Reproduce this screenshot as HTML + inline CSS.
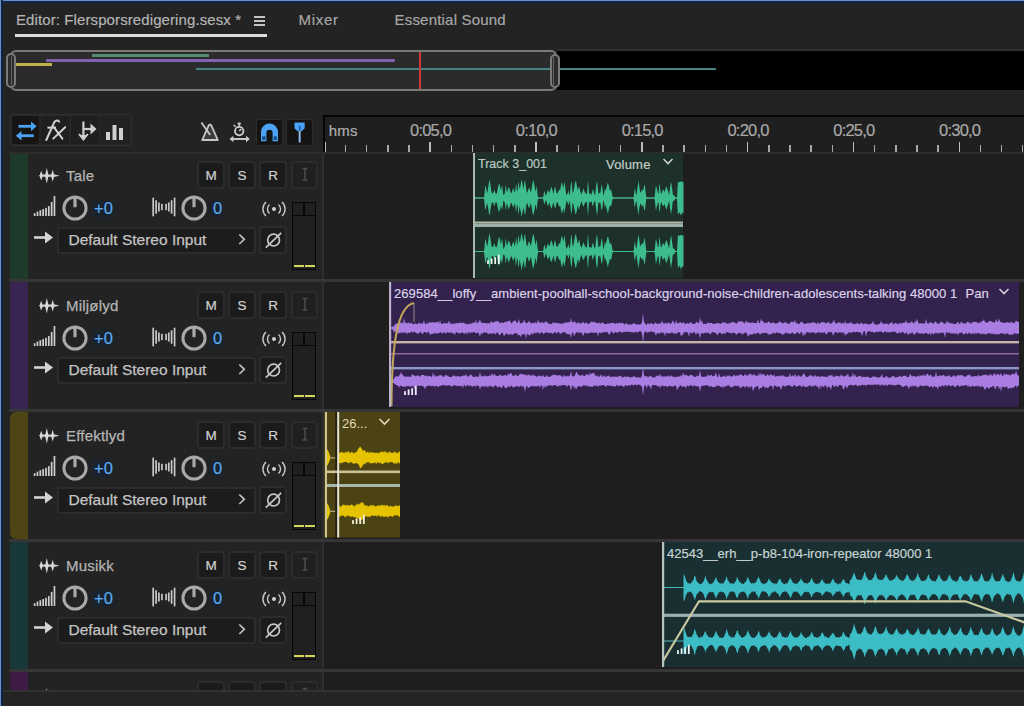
<!DOCTYPE html>
<html><head><meta charset="utf-8"><style>
html,body{margin:0;padding:0;}
body{width:1024px;height:706px;overflow:hidden;position:relative;background:#232323;font-family:"Liberation Sans", sans-serif;}
body>div,body>svg{position:absolute;}
</style></head><body>
<div style="left:0px;top:0px;width:1024px;height:1px;background:#6b90c6;"></div>
<div style="left:0px;top:1px;width:1024px;height:1.5px;background:#10264a;"></div>
<div style="left:0px;top:0px;width:1.4px;height:706px;background:#6b90c6;"></div>
<div style="left:1.4px;top:0px;width:1.7px;height:706px;background:#0e2446;"></div>
<div style="left:3px;top:40px;width:4px;height:666px;background:#26241f;"></div>
<div style="left:16px;top:12.30px;font-size:15px;line-height:15px;color:#b4b4b4;white-space:nowrap;letter-spacing:0.1px;-webkit-text-stroke:0.2px #b4b4b4;">Editor: Flersporsredigering.sesx *</div>
<div style="left:254.3px;top:15.8px;width:11.2px;height:2px;background:#c4c4c4;"></div>
<div style="left:254.3px;top:19.8px;width:11.2px;height:2px;background:#c4c4c4;"></div>
<div style="left:254.3px;top:23.8px;width:11.2px;height:2px;background:#c4c4c4;"></div>
<div style="left:15px;top:34px;width:252px;height:3px;background:#dcdcdc;"></div>
<div style="left:298.5px;top:12.30px;font-size:15px;line-height:15px;color:#a6a6a6;white-space:nowrap;letter-spacing:0.7px;-webkit-text-stroke:0.2px #a6a6a6;">Mixer</div>
<div style="left:394.5px;top:12.30px;font-size:15px;line-height:15px;color:#a6a6a6;white-space:nowrap;letter-spacing:0.2px;-webkit-text-stroke:0.2px #a6a6a6;">Essential Sound</div>
<div style="left:557px;top:49px;width:467px;height:2px;background:#303030;"></div>
<div style="left:557px;top:51px;width:467px;height:39px;background:#000;"></div>
<div style="left:10px;top:50px;width:547px;height:41px;background:#2b2b2b;box-sizing:border-box;border:2px solid #7a7a76;border-radius:6px;"></div>
<div style="left:54px;top:54px;width:3px;height:0px;background:#000;"></div>
<div style="left:16px;top:63px;width:36px;height:3px;background:#c2b24a;"></div>
<div style="left:46px;top:59px;width:349px;height:3px;background:#8261b0;border-radius:1px"></div>
<div style="left:92px;top:54px;width:117px;height:3px;background:#558a72;"></div>
<div style="left:196px;top:67.6px;width:520px;height:2.8px;background:#468484;"></div>
<div style="left:419px;top:52px;width:2px;height:37px;background:#d0383a;"></div>
<div style="left:6px;top:53px;width:10px;height:35px;background:#2b2b2b;box-sizing:border-box;border:2px solid #7a7a76;border-radius:5px;"></div>
<div style="left:10.5px;top:56px;width:1.2px;height:29px;background:#666;"></div>
<div style="left:550px;top:54px;width:10px;height:34px;background:#2b2b2b;box-sizing:border-box;border:2px solid #7a7a76;border-radius:5px;"></div>
<div style="left:552.5px;top:57px;width:1.2px;height:28px;background:#666;"></div>
<div style="left:10px;top:114px;width:122px;height:32px;background:#262626;box-sizing:border-box;border:1.5px solid #2f2f2f;border-radius:4px;"></div>
<div style="left:12px;top:116px;width:27px;height:28px;background:#171514;border-radius:2px"></div>
<div style="left:41px;top:116px;width:28px;height:28px;background:#1f1f1f;border-radius:2px"></div>
<div style="left:71px;top:116px;width:28px;height:28px;background:#1f1f1f;border-radius:2px"></div>
<div style="left:100.5px;top:116px;width:29.5px;height:28px;background:#222;border-radius:2px"></div>
<svg style="left:14px;top:120px;" width="26" height="24" viewBox="0 0 26 24"><path d="M4.5 6.3 H18" stroke="#4aa3f5" stroke-width="2.8" fill="none"/><path d="M17 1.4 L22.6 6.3 L17 11.2 Z" fill="#4aa3f5"/><path d="M7 15.7 H19.8" stroke="#4aa3f5" stroke-width="2.8" fill="none"/><path d="M7.5 10.9 L1.9 15.7 L7.5 20.5 Z" fill="#4aa3f5"/></svg>
<svg style="left:40px;top:116px;" width="30" height="28" viewBox="0 0 30 28"><path d="M19.2 5.6 C17.5 3.9, 14.6 4.3, 13.6 7.6 L6.3 24" stroke="#d0d0d0" stroke-width="2" fill="none" stroke-linecap="round"/><path d="M7.4 11.6 H16" stroke="#d0d0d0" stroke-width="2"/><path d="M13.8 11.2 L22.4 22.6 M25.2 11.2 L13.2 22.6" stroke="#d0d0d0" stroke-width="2" stroke-linecap="round"/></svg>
<svg style="left:76px;top:119px;" width="24" height="24" viewBox="0 0 24 24"><path d="M7.4 2.5 V19" stroke="#cfcfcf" stroke-width="2.2" fill="none"/><path d="M2.2 15.5 L7.4 22 L12.6 15.5 L11 14.5 L7.4 18.5 L3.8 14.5 Z" fill="#cfcfcf"/><path d="M4.5 16 L7.4 19.5 L10.3 16 Z" fill="#cfcfcf"/><path d="M7.4 10 H18" stroke="#cfcfcf" stroke-width="2.2" fill="none"/><path d="M14.5 4.5 L20.5 10 L14.5 15.5 Z" fill="#cfcfcf"/></svg>
<svg style="left:104px;top:122px;" width="22" height="20" viewBox="0 0 22 20"><rect x="2" y="10" width="4" height="8" fill="#cfcfcf"/><rect x="8.5" y="3" width="4" height="15" fill="#cfcfcf"/><rect x="15" y="6" width="4" height="12" fill="#cfcfcf"/></svg>
<svg style="left:199px;top:119px;" width="24" height="25" viewBox="0 0 24 25"><path d="M3.2 21 L9.6 6.6 Q11 4.4 12.4 6.6 L18.8 21 Z" fill="#3c3c3c" stroke="#c8c8c8" stroke-width="1.8" stroke-linejoin="round"/><path d="M2.4 3.6 L11.2 15.9" stroke="#c8c8c8" stroke-width="1.8"/></svg>
<svg style="left:227px;top:119px;" width="26" height="25" viewBox="0 0 26 25"><circle cx="12.2" cy="12.1" r="4.2" fill="none" stroke="#cfcfcf" stroke-width="1.8"/><path d="M12.2 12.1 L14.2 9.9" stroke="#cfcfcf" stroke-width="1.5"/><rect x="10.6" y="3.6" width="3.2" height="1.9" fill="#cfcfcf"/><path d="M12.2 5 V8" stroke="#cfcfcf" stroke-width="1.4"/><path d="M6.8 6 L8.4 7.6" stroke="#cfcfcf" stroke-width="1.6"/><path d="M5 20 H20.5" stroke="#cfcfcf" stroke-width="1.9"/><path d="M6.4 16.8 L2.6 20 L6.4 23.2 Z" fill="#cfcfcf"/><path d="M19 16.8 L22.8 20 L19 23.2 Z" fill="#cfcfcf"/></svg>
<div style="left:255.5px;top:118.5px;width:27.5px;height:27.5px;background:#151413;box-sizing:border-box;border:1.6px solid #2c2c2c;border-radius:3px;"></div>
<svg style="left:258px;top:121px;" width="23" height="23" viewBox="0 0 23 23"><path d="M3 20.3 V11 A8.5 8.5 0 0 1 20 11 V20.3 H14.6 V11.8 A3.1 3.1 0 0 0 8.4 11.8 V20.3 Z" fill="#4aa3f5"/><rect x="4.2" y="15.3" width="3.2" height="3.6" fill="#1a4a84"/><rect x="15.6" y="15.3" width="3.2" height="3.6" fill="#1a4a84"/></svg>
<div style="left:285.5px;top:118.5px;width:27.5px;height:27.5px;background:#151413;box-sizing:border-box;border:1.6px solid #2c2c2c;border-radius:3px;"></div>
<svg style="left:288px;top:121px;" width="23" height="23" viewBox="0 0 23 23"><path d="M6.5 1.6 H16.7 V7.2 L13.6 10.2 H9.6 L6.5 7.2 Z" fill="#4aa3f5"/><rect x="10.7" y="9" width="1.9" height="12.5" fill="#8ec4f0"/><rect x="11" y="4.8" width="1.3" height="5.2" fill="#1a4a84"/></svg>
<div style="left:323px;top:115px;width:701px;height:38px;background:#1f1f1f;"></div>
<div style="left:323px;top:115px;width:701px;height:2px;background:#050505;"></div>
<div style="left:323px;top:115px;width:2px;height:38px;background:#050505;"></div>
<div style="left:323px;top:152px;width:701px;height:2px;background:#2c2c2c;"></div>
<div style="left:328.7px;top:122.50px;font-size:15px;line-height:15px;color:#b0b0b0;white-space:nowrap;-webkit-text-stroke:0.2px #b0b0b0;letter-spacing:0.2px;">hms</div>
<div style="left:324.75px;top:141.5px;width:1.6px;height:11px;background:#bcbcbc;"></div>
<div style="left:344.75px;top:145px;width:1.6px;height:7.5px;background:#a8a8a8;"></div>
<div style="left:365.75px;top:145px;width:1.6px;height:7.5px;background:#a8a8a8;"></div>
<div style="left:387.25px;top:145px;width:1.6px;height:7.5px;background:#a8a8a8;"></div>
<div style="left:408.25px;top:145px;width:1.6px;height:7.5px;background:#a8a8a8;"></div>
<div style="left:429.25px;top:141.5px;width:1.6px;height:11px;background:#bcbcbc;"></div>
<div style="left:395.61px;top:121.83px;width:70px;text-align:center;font-size:16.5px;line-height:16.5px;color:#a8a8a8;white-space:nowrap;letter-spacing:-0.8px;-webkit-text-stroke:0.2px #a8a8a8;">0:05,0</div>
<div style="left:450.75px;top:145px;width:1.6px;height:7.5px;background:#a8a8a8;"></div>
<div style="left:471.75px;top:145px;width:1.6px;height:7.5px;background:#a8a8a8;"></div>
<div style="left:492.75px;top:145px;width:1.6px;height:7.5px;background:#a8a8a8;"></div>
<div style="left:514.25px;top:145px;width:1.6px;height:7.5px;background:#a8a8a8;"></div>
<div style="left:535.25px;top:141.5px;width:1.6px;height:11px;background:#bcbcbc;"></div>
<div style="left:501.42px;top:121.83px;width:70px;text-align:center;font-size:16.5px;line-height:16.5px;color:#a8a8a8;white-space:nowrap;letter-spacing:-0.8px;-webkit-text-stroke:0.2px #a8a8a8;">0:10,0</div>
<div style="left:556.25px;top:145px;width:1.6px;height:7.5px;background:#a8a8a8;"></div>
<div style="left:577.75px;top:145px;width:1.6px;height:7.5px;background:#a8a8a8;"></div>
<div style="left:598.75px;top:145px;width:1.6px;height:7.5px;background:#a8a8a8;"></div>
<div style="left:619.75px;top:145px;width:1.6px;height:7.5px;background:#a8a8a8;"></div>
<div style="left:641.25px;top:141.5px;width:1.6px;height:11px;background:#bcbcbc;"></div>
<div style="left:607.23px;top:121.83px;width:70px;text-align:center;font-size:16.5px;line-height:16.5px;color:#a8a8a8;white-space:nowrap;letter-spacing:-0.8px;-webkit-text-stroke:0.2px #a8a8a8;">0:15,0</div>
<div style="left:662.25px;top:145px;width:1.6px;height:7.5px;background:#a8a8a8;"></div>
<div style="left:683.25px;top:145px;width:1.6px;height:7.5px;background:#a8a8a8;"></div>
<div style="left:704.75px;top:145px;width:1.6px;height:7.5px;background:#a8a8a8;"></div>
<div style="left:725.75px;top:145px;width:1.6px;height:7.5px;background:#a8a8a8;"></div>
<div style="left:746.75px;top:141.5px;width:1.6px;height:11px;background:#bcbcbc;"></div>
<div style="left:713.04px;top:121.83px;width:70px;text-align:center;font-size:16.5px;line-height:16.5px;color:#a8a8a8;white-space:nowrap;letter-spacing:-0.8px;-webkit-text-stroke:0.2px #a8a8a8;">0:20,0</div>
<div style="left:768.25px;top:145px;width:1.6px;height:7.5px;background:#a8a8a8;"></div>
<div style="left:789.25px;top:145px;width:1.6px;height:7.5px;background:#a8a8a8;"></div>
<div style="left:810.25px;top:145px;width:1.6px;height:7.5px;background:#a8a8a8;"></div>
<div style="left:831.75px;top:145px;width:1.6px;height:7.5px;background:#a8a8a8;"></div>
<div style="left:852.75px;top:141.5px;width:1.6px;height:11px;background:#bcbcbc;"></div>
<div style="left:818.85px;top:121.83px;width:70px;text-align:center;font-size:16.5px;line-height:16.5px;color:#a8a8a8;white-space:nowrap;letter-spacing:-0.8px;-webkit-text-stroke:0.2px #a8a8a8;">0:25,0</div>
<div style="left:873.75px;top:145px;width:1.6px;height:7.5px;background:#a8a8a8;"></div>
<div style="left:895.25px;top:145px;width:1.6px;height:7.5px;background:#a8a8a8;"></div>
<div style="left:916.25px;top:145px;width:1.6px;height:7.5px;background:#a8a8a8;"></div>
<div style="left:937.25px;top:145px;width:1.6px;height:7.5px;background:#a8a8a8;"></div>
<div style="left:958.75px;top:141.5px;width:1.6px;height:11px;background:#bcbcbc;"></div>
<div style="left:924.66px;top:121.83px;width:70px;text-align:center;font-size:16.5px;line-height:16.5px;color:#a8a8a8;white-space:nowrap;letter-spacing:-0.8px;-webkit-text-stroke:0.2px #a8a8a8;">0:30,0</div>
<div style="left:979.75px;top:145px;width:1.6px;height:7.5px;background:#a8a8a8;"></div>
<div style="left:1000.75px;top:145px;width:1.6px;height:7.5px;background:#a8a8a8;"></div>
<div style="left:1021.75px;top:145px;width:1.6px;height:7.5px;background:#a8a8a8;"></div>
<div style="left:3px;top:152px;width:319px;height:127px;background:#232323;"></div>
<div style="left:9.5px;top:152px;width:18.5px;height:127px;background:#1e3a2b;border-radius:2px 0 0 2px;"></div>
<div style="left:322px;top:152px;width:2px;height:127px;background:#2e2e2e;"></div>
<div style="left:324px;top:152px;width:700px;height:127px;background:#1e1e1e;"></div>
<div style="left:9px;top:279px;width:1015px;height:3px;background:#363636;"></div>
<svg style="left:34px;top:164px;" width="30" height="22" viewBox="0 0 30 22"><path d="M4.5 11.7 L8 10.6 L21 10.6 L25.5 11.7 L21 12.8 L8 12.8 Z" fill="#d0d0d0"/><path d="M7.2 6.8 L8.9 11.7 L7.2 16.6 L5.5 11.7 Z M12.8 4 L14.6 11.7 L12.8 19.4 L11 11.7 Z M18.7 5.8 L20.4 11.7 L18.7 17.6 L17 11.7 Z" fill="#d8d8d8"/></svg>
<div style="left:66px;top:168.10px;font-size:15px;line-height:15px;color:#b4b4b4;white-space:nowrap;-webkit-text-stroke:0.25px #b4b4b4;letter-spacing:0.2px;">Tale</div>
<div style="left:197px;top:160.8px;width:27.5px;height:28px;background:#1b1b1b;box-sizing:border-box;border:2px solid #2c2c2c;border-radius:4px;"></div>
<div style="left:197.00px;top:169.07px;width:28px;text-align:center;font-size:13.5px;line-height:13.5px;color:#d0d0d0;white-space:nowrap;-webkit-text-stroke:0.2px #d0d0d0;">M</div>
<div style="left:228px;top:160.8px;width:27.5px;height:28px;background:#1b1b1b;box-sizing:border-box;border:2px solid #2c2c2c;border-radius:4px;"></div>
<div style="left:228.00px;top:169.07px;width:28px;text-align:center;font-size:13.5px;line-height:13.5px;color:#d0d0d0;white-space:nowrap;-webkit-text-stroke:0.2px #d0d0d0;">S</div>
<div style="left:259px;top:160.8px;width:27.5px;height:28px;background:#1b1b1b;box-sizing:border-box;border:2px solid #2c2c2c;border-radius:4px;"></div>
<div style="left:259.00px;top:169.07px;width:28px;text-align:center;font-size:13.5px;line-height:13.5px;color:#d0d0d0;white-space:nowrap;-webkit-text-stroke:0.2px #d0d0d0;">R</div>
<div style="left:290.5px;top:160.8px;width:27.5px;height:28px;background:#202020;box-sizing:border-box;border:2px solid #2c2c2c;border-radius:4px;"></div>
<svg style="left:290.5px;top:161px;" width="28" height="28" viewBox="0 0 28 28"><path d="M11.5 7.5 H16.5 M11.5 19 H16.5 M14 7.5 V19" stroke="#4c4c4c" stroke-width="1.5" fill="none"/></svg>
<svg style="left:33px;top:195.8px;" width="24" height="21" viewBox="0 0 24 21"><rect x="0.80" y="17.20" width="1.7" height="2.80" fill="#cfcfcf"/><rect x="3.63" y="15.60" width="1.7" height="4.40" fill="#cfcfcf"/><rect x="6.46" y="14.20" width="1.7" height="5.80" fill="#cfcfcf"/><rect x="9.29" y="13.10" width="1.7" height="6.90" fill="#cfcfcf"/><rect x="12.12" y="11.90" width="1.7" height="8.10" fill="#cfcfcf"/><rect x="14.95" y="10.10" width="1.7" height="9.90" fill="#cfcfcf"/><rect x="17.78" y="5.90" width="1.7" height="14.10" fill="#cfcfcf"/><rect x="20.61" y="0.00" width="1.7" height="20.00" fill="#cfcfcf"/></svg>
<svg style="left:62px;top:195px;" width="26" height="26" viewBox="0 0 26 26"><circle cx="13" cy="13" r="11.1" fill="none" stroke="#a9a9a9" stroke-width="3"/><rect x="11.4" y="3" width="3.2" height="9.2" fill="#a9a9a9"/></svg>
<div style="left:92px;top:200px;width:22px;height:17px;background:#19232e;border-radius:3px;filter:blur(2px);"></div>
<div style="left:94px;top:199.53px;font-size:16.5px;line-height:16.5px;color:#5aa8ee;white-space:nowrap;-webkit-text-stroke:0.2px #5aa8ee;">+0</div>
<svg style="left:151px;top:196.5px;" width="26" height="20" viewBox="0 0 26 20"><rect x="1.35" y="0.70" width="1.7" height="18.6" fill="#c8c8c8"/><rect x="4.25" y="3.25" width="1.7" height="13.5" fill="#c8c8c8"/><rect x="7.05" y="5.50" width="1.7" height="9" fill="#c8c8c8"/><rect x="10.05" y="6.80" width="1.7" height="6.4" fill="#c8c8c8"/><rect x="14.25" y="6.80" width="1.7" height="6.4" fill="#c8c8c8"/><rect x="16.95" y="5.50" width="1.7" height="9" fill="#c8c8c8"/><rect x="19.75" y="3.25" width="1.7" height="13.5" fill="#c8c8c8"/><rect x="22.75" y="0.70" width="1.7" height="18.6" fill="#c8c8c8"/></svg>
<svg style="left:181px;top:195px;" width="26" height="26" viewBox="0 0 26 26"><circle cx="13" cy="13" r="11.1" fill="none" stroke="#a9a9a9" stroke-width="3"/><rect x="11.4" y="3" width="3.2" height="9.2" fill="#a9a9a9"/></svg>
<div style="left:211px;top:200px;width:13px;height:17px;background:#19232e;border-radius:3px;filter:blur(2px);"></div>
<div style="left:213px;top:199.53px;font-size:16.5px;line-height:16.5px;color:#5aa8ee;white-space:nowrap;-webkit-text-stroke:0.2px #5aa8ee;">0</div>
<svg style="left:262px;top:200px;" width="24" height="18" viewBox="0 0 24 18"><circle cx="12" cy="9" r="2" fill="#d0d0d0"/><path d="M7.5 4.5 A6 6 0 0 0 7.5 13.5 M16.5 4.5 A6 6 0 0 1 16.5 13.5" stroke="#c8c8c8" stroke-width="1.4" fill="none"/><path d="M4 2 A9.5 9.5 0 0 0 4 16 M20 2 A9.5 9.5 0 0 1 20 16" stroke="#c8c8c8" stroke-width="1.4" fill="none"/></svg>
<div style="left:292px;top:201.5px;width:24px;height:68px;background:#202020;box-sizing:border-box;border:1.6px solid #060606;"></div>
<div style="left:292px;top:214.8px;width:24px;height:1.6px;background:#060606;"></div>
<div style="left:303.2px;top:201.5px;width:1.6px;height:14px;background:#060606;"></div>
<div style="left:294px;top:265.2px;width:9.5px;height:2.2px;background:#d6d65a;"></div>
<div style="left:305px;top:265.2px;width:9.5px;height:2.2px;background:#d6d65a;"></div>
<svg style="left:33px;top:230px;" width="22" height="15" viewBox="0 0 22 15"><path d="M1 7.5 H14" stroke="#d4d4d4" stroke-width="2.6"/><path d="M12 1.5 L20 7.5 L12 13.5 Z" fill="#d4d4d4"/></svg>
<div style="left:57px;top:226.5px;width:198.5px;height:27px;background:#1c1c1c;box-sizing:border-box;border:2px solid #2c2c2c;border-radius:3px;"></div>
<div style="left:68.5px;top:231.68px;font-size:15.5px;line-height:15.5px;color:#c4c4c4;white-space:nowrap;-webkit-text-stroke:0.25px #c4c4c4;">Default Stereo Input</div>
<svg style="left:236px;top:232.3px;" width="12" height="14" viewBox="0 0 12 14"><path d="M3.3 2.5 L8.3 7.3 L3.3 12" stroke="#c0c0c0" stroke-width="1.7" fill="none"/></svg>
<div style="left:259px;top:226px;width:27.5px;height:27.5px;background:#1c1c1c;box-sizing:border-box;border:2px solid #2c2c2c;border-radius:4px;"></div>
<svg style="left:259px;top:226.5px;" width="28" height="27" viewBox="0 0 28 27"><circle cx="14.6" cy="13.1" r="5.9" fill="none" stroke="#c8c8c8" stroke-width="1.7"/><path d="M6.8 20.7 L22.2 5.8" stroke="#c8c8c8" stroke-width="1.7"/></svg>
<div style="left:3px;top:282px;width:319px;height:127px;background:#232323;"></div>
<div style="left:9.5px;top:282px;width:18.5px;height:127px;background:#3a2451;border-radius:2px 0 0 2px;"></div>
<div style="left:322px;top:282px;width:2px;height:127px;background:#2e2e2e;"></div>
<div style="left:324px;top:282px;width:700px;height:127px;background:#1e1e1e;"></div>
<div style="left:9px;top:409px;width:1015px;height:3px;background:#363636;"></div>
<svg style="left:34px;top:294px;" width="30" height="22" viewBox="0 0 30 22"><path d="M4.5 11.7 L8 10.6 L21 10.6 L25.5 11.7 L21 12.8 L8 12.8 Z" fill="#d0d0d0"/><path d="M7.2 6.8 L8.9 11.7 L7.2 16.6 L5.5 11.7 Z M12.8 4 L14.6 11.7 L12.8 19.4 L11 11.7 Z M18.7 5.8 L20.4 11.7 L18.7 17.6 L17 11.7 Z" fill="#d8d8d8"/></svg>
<div style="left:66px;top:298.10px;font-size:15px;line-height:15px;color:#b4b4b4;white-space:nowrap;-webkit-text-stroke:0.25px #b4b4b4;letter-spacing:0.2px;">Miljølyd</div>
<div style="left:197px;top:290.8px;width:27.5px;height:28px;background:#1b1b1b;box-sizing:border-box;border:2px solid #2c2c2c;border-radius:4px;"></div>
<div style="left:197.00px;top:299.07px;width:28px;text-align:center;font-size:13.5px;line-height:13.5px;color:#d0d0d0;white-space:nowrap;-webkit-text-stroke:0.2px #d0d0d0;">M</div>
<div style="left:228px;top:290.8px;width:27.5px;height:28px;background:#1b1b1b;box-sizing:border-box;border:2px solid #2c2c2c;border-radius:4px;"></div>
<div style="left:228.00px;top:299.07px;width:28px;text-align:center;font-size:13.5px;line-height:13.5px;color:#d0d0d0;white-space:nowrap;-webkit-text-stroke:0.2px #d0d0d0;">S</div>
<div style="left:259px;top:290.8px;width:27.5px;height:28px;background:#1b1b1b;box-sizing:border-box;border:2px solid #2c2c2c;border-radius:4px;"></div>
<div style="left:259.00px;top:299.07px;width:28px;text-align:center;font-size:13.5px;line-height:13.5px;color:#d0d0d0;white-space:nowrap;-webkit-text-stroke:0.2px #d0d0d0;">R</div>
<div style="left:290.5px;top:290.8px;width:27.5px;height:28px;background:#202020;box-sizing:border-box;border:2px solid #2c2c2c;border-radius:4px;"></div>
<svg style="left:290.5px;top:291px;" width="28" height="28" viewBox="0 0 28 28"><path d="M11.5 7.5 H16.5 M11.5 19 H16.5 M14 7.5 V19" stroke="#4c4c4c" stroke-width="1.5" fill="none"/></svg>
<svg style="left:33px;top:325.8px;" width="24" height="21" viewBox="0 0 24 21"><rect x="0.80" y="17.20" width="1.7" height="2.80" fill="#cfcfcf"/><rect x="3.63" y="15.60" width="1.7" height="4.40" fill="#cfcfcf"/><rect x="6.46" y="14.20" width="1.7" height="5.80" fill="#cfcfcf"/><rect x="9.29" y="13.10" width="1.7" height="6.90" fill="#cfcfcf"/><rect x="12.12" y="11.90" width="1.7" height="8.10" fill="#cfcfcf"/><rect x="14.95" y="10.10" width="1.7" height="9.90" fill="#cfcfcf"/><rect x="17.78" y="5.90" width="1.7" height="14.10" fill="#cfcfcf"/><rect x="20.61" y="0.00" width="1.7" height="20.00" fill="#cfcfcf"/></svg>
<svg style="left:62px;top:325px;" width="26" height="26" viewBox="0 0 26 26"><circle cx="13" cy="13" r="11.1" fill="none" stroke="#a9a9a9" stroke-width="3"/><rect x="11.4" y="3" width="3.2" height="9.2" fill="#a9a9a9"/></svg>
<div style="left:92px;top:330px;width:22px;height:17px;background:#19232e;border-radius:3px;filter:blur(2px);"></div>
<div style="left:94px;top:329.53px;font-size:16.5px;line-height:16.5px;color:#5aa8ee;white-space:nowrap;-webkit-text-stroke:0.2px #5aa8ee;">+0</div>
<svg style="left:151px;top:326.5px;" width="26" height="20" viewBox="0 0 26 20"><rect x="1.35" y="0.70" width="1.7" height="18.6" fill="#c8c8c8"/><rect x="4.25" y="3.25" width="1.7" height="13.5" fill="#c8c8c8"/><rect x="7.05" y="5.50" width="1.7" height="9" fill="#c8c8c8"/><rect x="10.05" y="6.80" width="1.7" height="6.4" fill="#c8c8c8"/><rect x="14.25" y="6.80" width="1.7" height="6.4" fill="#c8c8c8"/><rect x="16.95" y="5.50" width="1.7" height="9" fill="#c8c8c8"/><rect x="19.75" y="3.25" width="1.7" height="13.5" fill="#c8c8c8"/><rect x="22.75" y="0.70" width="1.7" height="18.6" fill="#c8c8c8"/></svg>
<svg style="left:181px;top:325px;" width="26" height="26" viewBox="0 0 26 26"><circle cx="13" cy="13" r="11.1" fill="none" stroke="#a9a9a9" stroke-width="3"/><rect x="11.4" y="3" width="3.2" height="9.2" fill="#a9a9a9"/></svg>
<div style="left:211px;top:330px;width:13px;height:17px;background:#19232e;border-radius:3px;filter:blur(2px);"></div>
<div style="left:213px;top:329.53px;font-size:16.5px;line-height:16.5px;color:#5aa8ee;white-space:nowrap;-webkit-text-stroke:0.2px #5aa8ee;">0</div>
<svg style="left:262px;top:330px;" width="24" height="18" viewBox="0 0 24 18"><circle cx="12" cy="9" r="2" fill="#d0d0d0"/><path d="M7.5 4.5 A6 6 0 0 0 7.5 13.5 M16.5 4.5 A6 6 0 0 1 16.5 13.5" stroke="#c8c8c8" stroke-width="1.4" fill="none"/><path d="M4 2 A9.5 9.5 0 0 0 4 16 M20 2 A9.5 9.5 0 0 1 20 16" stroke="#c8c8c8" stroke-width="1.4" fill="none"/></svg>
<div style="left:292px;top:331.5px;width:24px;height:68px;background:#202020;box-sizing:border-box;border:1.6px solid #060606;"></div>
<div style="left:292px;top:344.8px;width:24px;height:1.6px;background:#060606;"></div>
<div style="left:303.2px;top:331.5px;width:1.6px;height:14px;background:#060606;"></div>
<div style="left:294px;top:395.2px;width:9.5px;height:2.2px;background:#d6d65a;"></div>
<div style="left:305px;top:395.2px;width:9.5px;height:2.2px;background:#d6d65a;"></div>
<svg style="left:33px;top:360px;" width="22" height="15" viewBox="0 0 22 15"><path d="M1 7.5 H14" stroke="#d4d4d4" stroke-width="2.6"/><path d="M12 1.5 L20 7.5 L12 13.5 Z" fill="#d4d4d4"/></svg>
<div style="left:57px;top:356.5px;width:198.5px;height:27px;background:#1c1c1c;box-sizing:border-box;border:2px solid #2c2c2c;border-radius:3px;"></div>
<div style="left:68.5px;top:361.68px;font-size:15.5px;line-height:15.5px;color:#c4c4c4;white-space:nowrap;-webkit-text-stroke:0.25px #c4c4c4;">Default Stereo Input</div>
<svg style="left:236px;top:362.3px;" width="12" height="14" viewBox="0 0 12 14"><path d="M3.3 2.5 L8.3 7.3 L3.3 12" stroke="#c0c0c0" stroke-width="1.7" fill="none"/></svg>
<div style="left:259px;top:356px;width:27.5px;height:27.5px;background:#1c1c1c;box-sizing:border-box;border:2px solid #2c2c2c;border-radius:4px;"></div>
<svg style="left:259px;top:356.5px;" width="28" height="27" viewBox="0 0 28 27"><circle cx="14.6" cy="13.1" r="5.9" fill="none" stroke="#c8c8c8" stroke-width="1.7"/><path d="M6.8 20.7 L22.2 5.8" stroke="#c8c8c8" stroke-width="1.7"/></svg>
<div style="left:3px;top:412px;width:319px;height:127px;background:#232323;"></div>
<div style="left:9.5px;top:412px;width:18.5px;height:127px;background:#4e4515;border-radius:6px 0 0 6px;"></div>
<div style="left:322px;top:412px;width:2px;height:127px;background:#2e2e2e;"></div>
<div style="left:324px;top:412px;width:700px;height:127px;background:#1e1e1e;"></div>
<div style="left:9px;top:539px;width:1015px;height:3px;background:#363636;"></div>
<svg style="left:34px;top:424px;" width="30" height="22" viewBox="0 0 30 22"><path d="M4.5 11.7 L8 10.6 L21 10.6 L25.5 11.7 L21 12.8 L8 12.8 Z" fill="#d0d0d0"/><path d="M7.2 6.8 L8.9 11.7 L7.2 16.6 L5.5 11.7 Z M12.8 4 L14.6 11.7 L12.8 19.4 L11 11.7 Z M18.7 5.8 L20.4 11.7 L18.7 17.6 L17 11.7 Z" fill="#d8d8d8"/></svg>
<div style="left:66px;top:428.10px;font-size:15px;line-height:15px;color:#b4b4b4;white-space:nowrap;-webkit-text-stroke:0.25px #b4b4b4;letter-spacing:0.2px;">Effektlyd</div>
<div style="left:197px;top:420.8px;width:27.5px;height:28px;background:#1b1b1b;box-sizing:border-box;border:2px solid #2c2c2c;border-radius:4px;"></div>
<div style="left:197.00px;top:429.07px;width:28px;text-align:center;font-size:13.5px;line-height:13.5px;color:#d0d0d0;white-space:nowrap;-webkit-text-stroke:0.2px #d0d0d0;">M</div>
<div style="left:228px;top:420.8px;width:27.5px;height:28px;background:#1b1b1b;box-sizing:border-box;border:2px solid #2c2c2c;border-radius:4px;"></div>
<div style="left:228.00px;top:429.07px;width:28px;text-align:center;font-size:13.5px;line-height:13.5px;color:#d0d0d0;white-space:nowrap;-webkit-text-stroke:0.2px #d0d0d0;">S</div>
<div style="left:259px;top:420.8px;width:27.5px;height:28px;background:#1b1b1b;box-sizing:border-box;border:2px solid #2c2c2c;border-radius:4px;"></div>
<div style="left:259.00px;top:429.07px;width:28px;text-align:center;font-size:13.5px;line-height:13.5px;color:#d0d0d0;white-space:nowrap;-webkit-text-stroke:0.2px #d0d0d0;">R</div>
<div style="left:290.5px;top:420.8px;width:27.5px;height:28px;background:#202020;box-sizing:border-box;border:2px solid #2c2c2c;border-radius:4px;"></div>
<svg style="left:290.5px;top:421px;" width="28" height="28" viewBox="0 0 28 28"><path d="M11.5 7.5 H16.5 M11.5 19 H16.5 M14 7.5 V19" stroke="#4c4c4c" stroke-width="1.5" fill="none"/></svg>
<svg style="left:33px;top:455.8px;" width="24" height="21" viewBox="0 0 24 21"><rect x="0.80" y="17.20" width="1.7" height="2.80" fill="#cfcfcf"/><rect x="3.63" y="15.60" width="1.7" height="4.40" fill="#cfcfcf"/><rect x="6.46" y="14.20" width="1.7" height="5.80" fill="#cfcfcf"/><rect x="9.29" y="13.10" width="1.7" height="6.90" fill="#cfcfcf"/><rect x="12.12" y="11.90" width="1.7" height="8.10" fill="#cfcfcf"/><rect x="14.95" y="10.10" width="1.7" height="9.90" fill="#cfcfcf"/><rect x="17.78" y="5.90" width="1.7" height="14.10" fill="#cfcfcf"/><rect x="20.61" y="0.00" width="1.7" height="20.00" fill="#cfcfcf"/></svg>
<svg style="left:62px;top:455px;" width="26" height="26" viewBox="0 0 26 26"><circle cx="13" cy="13" r="11.1" fill="none" stroke="#a9a9a9" stroke-width="3"/><rect x="11.4" y="3" width="3.2" height="9.2" fill="#a9a9a9"/></svg>
<div style="left:92px;top:460px;width:22px;height:17px;background:#19232e;border-radius:3px;filter:blur(2px);"></div>
<div style="left:94px;top:459.53px;font-size:16.5px;line-height:16.5px;color:#5aa8ee;white-space:nowrap;-webkit-text-stroke:0.2px #5aa8ee;">+0</div>
<svg style="left:151px;top:456.5px;" width="26" height="20" viewBox="0 0 26 20"><rect x="1.35" y="0.70" width="1.7" height="18.6" fill="#c8c8c8"/><rect x="4.25" y="3.25" width="1.7" height="13.5" fill="#c8c8c8"/><rect x="7.05" y="5.50" width="1.7" height="9" fill="#c8c8c8"/><rect x="10.05" y="6.80" width="1.7" height="6.4" fill="#c8c8c8"/><rect x="14.25" y="6.80" width="1.7" height="6.4" fill="#c8c8c8"/><rect x="16.95" y="5.50" width="1.7" height="9" fill="#c8c8c8"/><rect x="19.75" y="3.25" width="1.7" height="13.5" fill="#c8c8c8"/><rect x="22.75" y="0.70" width="1.7" height="18.6" fill="#c8c8c8"/></svg>
<svg style="left:181px;top:455px;" width="26" height="26" viewBox="0 0 26 26"><circle cx="13" cy="13" r="11.1" fill="none" stroke="#a9a9a9" stroke-width="3"/><rect x="11.4" y="3" width="3.2" height="9.2" fill="#a9a9a9"/></svg>
<div style="left:211px;top:460px;width:13px;height:17px;background:#19232e;border-radius:3px;filter:blur(2px);"></div>
<div style="left:213px;top:459.53px;font-size:16.5px;line-height:16.5px;color:#5aa8ee;white-space:nowrap;-webkit-text-stroke:0.2px #5aa8ee;">0</div>
<svg style="left:262px;top:460px;" width="24" height="18" viewBox="0 0 24 18"><circle cx="12" cy="9" r="2" fill="#d0d0d0"/><path d="M7.5 4.5 A6 6 0 0 0 7.5 13.5 M16.5 4.5 A6 6 0 0 1 16.5 13.5" stroke="#c8c8c8" stroke-width="1.4" fill="none"/><path d="M4 2 A9.5 9.5 0 0 0 4 16 M20 2 A9.5 9.5 0 0 1 20 16" stroke="#c8c8c8" stroke-width="1.4" fill="none"/></svg>
<div style="left:292px;top:461.5px;width:24px;height:68px;background:#202020;box-sizing:border-box;border:1.6px solid #060606;"></div>
<div style="left:292px;top:474.8px;width:24px;height:1.6px;background:#060606;"></div>
<div style="left:303.2px;top:461.5px;width:1.6px;height:14px;background:#060606;"></div>
<div style="left:294px;top:525.2px;width:9.5px;height:2.2px;background:#d6d65a;"></div>
<div style="left:305px;top:525.2px;width:9.5px;height:2.2px;background:#d6d65a;"></div>
<svg style="left:33px;top:490px;" width="22" height="15" viewBox="0 0 22 15"><path d="M1 7.5 H14" stroke="#d4d4d4" stroke-width="2.6"/><path d="M12 1.5 L20 7.5 L12 13.5 Z" fill="#d4d4d4"/></svg>
<div style="left:57px;top:486.5px;width:198.5px;height:27px;background:#1c1c1c;box-sizing:border-box;border:2px solid #2c2c2c;border-radius:3px;"></div>
<div style="left:68.5px;top:491.68px;font-size:15.5px;line-height:15.5px;color:#c4c4c4;white-space:nowrap;-webkit-text-stroke:0.25px #c4c4c4;">Default Stereo Input</div>
<svg style="left:236px;top:492.3px;" width="12" height="14" viewBox="0 0 12 14"><path d="M3.3 2.5 L8.3 7.3 L3.3 12" stroke="#c0c0c0" stroke-width="1.7" fill="none"/></svg>
<div style="left:259px;top:486px;width:27.5px;height:27.5px;background:#1c1c1c;box-sizing:border-box;border:2px solid #2c2c2c;border-radius:4px;"></div>
<svg style="left:259px;top:486.5px;" width="28" height="27" viewBox="0 0 28 27"><circle cx="14.6" cy="13.1" r="5.9" fill="none" stroke="#c8c8c8" stroke-width="1.7"/><path d="M6.8 20.7 L22.2 5.8" stroke="#c8c8c8" stroke-width="1.7"/></svg>
<div style="left:3px;top:542px;width:319px;height:127px;background:#232323;"></div>
<div style="left:9.5px;top:542px;width:18.5px;height:127px;background:#19383a;border-radius:2px 0 0 2px;"></div>
<div style="left:322px;top:542px;width:2px;height:127px;background:#2e2e2e;"></div>
<div style="left:324px;top:542px;width:700px;height:127px;background:#1e1e1e;"></div>
<div style="left:9px;top:669px;width:1015px;height:3px;background:#363636;"></div>
<svg style="left:34px;top:554px;" width="30" height="22" viewBox="0 0 30 22"><path d="M4.5 11.7 L8 10.6 L21 10.6 L25.5 11.7 L21 12.8 L8 12.8 Z" fill="#d0d0d0"/><path d="M7.2 6.8 L8.9 11.7 L7.2 16.6 L5.5 11.7 Z M12.8 4 L14.6 11.7 L12.8 19.4 L11 11.7 Z M18.7 5.8 L20.4 11.7 L18.7 17.6 L17 11.7 Z" fill="#d8d8d8"/></svg>
<div style="left:66px;top:558.10px;font-size:15px;line-height:15px;color:#b4b4b4;white-space:nowrap;-webkit-text-stroke:0.25px #b4b4b4;letter-spacing:0.2px;">Musikk</div>
<div style="left:197px;top:550.8px;width:27.5px;height:28px;background:#1b1b1b;box-sizing:border-box;border:2px solid #2c2c2c;border-radius:4px;"></div>
<div style="left:197.00px;top:559.07px;width:28px;text-align:center;font-size:13.5px;line-height:13.5px;color:#d0d0d0;white-space:nowrap;-webkit-text-stroke:0.2px #d0d0d0;">M</div>
<div style="left:228px;top:550.8px;width:27.5px;height:28px;background:#1b1b1b;box-sizing:border-box;border:2px solid #2c2c2c;border-radius:4px;"></div>
<div style="left:228.00px;top:559.07px;width:28px;text-align:center;font-size:13.5px;line-height:13.5px;color:#d0d0d0;white-space:nowrap;-webkit-text-stroke:0.2px #d0d0d0;">S</div>
<div style="left:259px;top:550.8px;width:27.5px;height:28px;background:#1b1b1b;box-sizing:border-box;border:2px solid #2c2c2c;border-radius:4px;"></div>
<div style="left:259.00px;top:559.07px;width:28px;text-align:center;font-size:13.5px;line-height:13.5px;color:#d0d0d0;white-space:nowrap;-webkit-text-stroke:0.2px #d0d0d0;">R</div>
<div style="left:290.5px;top:550.8px;width:27.5px;height:28px;background:#202020;box-sizing:border-box;border:2px solid #2c2c2c;border-radius:4px;"></div>
<svg style="left:290.5px;top:551px;" width="28" height="28" viewBox="0 0 28 28"><path d="M11.5 7.5 H16.5 M11.5 19 H16.5 M14 7.5 V19" stroke="#4c4c4c" stroke-width="1.5" fill="none"/></svg>
<svg style="left:33px;top:585.8px;" width="24" height="21" viewBox="0 0 24 21"><rect x="0.80" y="17.20" width="1.7" height="2.80" fill="#cfcfcf"/><rect x="3.63" y="15.60" width="1.7" height="4.40" fill="#cfcfcf"/><rect x="6.46" y="14.20" width="1.7" height="5.80" fill="#cfcfcf"/><rect x="9.29" y="13.10" width="1.7" height="6.90" fill="#cfcfcf"/><rect x="12.12" y="11.90" width="1.7" height="8.10" fill="#cfcfcf"/><rect x="14.95" y="10.10" width="1.7" height="9.90" fill="#cfcfcf"/><rect x="17.78" y="5.90" width="1.7" height="14.10" fill="#cfcfcf"/><rect x="20.61" y="0.00" width="1.7" height="20.00" fill="#cfcfcf"/></svg>
<svg style="left:62px;top:585px;" width="26" height="26" viewBox="0 0 26 26"><circle cx="13" cy="13" r="11.1" fill="none" stroke="#a9a9a9" stroke-width="3"/><rect x="11.4" y="3" width="3.2" height="9.2" fill="#a9a9a9"/></svg>
<div style="left:92px;top:590px;width:22px;height:17px;background:#19232e;border-radius:3px;filter:blur(2px);"></div>
<div style="left:94px;top:589.53px;font-size:16.5px;line-height:16.5px;color:#5aa8ee;white-space:nowrap;-webkit-text-stroke:0.2px #5aa8ee;">+0</div>
<svg style="left:151px;top:586.5px;" width="26" height="20" viewBox="0 0 26 20"><rect x="1.35" y="0.70" width="1.7" height="18.6" fill="#c8c8c8"/><rect x="4.25" y="3.25" width="1.7" height="13.5" fill="#c8c8c8"/><rect x="7.05" y="5.50" width="1.7" height="9" fill="#c8c8c8"/><rect x="10.05" y="6.80" width="1.7" height="6.4" fill="#c8c8c8"/><rect x="14.25" y="6.80" width="1.7" height="6.4" fill="#c8c8c8"/><rect x="16.95" y="5.50" width="1.7" height="9" fill="#c8c8c8"/><rect x="19.75" y="3.25" width="1.7" height="13.5" fill="#c8c8c8"/><rect x="22.75" y="0.70" width="1.7" height="18.6" fill="#c8c8c8"/></svg>
<svg style="left:181px;top:585px;" width="26" height="26" viewBox="0 0 26 26"><circle cx="13" cy="13" r="11.1" fill="none" stroke="#a9a9a9" stroke-width="3"/><rect x="11.4" y="3" width="3.2" height="9.2" fill="#a9a9a9"/></svg>
<div style="left:211px;top:590px;width:13px;height:17px;background:#19232e;border-radius:3px;filter:blur(2px);"></div>
<div style="left:213px;top:589.53px;font-size:16.5px;line-height:16.5px;color:#5aa8ee;white-space:nowrap;-webkit-text-stroke:0.2px #5aa8ee;">0</div>
<svg style="left:262px;top:590px;" width="24" height="18" viewBox="0 0 24 18"><circle cx="12" cy="9" r="2" fill="#d0d0d0"/><path d="M7.5 4.5 A6 6 0 0 0 7.5 13.5 M16.5 4.5 A6 6 0 0 1 16.5 13.5" stroke="#c8c8c8" stroke-width="1.4" fill="none"/><path d="M4 2 A9.5 9.5 0 0 0 4 16 M20 2 A9.5 9.5 0 0 1 20 16" stroke="#c8c8c8" stroke-width="1.4" fill="none"/></svg>
<div style="left:292px;top:591.5px;width:24px;height:68px;background:#202020;box-sizing:border-box;border:1.6px solid #060606;"></div>
<div style="left:292px;top:604.8px;width:24px;height:1.6px;background:#060606;"></div>
<div style="left:303.2px;top:591.5px;width:1.6px;height:14px;background:#060606;"></div>
<div style="left:294px;top:655.2px;width:9.5px;height:2.2px;background:#d6d65a;"></div>
<div style="left:305px;top:655.2px;width:9.5px;height:2.2px;background:#d6d65a;"></div>
<svg style="left:33px;top:620px;" width="22" height="15" viewBox="0 0 22 15"><path d="M1 7.5 H14" stroke="#d4d4d4" stroke-width="2.6"/><path d="M12 1.5 L20 7.5 L12 13.5 Z" fill="#d4d4d4"/></svg>
<div style="left:57px;top:616.5px;width:198.5px;height:27px;background:#1c1c1c;box-sizing:border-box;border:2px solid #2c2c2c;border-radius:3px;"></div>
<div style="left:68.5px;top:621.68px;font-size:15.5px;line-height:15.5px;color:#c4c4c4;white-space:nowrap;-webkit-text-stroke:0.25px #c4c4c4;">Default Stereo Input</div>
<svg style="left:236px;top:622.3px;" width="12" height="14" viewBox="0 0 12 14"><path d="M3.3 2.5 L8.3 7.3 L3.3 12" stroke="#c0c0c0" stroke-width="1.7" fill="none"/></svg>
<div style="left:259px;top:616px;width:27.5px;height:27.5px;background:#1c1c1c;box-sizing:border-box;border:2px solid #2c2c2c;border-radius:4px;"></div>
<svg style="left:259px;top:616.5px;" width="28" height="27" viewBox="0 0 28 27"><circle cx="14.6" cy="13.1" r="5.9" fill="none" stroke="#c8c8c8" stroke-width="1.7"/><path d="M6.8 20.7 L22.2 5.8" stroke="#c8c8c8" stroke-width="1.7"/></svg>
<div style="left:3px;top:672px;width:319px;height:127px;background:#232323;"></div>
<div style="left:9.5px;top:672px;width:18.5px;height:127px;background:#3e1c46;border-radius:2px 0 0 2px;"></div>
<div style="left:322px;top:672px;width:2px;height:127px;background:#2e2e2e;"></div>
<div style="left:324px;top:672px;width:700px;height:127px;background:#1e1e1e;"></div>
<div style="left:9px;top:799px;width:1015px;height:3px;background:#363636;"></div>
<svg style="left:34px;top:684px;" width="30" height="22" viewBox="0 0 30 22"><path d="M4.5 11.7 L8 10.6 L21 10.6 L25.5 11.7 L21 12.8 L8 12.8 Z" fill="#d0d0d0"/><path d="M7.2 6.8 L8.9 11.7 L7.2 16.6 L5.5 11.7 Z M12.8 4 L14.6 11.7 L12.8 19.4 L11 11.7 Z M18.7 5.8 L20.4 11.7 L18.7 17.6 L17 11.7 Z" fill="#d8d8d8"/></svg>
<div style="left:66px;top:688.10px;font-size:15px;line-height:15px;color:#b4b4b4;white-space:nowrap;-webkit-text-stroke:0.25px #b4b4b4;letter-spacing:0.2px;">Fx</div>
<div style="left:197px;top:680.8px;width:27.5px;height:28px;background:#1b1b1b;box-sizing:border-box;border:2px solid #2c2c2c;border-radius:4px;"></div>
<div style="left:197.00px;top:689.07px;width:28px;text-align:center;font-size:13.5px;line-height:13.5px;color:#d0d0d0;white-space:nowrap;-webkit-text-stroke:0.2px #d0d0d0;">M</div>
<div style="left:228px;top:680.8px;width:27.5px;height:28px;background:#1b1b1b;box-sizing:border-box;border:2px solid #2c2c2c;border-radius:4px;"></div>
<div style="left:228.00px;top:689.07px;width:28px;text-align:center;font-size:13.5px;line-height:13.5px;color:#d0d0d0;white-space:nowrap;-webkit-text-stroke:0.2px #d0d0d0;">S</div>
<div style="left:259px;top:680.8px;width:27.5px;height:28px;background:#1b1b1b;box-sizing:border-box;border:2px solid #2c2c2c;border-radius:4px;"></div>
<div style="left:259.00px;top:689.07px;width:28px;text-align:center;font-size:13.5px;line-height:13.5px;color:#d0d0d0;white-space:nowrap;-webkit-text-stroke:0.2px #d0d0d0;">R</div>
<div style="left:290.5px;top:680.8px;width:27.5px;height:28px;background:#202020;box-sizing:border-box;border:2px solid #2c2c2c;border-radius:4px;"></div>
<svg style="left:290.5px;top:681px;" width="28" height="28" viewBox="0 0 28 28"><path d="M11.5 7.5 H16.5 M11.5 19 H16.5 M14 7.5 V19" stroke="#4c4c4c" stroke-width="1.5" fill="none"/></svg>
<svg style="left:33px;top:715.8px;" width="24" height="21" viewBox="0 0 24 21"><rect x="0.80" y="17.20" width="1.7" height="2.80" fill="#cfcfcf"/><rect x="3.63" y="15.60" width="1.7" height="4.40" fill="#cfcfcf"/><rect x="6.46" y="14.20" width="1.7" height="5.80" fill="#cfcfcf"/><rect x="9.29" y="13.10" width="1.7" height="6.90" fill="#cfcfcf"/><rect x="12.12" y="11.90" width="1.7" height="8.10" fill="#cfcfcf"/><rect x="14.95" y="10.10" width="1.7" height="9.90" fill="#cfcfcf"/><rect x="17.78" y="5.90" width="1.7" height="14.10" fill="#cfcfcf"/><rect x="20.61" y="0.00" width="1.7" height="20.00" fill="#cfcfcf"/></svg>
<svg style="left:62px;top:715px;" width="26" height="26" viewBox="0 0 26 26"><circle cx="13" cy="13" r="11.1" fill="none" stroke="#a9a9a9" stroke-width="3"/><rect x="11.4" y="3" width="3.2" height="9.2" fill="#a9a9a9"/></svg>
<div style="left:92px;top:720px;width:22px;height:17px;background:#19232e;border-radius:3px;filter:blur(2px);"></div>
<div style="left:94px;top:719.53px;font-size:16.5px;line-height:16.5px;color:#5aa8ee;white-space:nowrap;-webkit-text-stroke:0.2px #5aa8ee;">+0</div>
<svg style="left:151px;top:716.5px;" width="26" height="20" viewBox="0 0 26 20"><rect x="1.35" y="0.70" width="1.7" height="18.6" fill="#c8c8c8"/><rect x="4.25" y="3.25" width="1.7" height="13.5" fill="#c8c8c8"/><rect x="7.05" y="5.50" width="1.7" height="9" fill="#c8c8c8"/><rect x="10.05" y="6.80" width="1.7" height="6.4" fill="#c8c8c8"/><rect x="14.25" y="6.80" width="1.7" height="6.4" fill="#c8c8c8"/><rect x="16.95" y="5.50" width="1.7" height="9" fill="#c8c8c8"/><rect x="19.75" y="3.25" width="1.7" height="13.5" fill="#c8c8c8"/><rect x="22.75" y="0.70" width="1.7" height="18.6" fill="#c8c8c8"/></svg>
<svg style="left:181px;top:715px;" width="26" height="26" viewBox="0 0 26 26"><circle cx="13" cy="13" r="11.1" fill="none" stroke="#a9a9a9" stroke-width="3"/><rect x="11.4" y="3" width="3.2" height="9.2" fill="#a9a9a9"/></svg>
<div style="left:211px;top:720px;width:13px;height:17px;background:#19232e;border-radius:3px;filter:blur(2px);"></div>
<div style="left:213px;top:719.53px;font-size:16.5px;line-height:16.5px;color:#5aa8ee;white-space:nowrap;-webkit-text-stroke:0.2px #5aa8ee;">0</div>
<svg style="left:262px;top:720px;" width="24" height="18" viewBox="0 0 24 18"><circle cx="12" cy="9" r="2" fill="#d0d0d0"/><path d="M7.5 4.5 A6 6 0 0 0 7.5 13.5 M16.5 4.5 A6 6 0 0 1 16.5 13.5" stroke="#c8c8c8" stroke-width="1.4" fill="none"/><path d="M4 2 A9.5 9.5 0 0 0 4 16 M20 2 A9.5 9.5 0 0 1 20 16" stroke="#c8c8c8" stroke-width="1.4" fill="none"/></svg>
<div style="left:292px;top:721.5px;width:24px;height:68px;background:#202020;box-sizing:border-box;border:1.6px solid #060606;"></div>
<div style="left:292px;top:734.8px;width:24px;height:1.6px;background:#060606;"></div>
<div style="left:303.2px;top:721.5px;width:1.6px;height:14px;background:#060606;"></div>
<div style="left:294px;top:785.2px;width:9.5px;height:2.2px;background:#d6d65a;"></div>
<div style="left:305px;top:785.2px;width:9.5px;height:2.2px;background:#d6d65a;"></div>
<svg style="left:33px;top:750px;" width="22" height="15" viewBox="0 0 22 15"><path d="M1 7.5 H14" stroke="#d4d4d4" stroke-width="2.6"/><path d="M12 1.5 L20 7.5 L12 13.5 Z" fill="#d4d4d4"/></svg>
<div style="left:57px;top:746.5px;width:198.5px;height:27px;background:#1c1c1c;box-sizing:border-box;border:2px solid #2c2c2c;border-radius:3px;"></div>
<div style="left:68.5px;top:751.68px;font-size:15.5px;line-height:15.5px;color:#c4c4c4;white-space:nowrap;-webkit-text-stroke:0.25px #c4c4c4;">Default Stereo Input</div>
<svg style="left:236px;top:752.3px;" width="12" height="14" viewBox="0 0 12 14"><path d="M3.3 2.5 L8.3 7.3 L3.3 12" stroke="#c0c0c0" stroke-width="1.7" fill="none"/></svg>
<div style="left:259px;top:746px;width:27.5px;height:27.5px;background:#1c1c1c;box-sizing:border-box;border:2px solid #2c2c2c;border-radius:4px;"></div>
<svg style="left:259px;top:746.5px;" width="28" height="27" viewBox="0 0 28 27"><circle cx="14.6" cy="13.1" r="5.9" fill="none" stroke="#c8c8c8" stroke-width="1.7"/><path d="M6.8 20.7 L22.2 5.8" stroke="#c8c8c8" stroke-width="1.7"/></svg>
<div style="left:9px;top:152px;width:1015px;height:2px;background:#2c2c2c;"></div>
<div style="left:3px;top:690px;width:1021px;height:2px;background:#313131;"></div>
<div style="left:3px;top:692px;width:1021px;height:14px;background:#242424;"></div>
<svg style="left:0;top:0" width="1024" height="706" viewBox="0 0 1024 706"><rect x="473" y="153" width="210" height="125" fill="#1d302a"/><path d="M475 198 H683 M475 251.5 H683" stroke="#5f9c84" stroke-width="1"/><path d="M475.0 197.5 L475.5 197.5 L476.0 197.5 L476.5 197.5 L477.0 197.5 L477.5 197.5 L478.0 197.5 L478.5 197.5 L479.0 197.5 L479.5 197.5 L480.0 197.5 L480.5 197.5 L481.0 197.5 L481.5 197.5 L482.0 197.5 L482.5 197.5 L483.0 197.5 L483.5 197.5 L484.0 197.5 L484.5 193.7 L485.0 187.9 L485.5 185.1 L486.0 187.6 L486.5 190.1 L487.0 192.9 L487.5 191.8 L488.0 188.4 L488.5 185.2 L489.0 182.3 L489.5 179.6 L490.0 182.4 L490.5 185.4 L491.0 188.5 L491.5 191.9 L492.0 193.2 L492.5 193.3 L493.0 193.8 L493.5 192.1 L494.0 190.4 L494.5 190.1 L495.0 191.8 L495.5 193.6 L496.0 193.2 L496.5 194.3 L497.0 192.4 L497.5 189.9 L498.0 187.5 L498.5 185.3 L499.0 183.2 L499.5 184.0 L500.0 186.2 L500.5 188.4 L501.0 190.8 L501.5 187.3 L502.0 184.9 L502.5 188.2 L503.0 191.9 L503.5 195.6 L504.0 194.6 L504.5 193.9 L505.0 191.6 L505.5 186.2 L506.0 185.3 L506.5 190.6 L507.0 192.6 L507.5 190.8 L508.0 189.1 L508.5 187.6 L509.0 187.0 L509.5 188.6 L510.0 190.2 L510.5 191.9 L511.0 192.8 L511.5 193.4 L512.0 191.7 L512.5 190.1 L513.0 188.6 L513.5 188.6 L514.0 190.1 L514.5 191.7 L515.0 193.1 L515.5 188.1 L516.0 183.7 L516.5 186.3 L517.0 191.0 L517.5 190.9 L518.0 185.8 L518.5 181.2 L519.0 183.9 L519.5 188.7 L520.0 188.2 L520.5 185.3 L521.0 182.5 L521.5 179.9 L522.0 181.0 L522.5 183.7 L523.0 186.5 L523.5 189.0 L524.0 185.3 L524.5 181.8 L525.0 180.3 L525.5 183.7 L526.0 187.3 L526.5 191.2 L527.0 192.9 L527.5 192.0 L528.0 190.4 L528.5 189.0 L529.0 187.5 L529.5 188.6 L530.0 190.1 L530.5 191.6 L531.0 192.1 L531.5 189.0 L532.0 186.1 L532.5 183.4 L533.0 180.8 L533.5 180.4 L534.0 183.0 L534.5 185.7 L535.0 188.6 L535.5 191.7 L536.0 189.2 L536.5 185.8 L537.0 188.8 L537.5 194.3 L538.0 197.0 L538.5 197.5 L539.0 197.5 L539.5 197.5 L540.0 197.5 L540.5 197.5 L541.0 197.5 L541.5 197.5 L542.0 197.5 L542.5 197.5 L543.0 197.5 L543.5 195.7 L544.0 192.0 L544.5 191.1 L545.0 193.3 L545.5 195.2 L546.0 195.6 L546.5 194.0 L547.0 192.5 L547.5 191.1 L548.0 189.8 L548.5 191.1 L549.0 192.4 L549.5 192.9 L550.0 191.0 L550.5 189.1 L551.0 187.4 L551.5 186.7 L552.0 188.4 L552.5 190.2 L553.0 192.1 L553.5 193.7 L554.0 191.0 L554.5 188.6 L555.0 186.4 L555.5 188.1 L556.0 190.5 L556.5 193.1 L557.0 193.3 L557.5 193.5 L558.0 192.2 L558.5 191.0 L559.0 189.8 L559.5 189.5 L560.0 190.7 L560.5 188.2 L561.0 185.6 L561.5 183.2 L562.0 182.1 L562.5 184.4 L563.0 186.9 L563.5 187.9 L564.0 184.1 L564.5 181.7 L565.0 185.3 L565.5 189.2 L566.0 193.7 L566.5 195.7 L567.0 193.0 L567.5 194.4 L568.0 191.6 L568.5 190.4 L569.0 193.2 L569.5 195.3 L570.0 193.4 L570.5 187.6 L571.0 182.5 L571.5 181.2 L572.0 186.1 L572.5 191.7 L573.0 192.8 L573.5 191.3 L574.0 188.4 L574.5 185.7 L575.0 183.1 L575.5 180.7 L576.0 181.1 L576.5 183.6 L577.0 186.2 L577.5 188.9 L578.0 190.6 L578.5 188.3 L579.0 186.0 L579.5 187.6 L580.0 190.0 L580.5 192.5 L581.0 192.7 L581.5 194.7 L582.0 193.1 L582.5 191.5 L583.0 190.0 L583.5 188.5 L584.0 189.9 L584.5 191.4 L585.0 193.0 L585.5 192.8 L586.0 194.2 L586.5 194.1 L587.0 192.9 L587.5 186.2 L588.0 180.4 L588.5 186.2 L589.0 192.9 L589.5 194.0 L590.0 193.8 L590.5 192.9 L591.0 194.4 L591.5 194.7 L592.0 192.3 L592.5 190.2 L593.0 189.2 L593.5 191.3 L594.0 193.6 L594.5 194.0 L595.0 195.5 L595.5 191.8 L596.0 187.1 L596.5 182.9 L597.0 180.7 L597.5 184.7 L598.0 189.1 L598.5 194.0 L599.0 193.2 L599.5 192.8 L600.0 193.6 L600.5 191.9 L601.0 188.3 L601.5 184.9 L602.0 185.6 L602.5 188.9 L603.0 192.7 L603.5 195.6 L604.0 194.4 L604.5 190.8 L605.0 187.7 L605.5 190.9 L606.0 190.1 L606.5 187.8 L607.0 185.7 L607.5 183.6 L608.0 182.7 L608.5 184.7 L609.0 186.8 L609.5 189.1 L610.0 191.0 L610.5 189.8 L611.0 189.7 L611.5 190.9 L612.0 194.0 L612.5 196.2 L613.0 197.5 L613.5 197.5 L614.0 197.5 L614.5 197.5 L615.0 197.5 L615.5 197.5 L616.0 197.5 L616.5 197.5 L617.0 197.5 L617.5 197.5 L618.0 197.5 L618.5 197.5 L619.0 197.5 L619.5 197.5 L620.0 197.5 L620.5 197.5 L621.0 197.5 L621.5 197.5 L622.0 197.5 L622.5 197.5 L623.0 197.5 L623.5 197.5 L624.0 197.5 L624.5 197.5 L625.0 197.5 L625.5 197.5 L626.0 197.5 L626.5 197.5 L627.0 197.5 L627.5 197.5 L628.0 197.5 L628.5 197.5 L629.0 197.5 L629.5 197.5 L630.0 197.5 L630.5 197.5 L631.0 197.5 L631.5 197.5 L632.0 197.5 L632.5 197.5 L633.0 197.5 L633.5 197.5 L634.0 194.8 L634.5 189.4 L635.0 188.3 L635.5 191.8 L636.0 194.6 L636.5 195.0 L637.0 191.5 L637.5 187.6 L638.0 184.0 L638.5 180.8 L639.0 184.2 L639.5 187.8 L640.0 191.7 L640.5 193.0 L641.0 191.7 L641.5 190.4 L642.0 189.2 L642.5 190.2 L643.0 190.9 L643.5 188.7 L644.0 186.6 L644.5 184.7 L645.0 185.7 L645.5 191.1 L646.0 195.3 L646.5 197.5 L647.0 197.5 L647.5 197.5 L648.0 197.5 L648.5 197.5 L649.0 197.5 L649.5 197.5 L650.0 197.5 L650.5 197.5 L651.0 197.5 L651.5 197.5 L652.0 197.5 L652.5 197.5 L653.0 197.5 L653.5 197.5 L654.0 197.5 L654.5 197.5 L655.0 193.8 L655.5 188.3 L656.0 185.3 L656.5 187.3 L657.0 189.4 L657.5 191.6 L658.0 193.9 L658.5 193.2 L659.0 188.1 L659.5 183.6 L660.0 186.6 L660.5 191.5 L661.0 193.7 L661.5 193.5 L662.0 192.1 L662.5 190.8 L663.0 189.5 L663.5 189.9 L664.0 191.2 L664.5 192.2 L665.0 190.5 L665.5 188.8 L666.0 187.2 L666.5 186.3 L667.0 187.9 L667.5 189.5 L668.0 191.1 L668.5 192.9 L669.0 194.9 L669.5 192.0 L670.0 188.2 L670.5 184.7 L671.0 181.4 L671.5 184.3 L672.0 187.8 L672.5 191.6 L673.0 195.6 L673.5 194.3 L674.0 195.4 L674.5 195.5 L675.0 196.7 L675.5 197.5 L676.0 197.5 L676.5 197.5 L677.0 197.5 L677.5 188.2 L678.0 181.3 L678.5 182.3 L679.0 181.9 L679.5 182.4 L680.0 181.7 L680.5 181.4 L681.0 181.5 L681.5 181.6 L682.0 182.5 L682.5 182.1 L683.0 181.4 L683.5 181.8 L683.5 213.5 L683.0 213.1 L682.5 213.4 L682.0 212.1 L681.5 215.1 L681.0 215.1 L680.5 214.9 L680.0 213.0 L679.5 212.2 L679.0 212.7 L678.5 213.8 L678.0 214.7 L677.5 208.2 L677.0 198.5 L676.5 198.5 L676.0 198.5 L675.5 198.5 L675.0 199.2 L674.5 200.5 L674.0 200.5 L673.5 201.4 L673.0 200.3 L672.5 203.8 L672.0 208.7 L671.5 210.9 L671.0 215.2 L670.5 210.8 L670.0 207.9 L669.5 204.1 L669.0 200.8 L668.5 203.2 L668.0 204.4 L667.5 206.5 L667.0 207.6 L666.5 210.0 L666.0 208.8 L665.5 207.2 L665.0 205.2 L664.5 204.0 L664.0 204.8 L663.5 205.7 L663.0 206.2 L662.5 205.6 L662.0 204.1 L661.5 202.2 L661.0 202.4 L660.5 204.5 L660.0 209.8 L659.5 212.6 L659.0 208.0 L658.5 203.0 L658.0 202.1 L657.5 204.3 L657.0 205.8 L656.5 208.1 L656.0 210.7 L655.5 207.3 L655.0 202.1 L654.5 198.5 L654.0 198.5 L653.5 198.5 L653.0 198.5 L652.5 198.5 L652.0 198.5 L651.5 198.5 L651.0 198.5 L650.5 198.5 L650.0 198.5 L649.5 198.5 L649.0 198.5 L648.5 198.5 L648.0 198.5 L647.5 198.5 L647.0 198.5 L646.5 198.5 L646.0 200.7 L645.5 205.0 L645.0 209.8 L644.5 211.0 L644.0 208.8 L643.5 206.8 L643.0 204.6 L642.5 205.6 L642.0 206.4 L641.5 205.5 L641.0 204.4 L640.5 203.1 L640.0 204.5 L639.5 207.3 L639.0 210.5 L638.5 215.6 L638.0 211.5 L637.5 208.7 L637.0 204.8 L636.5 200.9 L636.0 201.4 L635.5 204.1 L635.0 207.1 L634.5 206.2 L634.0 201.1 L633.5 198.5 L633.0 198.5 L632.5 198.5 L632.0 198.5 L631.5 198.5 L631.0 198.5 L630.5 198.5 L630.0 198.5 L629.5 198.5 L629.0 198.5 L628.5 198.5 L628.0 198.5 L627.5 198.5 L627.0 198.5 L626.5 198.5 L626.0 198.5 L625.5 198.5 L625.0 198.5 L624.5 198.5 L624.0 198.5 L623.5 198.5 L623.0 198.5 L622.5 198.5 L622.0 198.5 L621.5 198.5 L621.0 198.5 L620.5 198.5 L620.0 198.5 L619.5 198.5 L619.0 198.5 L618.5 198.5 L618.0 198.5 L617.5 198.5 L617.0 198.5 L616.5 198.5 L616.0 198.5 L615.5 198.5 L615.0 198.5 L614.5 198.5 L614.0 198.5 L613.5 198.5 L613.0 198.5 L612.5 199.6 L612.0 201.6 L611.5 205.3 L611.0 206.2 L610.5 206.0 L610.0 205.1 L609.5 206.6 L609.0 209.6 L608.5 210.2 L608.0 213.9 L607.5 212.5 L607.0 210.1 L606.5 208.2 L606.0 205.8 L605.5 204.7 L605.0 207.9 L604.5 205.1 L604.0 201.7 L603.5 200.2 L603.0 202.8 L602.5 207.2 L602.0 209.7 L601.5 210.3 L601.0 206.9 L600.5 203.8 L600.0 202.1 L599.5 203.2 L599.0 202.8 L598.5 201.9 L598.0 207.0 L597.5 211.8 L597.0 215.6 L596.5 212.5 L596.0 208.4 L595.5 203.8 L595.0 200.5 L594.5 201.8 L594.0 202.3 L593.5 204.3 L593.0 206.1 L592.5 206.0 L592.0 203.2 L591.5 201.0 L591.0 201.7 L590.5 202.8 L590.0 202.2 L589.5 201.8 L589.0 203.0 L588.5 208.7 L588.0 216.1 L587.5 210.3 L587.0 202.7 L586.5 201.6 L586.0 201.7 L585.5 202.9 L585.0 202.5 L584.5 204.2 L584.0 205.6 L583.5 207.1 L583.0 205.5 L582.5 204.8 L582.0 203.1 L581.5 201.1 L581.0 203.2 L580.5 203.4 L580.0 205.7 L579.5 207.4 L579.0 210.6 L578.5 207.7 L578.0 205.4 L577.5 206.4 L577.0 210.0 L576.5 212.0 L576.0 214.1 L575.5 214.6 L575.0 211.9 L574.5 209.4 L574.0 207.7 L573.5 204.3 L573.0 202.7 L572.5 204.1 L572.0 209.9 L571.5 214.1 L571.0 212.1 L570.5 207.8 L570.0 202.2 L569.5 200.6 L569.0 203.0 L568.5 205.3 L568.0 203.9 L567.5 201.5 L567.0 202.9 L566.5 200.2 L566.0 202.4 L565.5 207.0 L565.0 209.8 L564.5 212.9 L564.0 212.0 L563.5 208.0 L563.0 209.4 L562.5 211.8 L562.0 214.3 L561.5 212.1 L561.0 210.3 L560.5 207.2 L560.0 205.3 L559.5 206.7 L559.0 206.5 L558.5 204.5 L558.0 204.0 L557.5 202.1 L557.0 202.3 L556.5 202.7 L556.0 205.7 L555.5 207.8 L555.0 208.6 L554.5 206.5 L554.0 205.0 L553.5 202.3 L553.0 203.5 L552.5 205.6 L552.0 207.0 L551.5 208.6 L551.0 208.4 L550.5 206.7 L550.0 204.5 L549.5 202.6 L549.0 203.8 L548.5 204.9 L548.0 205.9 L547.5 205.1 L547.0 203.4 L546.5 201.7 L546.0 200.2 L545.5 200.8 L545.0 202.5 L544.5 204.4 L544.0 203.7 L543.5 200.3 L543.0 198.5 L542.5 198.5 L542.0 198.5 L541.5 198.5 L541.0 198.5 L540.5 198.5 L540.0 198.5 L539.5 198.5 L539.0 198.5 L538.5 198.5 L538.0 199.0 L537.5 201.8 L537.0 207.3 L536.5 210.7 L536.0 205.9 L535.5 204.4 L535.0 206.8 L534.5 210.6 L534.0 211.8 L533.5 215.1 L533.0 214.7 L532.5 213.2 L532.0 209.2 L531.5 207.1 L531.0 203.3 L530.5 204.1 L530.0 206.2 L529.5 207.0 L529.0 208.2 L528.5 207.1 L528.0 205.3 L527.5 203.5 L527.0 203.2 L526.5 204.5 L526.0 207.7 L525.5 212.5 L525.0 215.2 L524.5 213.3 L524.0 210.5 L523.5 207.1 L523.0 209.6 L522.5 212.2 L522.0 214.8 L521.5 217.0 L521.0 212.5 L520.5 210.9 L520.0 207.2 L519.5 206.4 L519.0 212.4 L518.5 214.3 L518.0 209.2 L517.5 204.7 L517.0 205.3 L516.5 209.2 L516.0 213.0 L515.5 207.8 L515.0 203.1 L514.5 204.6 L514.0 205.3 L513.5 207.0 L513.0 207.3 L512.5 205.8 L512.0 203.8 L511.5 202.7 L511.0 203.2 L510.5 204.3 L510.0 205.7 L509.5 207.0 L509.0 209.2 L508.5 208.7 L508.0 206.7 L507.5 205.1 L507.0 203.4 L506.5 205.1 L506.0 209.6 L505.5 209.1 L505.0 203.7 L504.5 201.8 L504.0 201.4 L503.5 200.3 L503.0 203.7 L502.5 207.3 L502.0 209.9 L501.5 208.4 L501.0 205.1 L500.5 206.9 L500.0 209.4 L499.5 210.7 L499.0 212.7 L498.5 210.6 L498.0 208.5 L497.5 206.3 L497.0 203.7 L496.5 201.7 L496.0 203.0 L495.5 202.1 L495.0 204.1 L494.5 206.3 L494.0 205.8 L493.5 203.6 L493.0 202.3 L492.5 202.5 L492.0 202.7 L491.5 203.9 L491.0 206.9 L490.5 209.4 L490.0 213.5 L489.5 215.3 L489.0 213.9 L488.5 210.0 L488.0 207.2 L487.5 204.2 L487.0 203.2 L486.5 205.5 L486.0 208.6 L485.5 209.8 L485.0 207.9 L484.5 202.5 L484.0 198.5 L483.5 198.5 L483.0 198.5 L482.5 198.5 L482.0 198.5 L481.5 198.5 L481.0 198.5 L480.5 198.5 L480.0 198.5 L479.5 198.5 L479.0 198.5 L478.5 198.5 L478.0 198.5 L477.5 198.5 L477.0 198.5 L476.5 198.5 L476.0 198.5 L475.5 198.5 L475.0 198.5 Z" fill="#3dbd8d"/><path d="M475.0 251.0 L475.5 251.0 L476.0 251.0 L476.5 251.0 L477.0 251.0 L477.5 251.0 L478.0 251.0 L478.5 251.0 L479.0 251.0 L479.5 251.0 L480.0 251.0 L480.5 251.0 L481.0 251.0 L481.5 251.0 L482.0 251.0 L482.5 251.0 L483.0 251.0 L483.5 251.0 L484.0 251.0 L484.5 247.2 L485.0 241.4 L485.5 238.6 L486.0 241.1 L486.5 243.6 L487.0 246.4 L487.5 245.3 L488.0 241.9 L488.5 238.7 L489.0 235.8 L489.5 233.1 L490.0 235.9 L490.5 238.9 L491.0 242.0 L491.5 245.4 L492.0 246.7 L492.5 246.8 L493.0 247.3 L493.5 245.6 L494.0 243.9 L494.5 243.6 L495.0 245.3 L495.5 247.1 L496.0 246.7 L496.5 247.8 L497.0 245.9 L497.5 243.4 L498.0 241.0 L498.5 238.8 L499.0 236.7 L499.5 237.5 L500.0 239.7 L500.5 241.9 L501.0 244.3 L501.5 240.8 L502.0 238.4 L502.5 241.7 L503.0 245.4 L503.5 249.1 L504.0 248.1 L504.5 247.4 L505.0 245.1 L505.5 239.7 L506.0 238.8 L506.5 244.1 L507.0 246.1 L507.5 244.3 L508.0 242.6 L508.5 241.1 L509.0 240.5 L509.5 242.1 L510.0 243.7 L510.5 245.4 L511.0 246.3 L511.5 246.9 L512.0 245.2 L512.5 243.6 L513.0 242.1 L513.5 242.1 L514.0 243.6 L514.5 245.2 L515.0 246.6 L515.5 241.6 L516.0 237.2 L516.5 239.8 L517.0 244.5 L517.5 244.4 L518.0 239.3 L518.5 234.7 L519.0 237.4 L519.5 242.2 L520.0 241.7 L520.5 238.8 L521.0 236.0 L521.5 233.4 L522.0 234.5 L522.5 237.2 L523.0 240.0 L523.5 242.5 L524.0 238.8 L524.5 235.3 L525.0 233.8 L525.5 237.2 L526.0 240.8 L526.5 244.7 L527.0 246.4 L527.5 245.5 L528.0 243.9 L528.5 242.5 L529.0 241.0 L529.5 242.1 L530.0 243.6 L530.5 245.1 L531.0 245.6 L531.5 242.5 L532.0 239.6 L532.5 236.9 L533.0 234.3 L533.5 233.9 L534.0 236.5 L534.5 239.2 L535.0 242.1 L535.5 245.2 L536.0 242.7 L536.5 239.3 L537.0 242.3 L537.5 247.8 L538.0 250.5 L538.5 251.0 L539.0 251.0 L539.5 251.0 L540.0 251.0 L540.5 251.0 L541.0 251.0 L541.5 251.0 L542.0 251.0 L542.5 251.0 L543.0 251.0 L543.5 249.2 L544.0 245.5 L544.5 244.6 L545.0 246.8 L545.5 248.7 L546.0 249.1 L546.5 247.5 L547.0 246.0 L547.5 244.6 L548.0 243.3 L548.5 244.6 L549.0 245.9 L549.5 246.4 L550.0 244.5 L550.5 242.6 L551.0 240.9 L551.5 240.2 L552.0 241.9 L552.5 243.7 L553.0 245.6 L553.5 247.2 L554.0 244.5 L554.5 242.1 L555.0 239.9 L555.5 241.6 L556.0 244.0 L556.5 246.6 L557.0 246.8 L557.5 247.0 L558.0 245.7 L558.5 244.5 L559.0 243.3 L559.5 243.0 L560.0 244.2 L560.5 241.7 L561.0 239.1 L561.5 236.7 L562.0 235.6 L562.5 237.9 L563.0 240.4 L563.5 241.4 L564.0 237.6 L564.5 235.2 L565.0 238.8 L565.5 242.7 L566.0 247.2 L566.5 249.2 L567.0 246.5 L567.5 247.9 L568.0 245.1 L568.5 243.9 L569.0 246.7 L569.5 248.8 L570.0 246.9 L570.5 241.1 L571.0 236.0 L571.5 234.7 L572.0 239.6 L572.5 245.2 L573.0 246.3 L573.5 244.8 L574.0 241.9 L574.5 239.2 L575.0 236.6 L575.5 234.2 L576.0 234.6 L576.5 237.1 L577.0 239.7 L577.5 242.4 L578.0 244.1 L578.5 241.8 L579.0 239.5 L579.5 241.1 L580.0 243.5 L580.5 246.0 L581.0 246.2 L581.5 248.2 L582.0 246.6 L582.5 245.0 L583.0 243.5 L583.5 242.0 L584.0 243.4 L584.5 244.9 L585.0 246.5 L585.5 246.3 L586.0 247.7 L586.5 247.6 L587.0 246.4 L587.5 239.7 L588.0 233.9 L588.5 239.7 L589.0 246.4 L589.5 247.5 L590.0 247.3 L590.5 246.4 L591.0 247.9 L591.5 248.2 L592.0 245.8 L592.5 243.7 L593.0 242.7 L593.5 244.8 L594.0 247.1 L594.5 247.5 L595.0 249.0 L595.5 245.3 L596.0 240.6 L596.5 236.4 L597.0 234.2 L597.5 238.2 L598.0 242.6 L598.5 247.5 L599.0 246.7 L599.5 246.3 L600.0 247.1 L600.5 245.4 L601.0 241.8 L601.5 238.4 L602.0 239.1 L602.5 242.4 L603.0 246.2 L603.5 249.1 L604.0 247.9 L604.5 244.3 L605.0 241.2 L605.5 244.4 L606.0 243.6 L606.5 241.3 L607.0 239.2 L607.5 237.1 L608.0 236.2 L608.5 238.2 L609.0 240.3 L609.5 242.6 L610.0 244.5 L610.5 243.3 L611.0 243.2 L611.5 244.4 L612.0 247.5 L612.5 249.7 L613.0 251.0 L613.5 251.0 L614.0 251.0 L614.5 251.0 L615.0 251.0 L615.5 251.0 L616.0 251.0 L616.5 251.0 L617.0 251.0 L617.5 251.0 L618.0 251.0 L618.5 251.0 L619.0 251.0 L619.5 251.0 L620.0 251.0 L620.5 251.0 L621.0 251.0 L621.5 251.0 L622.0 251.0 L622.5 251.0 L623.0 251.0 L623.5 251.0 L624.0 251.0 L624.5 251.0 L625.0 251.0 L625.5 251.0 L626.0 251.0 L626.5 251.0 L627.0 251.0 L627.5 251.0 L628.0 251.0 L628.5 251.0 L629.0 251.0 L629.5 251.0 L630.0 251.0 L630.5 251.0 L631.0 251.0 L631.5 251.0 L632.0 251.0 L632.5 251.0 L633.0 251.0 L633.5 251.0 L634.0 248.3 L634.5 242.9 L635.0 241.8 L635.5 245.3 L636.0 248.1 L636.5 248.5 L637.0 245.0 L637.5 241.1 L638.0 237.5 L638.5 234.3 L639.0 237.7 L639.5 241.3 L640.0 245.2 L640.5 246.5 L641.0 245.2 L641.5 243.9 L642.0 242.7 L642.5 243.7 L643.0 244.4 L643.5 242.2 L644.0 240.1 L644.5 238.2 L645.0 239.2 L645.5 244.6 L646.0 248.8 L646.5 251.0 L647.0 251.0 L647.5 251.0 L648.0 251.0 L648.5 251.0 L649.0 251.0 L649.5 251.0 L650.0 251.0 L650.5 251.0 L651.0 251.0 L651.5 251.0 L652.0 251.0 L652.5 251.0 L653.0 251.0 L653.5 251.0 L654.0 251.0 L654.5 251.0 L655.0 247.3 L655.5 241.8 L656.0 238.8 L656.5 240.8 L657.0 242.9 L657.5 245.1 L658.0 247.4 L658.5 246.7 L659.0 241.6 L659.5 237.1 L660.0 240.1 L660.5 245.0 L661.0 247.2 L661.5 247.0 L662.0 245.6 L662.5 244.3 L663.0 243.0 L663.5 243.4 L664.0 244.7 L664.5 245.7 L665.0 244.0 L665.5 242.3 L666.0 240.7 L666.5 239.8 L667.0 241.4 L667.5 243.0 L668.0 244.6 L668.5 246.4 L669.0 248.4 L669.5 245.5 L670.0 241.7 L670.5 238.2 L671.0 234.9 L671.5 237.8 L672.0 241.3 L672.5 245.1 L673.0 249.1 L673.5 247.8 L674.0 248.9 L674.5 249.0 L675.0 250.2 L675.5 251.0 L676.0 251.0 L676.5 251.0 L677.0 251.0 L677.5 241.7 L678.0 234.8 L678.5 235.8 L679.0 235.4 L679.5 235.9 L680.0 235.2 L680.5 234.9 L681.0 235.0 L681.5 235.1 L682.0 236.0 L682.5 235.6 L683.0 234.9 L683.5 235.3 L683.5 267.0 L683.0 266.6 L682.5 266.9 L682.0 265.6 L681.5 268.6 L681.0 268.6 L680.5 268.4 L680.0 266.5 L679.5 265.7 L679.0 266.2 L678.5 267.3 L678.0 268.2 L677.5 261.7 L677.0 252.0 L676.5 252.0 L676.0 252.0 L675.5 252.0 L675.0 252.7 L674.5 254.0 L674.0 254.0 L673.5 254.9 L673.0 253.8 L672.5 257.3 L672.0 262.2 L671.5 264.4 L671.0 268.7 L670.5 264.3 L670.0 261.4 L669.5 257.6 L669.0 254.3 L668.5 256.7 L668.0 257.9 L667.5 260.0 L667.0 261.1 L666.5 263.5 L666.0 262.3 L665.5 260.7 L665.0 258.7 L664.5 257.5 L664.0 258.3 L663.5 259.2 L663.0 259.7 L662.5 259.1 L662.0 257.6 L661.5 255.7 L661.0 255.9 L660.5 258.0 L660.0 263.3 L659.5 266.1 L659.0 261.5 L658.5 256.5 L658.0 255.6 L657.5 257.8 L657.0 259.3 L656.5 261.6 L656.0 264.2 L655.5 260.8 L655.0 255.6 L654.5 252.0 L654.0 252.0 L653.5 252.0 L653.0 252.0 L652.5 252.0 L652.0 252.0 L651.5 252.0 L651.0 252.0 L650.5 252.0 L650.0 252.0 L649.5 252.0 L649.0 252.0 L648.5 252.0 L648.0 252.0 L647.5 252.0 L647.0 252.0 L646.5 252.0 L646.0 254.2 L645.5 258.5 L645.0 263.3 L644.5 264.5 L644.0 262.3 L643.5 260.3 L643.0 258.1 L642.5 259.1 L642.0 259.9 L641.5 259.0 L641.0 257.9 L640.5 256.6 L640.0 258.0 L639.5 260.8 L639.0 264.0 L638.5 269.1 L638.0 265.0 L637.5 262.2 L637.0 258.3 L636.5 254.4 L636.0 254.9 L635.5 257.6 L635.0 260.6 L634.5 259.7 L634.0 254.6 L633.5 252.0 L633.0 252.0 L632.5 252.0 L632.0 252.0 L631.5 252.0 L631.0 252.0 L630.5 252.0 L630.0 252.0 L629.5 252.0 L629.0 252.0 L628.5 252.0 L628.0 252.0 L627.5 252.0 L627.0 252.0 L626.5 252.0 L626.0 252.0 L625.5 252.0 L625.0 252.0 L624.5 252.0 L624.0 252.0 L623.5 252.0 L623.0 252.0 L622.5 252.0 L622.0 252.0 L621.5 252.0 L621.0 252.0 L620.5 252.0 L620.0 252.0 L619.5 252.0 L619.0 252.0 L618.5 252.0 L618.0 252.0 L617.5 252.0 L617.0 252.0 L616.5 252.0 L616.0 252.0 L615.5 252.0 L615.0 252.0 L614.5 252.0 L614.0 252.0 L613.5 252.0 L613.0 252.0 L612.5 253.1 L612.0 255.1 L611.5 258.8 L611.0 259.7 L610.5 259.5 L610.0 258.6 L609.5 260.1 L609.0 263.1 L608.5 263.7 L608.0 267.4 L607.5 266.0 L607.0 263.6 L606.5 261.7 L606.0 259.3 L605.5 258.2 L605.0 261.4 L604.5 258.6 L604.0 255.2 L603.5 253.7 L603.0 256.3 L602.5 260.7 L602.0 263.2 L601.5 263.8 L601.0 260.4 L600.5 257.3 L600.0 255.6 L599.5 256.7 L599.0 256.3 L598.5 255.4 L598.0 260.5 L597.5 265.3 L597.0 269.1 L596.5 266.0 L596.0 261.9 L595.5 257.3 L595.0 254.0 L594.5 255.3 L594.0 255.8 L593.5 257.8 L593.0 259.6 L592.5 259.5 L592.0 256.7 L591.5 254.5 L591.0 255.2 L590.5 256.3 L590.0 255.7 L589.5 255.3 L589.0 256.5 L588.5 262.2 L588.0 269.6 L587.5 263.8 L587.0 256.2 L586.5 255.1 L586.0 255.2 L585.5 256.4 L585.0 256.0 L584.5 257.7 L584.0 259.1 L583.5 260.6 L583.0 259.0 L582.5 258.3 L582.0 256.6 L581.5 254.6 L581.0 256.7 L580.5 256.9 L580.0 259.2 L579.5 260.9 L579.0 264.1 L578.5 261.2 L578.0 258.9 L577.5 259.9 L577.0 263.5 L576.5 265.5 L576.0 267.6 L575.5 268.1 L575.0 265.4 L574.5 262.9 L574.0 261.2 L573.5 257.8 L573.0 256.2 L572.5 257.6 L572.0 263.4 L571.5 267.6 L571.0 265.6 L570.5 261.3 L570.0 255.7 L569.5 254.1 L569.0 256.5 L568.5 258.8 L568.0 257.4 L567.5 255.0 L567.0 256.4 L566.5 253.7 L566.0 255.9 L565.5 260.5 L565.0 263.3 L564.5 266.4 L564.0 265.5 L563.5 261.5 L563.0 262.9 L562.5 265.3 L562.0 267.8 L561.5 265.6 L561.0 263.8 L560.5 260.7 L560.0 258.8 L559.5 260.2 L559.0 260.0 L558.5 258.0 L558.0 257.5 L557.5 255.6 L557.0 255.8 L556.5 256.2 L556.0 259.2 L555.5 261.3 L555.0 262.1 L554.5 260.0 L554.0 258.5 L553.5 255.8 L553.0 257.0 L552.5 259.1 L552.0 260.5 L551.5 262.1 L551.0 261.9 L550.5 260.2 L550.0 258.0 L549.5 256.1 L549.0 257.3 L548.5 258.4 L548.0 259.4 L547.5 258.6 L547.0 256.9 L546.5 255.2 L546.0 253.7 L545.5 254.3 L545.0 256.0 L544.5 257.9 L544.0 257.2 L543.5 253.8 L543.0 252.0 L542.5 252.0 L542.0 252.0 L541.5 252.0 L541.0 252.0 L540.5 252.0 L540.0 252.0 L539.5 252.0 L539.0 252.0 L538.5 252.0 L538.0 252.5 L537.5 255.3 L537.0 260.8 L536.5 264.2 L536.0 259.4 L535.5 257.9 L535.0 260.3 L534.5 264.1 L534.0 265.3 L533.5 268.6 L533.0 268.2 L532.5 266.7 L532.0 262.7 L531.5 260.6 L531.0 256.8 L530.5 257.6 L530.0 259.7 L529.5 260.5 L529.0 261.7 L528.5 260.6 L528.0 258.8 L527.5 257.0 L527.0 256.7 L526.5 258.0 L526.0 261.2 L525.5 266.0 L525.0 268.7 L524.5 266.8 L524.0 264.0 L523.5 260.6 L523.0 263.1 L522.5 265.7 L522.0 268.3 L521.5 270.5 L521.0 266.0 L520.5 264.4 L520.0 260.7 L519.5 259.9 L519.0 265.9 L518.5 267.8 L518.0 262.7 L517.5 258.2 L517.0 258.8 L516.5 262.7 L516.0 266.5 L515.5 261.3 L515.0 256.6 L514.5 258.1 L514.0 258.8 L513.5 260.5 L513.0 260.8 L512.5 259.3 L512.0 257.3 L511.5 256.2 L511.0 256.7 L510.5 257.8 L510.0 259.2 L509.5 260.5 L509.0 262.7 L508.5 262.2 L508.0 260.2 L507.5 258.6 L507.0 256.9 L506.5 258.6 L506.0 263.1 L505.5 262.6 L505.0 257.2 L504.5 255.3 L504.0 254.9 L503.5 253.8 L503.0 257.2 L502.5 260.8 L502.0 263.4 L501.5 261.9 L501.0 258.6 L500.5 260.4 L500.0 262.9 L499.5 264.2 L499.0 266.2 L498.5 264.1 L498.0 262.0 L497.5 259.8 L497.0 257.2 L496.5 255.2 L496.0 256.5 L495.5 255.6 L495.0 257.6 L494.5 259.8 L494.0 259.3 L493.5 257.1 L493.0 255.8 L492.5 256.0 L492.0 256.2 L491.5 257.4 L491.0 260.4 L490.5 262.9 L490.0 267.0 L489.5 268.8 L489.0 267.4 L488.5 263.5 L488.0 260.7 L487.5 257.7 L487.0 256.7 L486.5 259.0 L486.0 262.1 L485.5 263.3 L485.0 261.4 L484.5 256.0 L484.0 252.0 L483.5 252.0 L483.0 252.0 L482.5 252.0 L482.0 252.0 L481.5 252.0 L481.0 252.0 L480.5 252.0 L480.0 252.0 L479.5 252.0 L479.0 252.0 L478.5 252.0 L478.0 252.0 L477.5 252.0 L477.0 252.0 L476.5 252.0 L476.0 252.0 L475.5 252.0 L475.0 252.0 Z" fill="#3dbd8d"/><rect x="475" y="221.5" width="208" height="2" fill="#b3b9a2"/><rect x="475" y="223.5" width="208" height="3.5" fill="#9cb1ac"/><rect x="473" y="153" width="2" height="125" fill="#a9bab2"/></svg>
<div style="left:478px;top:157.72px;font-size:12.5px;line-height:12.5px;color:#b9c9c1;white-space:nowrap;-webkit-text-stroke:0.2px #b9c9c1;">Track 3_001</div>
<div style="left:606px;top:157.60px;font-size:13px;line-height:13px;color:#c2cec8;white-space:nowrap;-webkit-text-stroke:0.2px #c2cec8;letter-spacing:0.2px;">Volume</div>
<svg style="left:662px;top:157px;" width="12" height="9" viewBox="0 0 12 9"><path d="M1.5 2 L6 6.5 L10.5 2" stroke="#c8d0cc" stroke-width="1.6" fill="none"/></svg>
<svg style="left:486.2px;top:251.7px;" width="16" height="13" viewBox="0 0 16 13"><rect x="1.10" y="8.20" width="1.8" height="3.8" fill="#e8f4ee"/><rect x="4.70" y="6.40" width="1.8" height="5.6" fill="#e8f4ee"/><rect x="8.30" y="5.20" width="1.8" height="6.8" fill="#e8f4ee"/><rect x="11.90" y="2.70" width="1.8" height="9.3" fill="#e8f4ee"/></svg>
<svg style="left:0;top:0" width="1024" height="706" viewBox="0 0 1024 706"><rect x="389" y="282" width="630" height="125" fill="#33214e"/><path d="M391.0 327.6 L392.0 327.0 L393.0 326.3 L394.0 326.2 L395.0 324.4 L396.0 323.6 L397.0 324.0 L398.0 322.9 L399.0 323.1 L400.0 321.9 L401.0 323.5 L402.0 321.8 L403.0 323.9 L404.0 317.4 L405.0 323.4 L406.0 321.9 L407.0 323.7 L408.0 322.8 L409.0 322.2 L410.0 324.2 L411.0 322.6 L412.0 323.3 L413.0 324.1 L414.0 324.4 L415.0 323.3 L416.0 323.5 L417.0 324.2 L418.0 324.1 L419.0 322.1 L420.0 324.2 L421.0 322.8 L422.0 323.8 L423.0 323.2 L424.0 319.9 L425.0 324.2 L426.0 324.1 L427.0 322.8 L428.0 324.2 L429.0 321.8 L430.0 322.6 L431.0 322.6 L432.0 322.4 L433.0 322.0 L434.0 322.2 L435.0 323.0 L436.0 321.7 L437.0 322.6 L438.0 321.1 L439.0 323.9 L440.0 319.8 L441.0 323.9 L442.0 323.4 L443.0 324.0 L444.0 322.2 L445.0 324.1 L446.0 322.8 L447.0 323.5 L448.0 323.0 L449.0 320.4 L450.0 324.3 L451.0 322.6 L452.0 324.3 L453.0 324.3 L454.0 323.1 L455.0 324.1 L456.0 322.9 L457.0 323.0 L458.0 323.8 L459.0 322.3 L460.0 323.2 L461.0 322.5 L462.0 323.1 L463.0 323.2 L464.0 322.1 L465.0 323.9 L466.0 324.3 L467.0 323.5 L468.0 324.2 L469.0 324.2 L470.0 323.0 L471.0 324.3 L472.0 322.8 L473.0 323.2 L474.0 322.2 L475.0 323.3 L476.0 319.4 L477.0 323.5 L478.0 322.7 L479.0 321.8 L480.0 319.0 L481.0 323.2 L482.0 321.8 L483.0 323.7 L484.0 322.7 L485.0 323.0 L486.0 323.1 L487.0 323.7 L488.0 322.8 L489.0 323.5 L490.0 323.3 L491.0 321.1 L492.0 322.0 L493.0 322.9 L494.0 322.0 L495.0 321.2 L496.0 321.7 L497.0 320.6 L498.0 322.3 L499.0 321.3 L500.0 323.4 L501.0 322.9 L502.0 322.0 L503.0 323.2 L504.0 323.1 L505.0 321.2 L506.0 322.6 L507.0 321.2 L508.0 321.3 L509.0 320.9 L510.0 320.2 L511.0 323.3 L512.0 323.0 L513.0 321.7 L514.0 320.4 L515.0 320.5 L516.0 320.9 L517.0 323.2 L518.0 322.2 L519.0 318.8 L520.0 323.4 L521.0 323.2 L522.0 322.6 L523.0 322.9 L524.0 319.5 L525.0 321.5 L526.0 323.5 L527.0 322.7 L528.0 322.4 L529.0 320.8 L530.0 322.2 L531.0 323.5 L532.0 323.2 L533.0 322.6 L534.0 323.4 L535.0 322.3 L536.0 322.6 L537.0 323.5 L538.0 319.4 L539.0 322.5 L540.0 322.4 L541.0 323.0 L542.0 321.9 L543.0 322.6 L544.0 323.6 L545.0 321.5 L546.0 321.7 L547.0 321.9 L548.0 323.1 L549.0 324.0 L550.0 323.6 L551.0 323.9 L552.0 324.0 L553.0 321.8 L554.0 323.6 L555.0 322.0 L556.0 323.5 L557.0 323.0 L558.0 323.0 L559.0 323.7 L560.0 323.0 L561.0 324.0 L562.0 324.0 L563.0 322.7 L564.0 323.7 L565.0 322.3 L566.0 322.6 L567.0 322.5 L568.0 322.6 L569.0 321.8 L570.0 322.4 L571.0 318.0 L572.0 323.0 L573.0 321.5 L574.0 322.5 L575.0 320.9 L576.0 323.6 L577.0 323.6 L578.0 322.1 L579.0 323.0 L580.0 323.3 L581.0 323.6 L582.0 323.2 L583.0 321.3 L584.0 323.2 L585.0 323.7 L586.0 321.7 L587.0 323.5 L588.0 323.9 L589.0 323.8 L590.0 323.0 L591.0 321.8 L592.0 321.6 L593.0 322.8 L594.0 321.2 L595.0 322.3 L596.0 323.3 L597.0 322.6 L598.0 323.7 L599.0 322.2 L600.0 323.4 L601.0 323.4 L602.0 322.5 L603.0 322.6 L604.0 324.0 L605.0 324.0 L606.0 324.2 L607.0 323.6 L608.0 323.4 L609.0 323.7 L610.0 323.0 L611.0 323.2 L612.0 323.2 L613.0 322.8 L614.0 322.9 L615.0 323.7 L616.0 323.7 L617.0 322.6 L618.0 324.3 L619.0 322.7 L620.0 322.6 L621.0 323.8 L622.0 322.6 L623.0 323.2 L624.0 323.8 L625.0 324.7 L626.0 322.9 L627.0 323.5 L628.0 324.8 L629.0 324.3 L630.0 324.5 L631.0 324.8 L632.0 323.9 L633.0 323.7 L634.0 322.9 L635.0 324.3 L636.0 324.1 L637.0 324.8 L638.0 323.9 L639.0 324.8 L640.0 324.3 L641.0 324.5 L642.0 322.2 L643.0 313.0 L644.0 322.2 L645.0 323.2 L646.0 324.7 L647.0 324.7 L648.0 322.6 L649.0 324.2 L650.0 323.9 L651.0 322.7 L652.0 323.8 L653.0 324.3 L654.0 324.5 L655.0 322.5 L656.0 323.1 L657.0 324.0 L658.0 324.1 L659.0 323.1 L660.0 323.9 L661.0 323.1 L662.0 320.3 L663.0 323.9 L664.0 322.6 L665.0 324.0 L666.0 322.6 L667.0 324.0 L668.0 322.8 L669.0 322.2 L670.0 323.9 L671.0 323.8 L672.0 322.3 L673.0 319.9 L674.0 322.9 L675.0 324.0 L676.0 319.9 L677.0 323.0 L678.0 323.5 L679.0 323.0 L680.0 322.1 L681.0 322.5 L682.0 323.4 L683.0 322.3 L684.0 322.4 L685.0 323.9 L686.0 324.0 L687.0 322.4 L688.0 323.7 L689.0 323.5 L690.0 322.7 L691.0 322.1 L692.0 323.4 L693.0 323.8 L694.0 323.9 L695.0 323.7 L696.0 322.2 L697.0 321.6 L698.0 323.5 L699.0 322.8 L700.0 317.0 L701.0 322.8 L702.0 320.0 L703.0 324.2 L704.0 323.5 L705.0 323.9 L706.0 324.0 L707.0 323.6 L708.0 322.1 L709.0 323.2 L710.0 322.9 L711.0 322.9 L712.0 323.0 L713.0 324.2 L714.0 323.8 L715.0 324.0 L716.0 323.6 L717.0 322.7 L718.0 323.6 L719.0 323.0 L720.0 324.1 L721.0 323.7 L722.0 322.8 L723.0 321.7 L724.0 323.3 L725.0 321.9 L726.0 323.0 L727.0 323.8 L728.0 323.6 L729.0 323.5 L730.0 322.5 L731.0 323.3 L732.0 322.1 L733.0 321.7 L734.0 322.5 L735.0 322.6 L736.0 323.4 L737.0 323.5 L738.0 321.7 L739.0 321.3 L740.0 321.5 L741.0 321.7 L742.0 321.2 L743.0 321.7 L744.0 323.3 L745.0 323.2 L746.0 320.6 L747.0 321.8 L748.0 323.3 L749.0 321.4 L750.0 323.3 L751.0 322.8 L752.0 322.5 L753.0 322.5 L754.0 323.1 L755.0 322.9 L756.0 323.3 L757.0 322.8 L758.0 319.1 L759.0 323.2 L760.0 323.0 L761.0 318.3 L762.0 321.8 L763.0 320.4 L764.0 323.1 L765.0 323.3 L766.0 322.3 L767.0 323.5 L768.0 321.6 L769.0 321.5 L770.0 322.7 L771.0 323.5 L772.0 322.9 L773.0 322.1 L774.0 323.1 L775.0 323.4 L776.0 323.5 L777.0 322.9 L778.0 323.2 L779.0 321.5 L780.0 321.2 L781.0 323.1 L782.0 322.4 L783.0 323.3 L784.0 323.3 L785.0 321.8 L786.0 322.8 L787.0 323.2 L788.0 323.7 L789.0 324.1 L790.0 322.9 L791.0 321.7 L792.0 321.7 L793.0 321.7 L794.0 322.8 L795.0 319.6 L796.0 323.8 L797.0 322.2 L798.0 324.2 L799.0 323.9 L800.0 323.2 L801.0 321.3 L802.0 322.4 L803.0 322.3 L804.0 324.0 L805.0 324.0 L806.0 323.8 L807.0 322.8 L808.0 323.4 L809.0 323.0 L810.0 322.8 L811.0 323.5 L812.0 322.3 L813.0 321.9 L814.0 323.0 L815.0 322.2 L816.0 323.5 L817.0 324.1 L818.0 321.8 L819.0 323.8 L820.0 323.7 L821.0 322.1 L822.0 321.9 L823.0 322.5 L824.0 321.7 L825.0 323.4 L826.0 322.8 L827.0 323.4 L828.0 321.5 L829.0 322.6 L830.0 323.4 L831.0 324.0 L832.0 322.4 L833.0 322.3 L834.0 319.3 L835.0 323.0 L836.0 323.1 L837.0 324.0 L838.0 321.7 L839.0 323.0 L840.0 322.1 L841.0 323.4 L842.0 323.4 L843.0 322.6 L844.0 324.2 L845.0 320.3 L846.0 324.1 L847.0 322.9 L848.0 323.4 L849.0 322.7 L850.0 323.5 L851.0 321.5 L852.0 323.7 L853.0 323.9 L854.0 323.6 L855.0 324.5 L856.0 323.4 L857.0 323.4 L858.0 323.1 L859.0 324.2 L860.0 324.0 L861.0 322.5 L862.0 323.0 L863.0 324.6 L864.0 323.6 L865.0 323.7 L866.0 323.5 L867.0 324.1 L868.0 324.1 L869.0 324.8 L870.0 323.9 L871.0 322.9 L872.0 324.3 L873.0 320.6 L874.0 323.7 L875.0 324.3 L876.0 324.7 L877.0 324.7 L878.0 324.3 L879.0 323.9 L880.0 323.7 L881.0 320.4 L882.0 323.6 L883.0 322.9 L884.0 324.6 L885.0 323.2 L886.0 323.9 L887.0 323.3 L888.0 324.5 L889.0 324.6 L890.0 322.8 L891.0 323.3 L892.0 321.5 L893.0 324.2 L894.0 324.2 L895.0 322.7 L896.0 323.4 L897.0 323.2 L898.0 324.4 L899.0 324.1 L900.0 322.3 L901.0 324.1 L902.0 323.0 L903.0 323.2 L904.0 322.3 L905.0 323.1 L906.0 319.7 L907.0 323.2 L908.0 322.6 L909.0 323.0 L910.0 323.6 L911.0 321.6 L912.0 321.7 L913.0 322.5 L914.0 323.9 L915.0 320.3 L916.0 322.4 L917.0 318.5 L918.0 321.9 L919.0 323.9 L920.0 322.8 L921.0 323.6 L922.0 323.5 L923.0 323.5 L924.0 323.5 L925.0 323.4 L926.0 318.6 L927.0 323.6 L928.0 323.3 L929.0 323.7 L930.0 322.0 L931.0 322.2 L932.0 323.2 L933.0 323.6 L934.0 323.3 L935.0 321.5 L936.0 321.8 L937.0 323.3 L938.0 323.9 L939.0 323.7 L940.0 322.8 L941.0 321.7 L942.0 321.7 L943.0 322.9 L944.0 323.2 L945.0 323.8 L946.0 323.4 L947.0 320.4 L948.0 323.1 L949.0 321.9 L950.0 323.5 L951.0 323.5 L952.0 323.0 L953.0 323.8 L954.0 323.9 L955.0 323.9 L956.0 323.9 L957.0 322.6 L958.0 321.8 L959.0 323.7 L960.0 324.0 L961.0 321.6 L962.0 322.2 L963.0 323.7 L964.0 322.9 L965.0 323.6 L966.0 323.7 L967.0 321.5 L968.0 322.3 L969.0 322.0 L970.0 323.9 L971.0 322.6 L972.0 323.8 L973.0 321.6 L974.0 322.0 L975.0 322.1 L976.0 321.8 L977.0 322.3 L978.0 323.7 L979.0 322.1 L980.0 323.1 L981.0 322.0 L982.0 321.1 L983.0 320.9 L984.0 318.7 L985.0 322.5 L986.0 322.1 L987.0 322.8 L988.0 322.6 L989.0 320.7 L990.0 321.4 L991.0 320.8 L992.0 322.2 L993.0 322.1 L994.0 322.8 L995.0 322.4 L996.0 318.9 L997.0 321.6 L998.0 322.0 L999.0 318.3 L1000.0 321.6 L1001.0 322.3 L1002.0 322.3 L1003.0 323.2 L1004.0 322.2 L1005.0 322.9 L1006.0 322.7 L1007.0 321.9 L1008.0 322.5 L1009.0 322.7 L1010.0 322.7 L1011.0 321.7 L1012.0 322.6 L1013.0 322.4 L1014.0 323.6 L1015.0 322.2 L1016.0 320.4 L1017.0 321.5 L1018.0 321.8 L1019.0 322.1 L1019.0 333.5 L1018.0 334.1 L1017.0 333.1 L1016.0 334.8 L1015.0 332.7 L1014.0 333.2 L1013.0 335.2 L1012.0 334.1 L1011.0 335.2 L1010.0 334.2 L1009.0 335.0 L1008.0 333.6 L1007.0 333.4 L1006.0 333.5 L1005.0 334.7 L1004.0 333.5 L1003.0 333.2 L1002.0 334.1 L1001.0 332.8 L1000.0 333.7 L999.0 334.2 L998.0 334.6 L997.0 333.6 L996.0 335.2 L995.0 333.6 L994.0 334.7 L993.0 333.1 L992.0 334.8 L991.0 333.0 L990.0 333.9 L989.0 332.7 L988.0 333.4 L987.0 333.7 L986.0 334.5 L985.0 334.4 L984.0 333.5 L983.0 334.4 L982.0 332.9 L981.0 335.0 L980.0 332.8 L979.0 334.3 L978.0 332.5 L977.0 333.3 L976.0 334.5 L975.0 332.3 L974.0 334.8 L973.0 332.7 L972.0 333.6 L971.0 334.4 L970.0 333.1 L969.0 332.6 L968.0 334.0 L967.0 334.3 L966.0 332.3 L965.0 334.0 L964.0 334.3 L963.0 334.2 L962.0 332.3 L961.0 332.4 L960.0 332.9 L959.0 333.1 L958.0 335.6 L957.0 332.5 L956.0 334.2 L955.0 333.5 L954.0 332.9 L953.0 334.2 L952.0 332.7 L951.0 334.0 L950.0 332.8 L949.0 332.4 L948.0 333.3 L947.0 332.2 L946.0 332.0 L945.0 337.7 L944.0 333.2 L943.0 332.4 L942.0 333.0 L941.0 332.3 L940.0 333.8 L939.0 332.2 L938.0 334.5 L937.0 332.2 L936.0 333.7 L935.0 332.3 L934.0 334.4 L933.0 334.3 L932.0 332.2 L931.0 335.8 L930.0 332.8 L929.0 334.0 L928.0 334.4 L927.0 332.9 L926.0 333.2 L925.0 332.7 L924.0 334.3 L923.0 333.6 L922.0 333.0 L921.0 334.3 L920.0 332.7 L919.0 333.9 L918.0 332.8 L917.0 332.0 L916.0 333.1 L915.0 334.4 L914.0 334.8 L913.0 333.3 L912.0 332.0 L911.0 334.3 L910.0 332.4 L909.0 334.3 L908.0 335.3 L907.0 332.4 L906.0 332.8 L905.0 334.1 L904.0 333.3 L903.0 331.8 L902.0 331.7 L901.0 333.8 L900.0 332.5 L899.0 332.3 L898.0 333.6 L897.0 333.5 L896.0 332.4 L895.0 331.6 L894.0 331.8 L893.0 331.7 L892.0 331.7 L891.0 331.7 L890.0 332.6 L889.0 332.7 L888.0 331.5 L887.0 332.8 L886.0 331.7 L885.0 331.2 L884.0 332.5 L883.0 332.9 L882.0 331.8 L881.0 331.4 L880.0 331.4 L879.0 331.8 L878.0 332.0 L877.0 331.6 L876.0 332.1 L875.0 332.5 L874.0 332.9 L873.0 331.8 L872.0 332.0 L871.0 332.1 L870.0 331.3 L869.0 331.3 L868.0 331.3 L867.0 332.6 L866.0 336.7 L865.0 331.3 L864.0 331.3 L863.0 332.4 L862.0 336.3 L861.0 333.0 L860.0 331.8 L859.0 333.0 L858.0 331.5 L857.0 331.9 L856.0 332.1 L855.0 332.6 L854.0 331.6 L853.0 332.4 L852.0 331.9 L851.0 333.5 L850.0 332.2 L849.0 332.1 L848.0 333.8 L847.0 333.8 L846.0 333.9 L845.0 335.9 L844.0 331.9 L843.0 333.4 L842.0 331.9 L841.0 333.1 L840.0 332.1 L839.0 332.8 L838.0 332.7 L837.0 332.9 L836.0 332.1 L835.0 332.1 L834.0 334.1 L833.0 335.7 L832.0 332.3 L831.0 332.2 L830.0 332.1 L829.0 332.3 L828.0 332.0 L827.0 333.9 L826.0 334.4 L825.0 332.8 L824.0 331.9 L823.0 333.4 L822.0 332.0 L821.0 333.1 L820.0 332.6 L819.0 332.6 L818.0 332.3 L817.0 332.6 L816.0 333.5 L815.0 333.3 L814.0 332.3 L813.0 332.4 L812.0 332.5 L811.0 332.0 L810.0 333.4 L809.0 332.4 L808.0 331.9 L807.0 332.0 L806.0 333.0 L805.0 335.5 L804.0 333.0 L803.0 337.0 L802.0 331.9 L801.0 331.9 L800.0 333.9 L799.0 333.5 L798.0 332.8 L797.0 332.0 L796.0 333.6 L795.0 334.2 L794.0 334.1 L793.0 332.8 L792.0 332.6 L791.0 333.5 L790.0 334.2 L789.0 333.2 L788.0 333.2 L787.0 333.4 L786.0 332.1 L785.0 334.1 L784.0 333.5 L783.0 334.7 L782.0 334.6 L781.0 333.8 L780.0 333.0 L779.0 332.8 L778.0 333.4 L777.0 332.3 L776.0 332.4 L775.0 334.2 L774.0 332.5 L773.0 333.0 L772.0 334.0 L771.0 333.8 L770.0 334.2 L769.0 335.3 L768.0 333.3 L767.0 333.7 L766.0 332.6 L765.0 333.3 L764.0 332.6 L763.0 333.6 L762.0 333.1 L761.0 333.5 L760.0 335.1 L759.0 332.9 L758.0 332.7 L757.0 333.1 L756.0 334.0 L755.0 333.8 L754.0 332.9 L753.0 334.5 L752.0 334.2 L751.0 334.8 L750.0 333.9 L749.0 335.6 L748.0 336.7 L747.0 333.4 L746.0 332.8 L745.0 332.6 L744.0 333.3 L743.0 334.0 L742.0 334.7 L741.0 333.1 L740.0 333.2 L739.0 332.5 L738.0 333.4 L737.0 334.1 L736.0 335.1 L735.0 332.7 L734.0 332.9 L733.0 332.4 L732.0 333.8 L731.0 332.8 L730.0 333.3 L729.0 333.1 L728.0 332.1 L727.0 332.3 L726.0 332.5 L725.0 334.5 L724.0 332.7 L723.0 333.7 L722.0 334.3 L721.0 333.3 L720.0 332.4 L719.0 332.7 L718.0 334.6 L717.0 335.4 L716.0 332.5 L715.0 333.2 L714.0 332.0 L713.0 332.4 L712.0 331.9 L711.0 334.0 L710.0 333.9 L709.0 333.6 L708.0 332.0 L707.0 333.7 L706.0 332.2 L705.0 333.3 L704.0 332.8 L703.0 334.2 L702.0 332.8 L701.0 333.2 L700.0 339.0 L699.0 333.2 L698.0 334.0 L697.0 332.2 L696.0 335.3 L695.0 332.7 L694.0 332.1 L693.0 332.4 L692.0 333.8 L691.0 333.1 L690.0 332.0 L689.0 336.9 L688.0 332.8 L687.0 332.3 L686.0 332.0 L685.0 332.6 L684.0 332.0 L683.0 334.4 L682.0 335.0 L681.0 336.5 L680.0 332.2 L679.0 332.4 L678.0 332.0 L677.0 333.8 L676.0 333.8 L675.0 332.9 L674.0 334.0 L673.0 332.9 L672.0 332.2 L671.0 332.7 L670.0 333.6 L669.0 333.3 L668.0 333.6 L667.0 332.9 L666.0 332.4 L665.0 336.5 L664.0 332.1 L663.0 333.5 L662.0 332.7 L661.0 331.8 L660.0 333.8 L659.0 333.6 L658.0 332.9 L657.0 333.0 L656.0 335.7 L655.0 333.4 L654.0 331.6 L653.0 332.6 L652.0 331.6 L651.0 331.6 L650.0 331.6 L649.0 332.2 L648.0 332.3 L647.0 333.1 L646.0 331.6 L645.0 331.4 L644.0 333.8 L643.0 343.0 L642.0 333.8 L641.0 331.6 L640.0 331.2 L639.0 331.3 L638.0 332.5 L637.0 332.4 L636.0 331.8 L635.0 332.0 L634.0 332.7 L633.0 332.5 L632.0 331.8 L631.0 332.3 L630.0 332.1 L629.0 332.1 L628.0 331.4 L627.0 331.7 L626.0 332.3 L625.0 331.2 L624.0 332.8 L623.0 331.6 L622.0 332.9 L621.0 332.2 L620.0 331.5 L619.0 331.9 L618.0 332.4 L617.0 332.5 L616.0 332.8 L615.0 331.6 L614.0 333.5 L613.0 333.3 L612.0 331.7 L611.0 331.6 L610.0 333.9 L609.0 334.7 L608.0 333.0 L607.0 331.8 L606.0 332.1 L605.0 332.5 L604.0 331.9 L603.0 332.4 L602.0 332.4 L601.0 333.3 L600.0 333.0 L599.0 332.2 L598.0 337.1 L597.0 332.0 L596.0 332.9 L595.0 332.7 L594.0 332.6 L593.0 333.1 L592.0 332.2 L591.0 332.6 L590.0 333.0 L589.0 332.5 L588.0 334.1 L587.0 333.2 L586.0 333.2 L585.0 332.3 L584.0 334.0 L583.0 336.3 L582.0 333.2 L581.0 332.1 L580.0 333.2 L579.0 332.5 L578.0 332.6 L577.0 332.3 L576.0 332.4 L575.0 334.3 L574.0 336.5 L573.0 332.1 L572.0 333.0 L571.0 338.0 L570.0 333.9 L569.0 334.4 L568.0 334.0 L567.0 334.2 L566.0 332.9 L565.0 332.6 L564.0 332.2 L563.0 332.1 L562.0 333.6 L561.0 333.0 L560.0 334.3 L559.0 331.9 L558.0 332.1 L557.0 333.7 L556.0 332.6 L555.0 332.3 L554.0 332.4 L553.0 334.1 L552.0 333.5 L551.0 332.5 L550.0 333.5 L549.0 332.2 L548.0 333.5 L547.0 332.1 L546.0 332.8 L545.0 332.5 L544.0 334.0 L543.0 333.8 L542.0 332.1 L541.0 332.4 L540.0 333.3 L539.0 334.0 L538.0 332.2 L537.0 332.6 L536.0 333.5 L535.0 332.9 L534.0 332.4 L533.0 335.1 L532.0 333.6 L531.0 333.2 L530.0 336.1 L529.0 334.5 L528.0 335.0 L527.0 333.5 L526.0 339.1 L525.0 333.3 L524.0 334.9 L523.0 334.2 L522.0 333.8 L521.0 337.5 L520.0 335.3 L519.0 334.8 L518.0 335.5 L517.0 333.1 L516.0 333.5 L515.0 332.7 L514.0 334.3 L513.0 334.0 L512.0 335.4 L511.0 333.4 L510.0 334.5 L509.0 334.4 L508.0 334.9 L507.0 333.1 L506.0 334.1 L505.0 334.4 L504.0 336.5 L503.0 333.5 L502.0 332.5 L501.0 333.5 L500.0 335.2 L499.0 335.3 L498.0 332.6 L497.0 332.5 L496.0 333.5 L495.0 335.0 L494.0 332.3 L493.0 334.3 L492.0 332.7 L491.0 334.5 L490.0 332.7 L489.0 333.9 L488.0 334.2 L487.0 332.4 L486.0 332.7 L485.0 332.4 L484.0 332.1 L483.0 333.5 L482.0 334.1 L481.0 332.8 L480.0 337.0 L479.0 334.0 L478.0 331.9 L477.0 333.6 L476.0 333.0 L475.0 332.8 L474.0 332.0 L473.0 332.2 L472.0 332.9 L471.0 332.0 L470.0 333.8 L469.0 332.6 L468.0 332.1 L467.0 335.1 L466.0 332.3 L465.0 333.6 L464.0 333.8 L463.0 333.1 L462.0 331.9 L461.0 333.3 L460.0 333.6 L459.0 333.1 L458.0 333.3 L457.0 332.6 L456.0 331.8 L455.0 335.1 L454.0 333.4 L453.0 332.9 L452.0 333.5 L451.0 331.7 L450.0 333.2 L449.0 332.5 L448.0 332.6 L447.0 332.1 L446.0 334.0 L445.0 332.7 L444.0 332.4 L443.0 332.5 L442.0 333.9 L441.0 332.0 L440.0 332.2 L439.0 333.3 L438.0 333.5 L437.0 333.0 L436.0 333.9 L435.0 333.1 L434.0 333.0 L433.0 333.9 L432.0 334.0 L431.0 334.0 L430.0 335.2 L429.0 331.8 L428.0 331.8 L427.0 333.3 L426.0 332.4 L425.0 332.0 L424.0 332.0 L423.0 333.7 L422.0 334.0 L421.0 332.1 L420.0 331.7 L419.0 333.7 L418.0 333.2 L417.0 333.7 L416.0 332.7 L415.0 332.2 L414.0 331.6 L413.0 333.1 L412.0 331.6 L411.0 331.8 L410.0 333.6 L409.0 332.4 L408.0 332.5 L407.0 334.2 L406.0 332.4 L405.0 332.3 L404.0 332.9 L403.0 332.4 L402.0 332.8 L401.0 332.2 L400.0 333.7 L399.0 332.5 L398.0 333.4 L397.0 332.9 L396.0 331.4 L395.0 331.0 L394.0 332.8 L393.0 329.9 L392.0 329.0 L391.0 328.4 Z" fill="#a97de2"/><path d="M391.0 380.6 L392.0 380.2 L393.0 379.2 L394.0 379.2 L395.0 376.5 L396.0 376.4 L397.0 376.0 L398.0 376.9 L399.0 375.6 L400.0 375.0 L401.0 371.8 L402.0 374.3 L403.0 375.3 L404.0 376.2 L405.0 376.8 L406.0 376.5 L407.0 376.6 L408.0 376.7 L409.0 376.6 L410.0 376.7 L411.0 377.3 L412.0 373.8 L413.0 375.3 L414.0 375.2 L415.0 375.8 L416.0 376.4 L417.0 375.2 L418.0 375.4 L419.0 375.9 L420.0 376.9 L421.0 375.3 L422.0 374.9 L423.0 375.0 L424.0 375.1 L425.0 376.6 L426.0 375.1 L427.0 376.2 L428.0 376.6 L429.0 376.1 L430.0 375.7 L431.0 376.7 L432.0 376.7 L433.0 372.2 L434.0 376.9 L435.0 374.2 L436.0 376.9 L437.0 376.2 L438.0 376.0 L439.0 375.2 L440.0 375.5 L441.0 374.9 L442.0 375.6 L443.0 376.8 L444.0 376.9 L445.0 375.0 L446.0 375.2 L447.0 375.4 L448.0 376.1 L449.0 376.7 L450.0 377.0 L451.0 377.3 L452.0 376.8 L453.0 375.4 L454.0 375.4 L455.0 375.9 L456.0 376.9 L457.0 376.0 L458.0 376.1 L459.0 376.6 L460.0 376.5 L461.0 376.5 L462.0 376.0 L463.0 375.8 L464.0 375.2 L465.0 376.0 L466.0 373.8 L467.0 376.6 L468.0 376.4 L469.0 376.2 L470.0 375.2 L471.0 374.1 L472.0 375.8 L473.0 376.7 L474.0 377.0 L475.0 377.0 L476.0 376.2 L477.0 376.5 L478.0 377.0 L479.0 376.2 L480.0 372.0 L481.0 376.2 L482.0 376.5 L483.0 375.6 L484.0 376.9 L485.0 375.1 L486.0 376.1 L487.0 376.6 L488.0 375.9 L489.0 376.1 L490.0 375.0 L491.0 375.7 L492.0 372.4 L493.0 376.0 L494.0 374.5 L495.0 374.0 L496.0 376.4 L497.0 375.5 L498.0 376.2 L499.0 375.4 L500.0 374.5 L501.0 375.3 L502.0 376.2 L503.0 375.5 L504.0 375.6 L505.0 375.1 L506.0 375.1 L507.0 376.4 L508.0 373.4 L509.0 374.4 L510.0 373.9 L511.0 372.3 L512.0 374.9 L513.0 376.1 L514.0 376.0 L515.0 375.0 L516.0 374.4 L517.0 376.1 L518.0 376.3 L519.0 375.1 L520.0 373.8 L521.0 373.7 L522.0 374.8 L523.0 373.7 L524.0 374.3 L525.0 375.6 L526.0 374.1 L527.0 376.2 L528.0 374.1 L529.0 375.6 L530.0 374.4 L531.0 375.7 L532.0 375.9 L533.0 374.0 L534.0 376.0 L535.0 375.3 L536.0 376.6 L537.0 376.5 L538.0 376.6 L539.0 375.3 L540.0 375.9 L541.0 375.8 L542.0 376.9 L543.0 374.8 L544.0 376.8 L545.0 376.7 L546.0 376.8 L547.0 374.7 L548.0 376.8 L549.0 377.0 L550.0 377.0 L551.0 375.5 L552.0 375.9 L553.0 374.6 L554.0 374.6 L555.0 375.0 L556.0 375.0 L557.0 375.6 L558.0 375.6 L559.0 375.0 L560.0 375.4 L561.0 375.5 L562.0 376.4 L563.0 376.9 L564.0 374.6 L565.0 376.6 L566.0 376.6 L567.0 375.4 L568.0 376.7 L569.0 375.4 L570.0 376.0 L571.0 371.0 L572.0 376.0 L573.0 376.2 L574.0 376.8 L575.0 375.1 L576.0 372.5 L577.0 371.7 L578.0 375.1 L579.0 374.8 L580.0 375.5 L581.0 376.3 L582.0 374.0 L583.0 375.5 L584.0 376.1 L585.0 376.1 L586.0 374.3 L587.0 374.3 L588.0 374.4 L589.0 375.7 L590.0 372.3 L591.0 374.8 L592.0 372.9 L593.0 373.6 L594.0 372.4 L595.0 375.5 L596.0 375.5 L597.0 376.7 L598.0 375.0 L599.0 377.0 L600.0 376.4 L601.0 374.1 L602.0 376.2 L603.0 377.1 L604.0 375.3 L605.0 376.2 L606.0 377.2 L607.0 376.1 L608.0 375.7 L609.0 375.5 L610.0 376.8 L611.0 377.3 L612.0 376.8 L613.0 375.9 L614.0 377.4 L615.0 376.1 L616.0 377.3 L617.0 376.6 L618.0 376.6 L619.0 376.4 L620.0 375.8 L621.0 376.0 L622.0 377.4 L623.0 377.6 L624.0 376.4 L625.0 376.4 L626.0 377.1 L627.0 376.8 L628.0 376.3 L629.0 377.3 L630.0 377.5 L631.0 377.1 L632.0 377.2 L633.0 376.8 L634.0 376.0 L635.0 377.0 L636.0 377.5 L637.0 377.0 L638.0 377.6 L639.0 377.5 L640.0 377.7 L641.0 377.7 L642.0 375.2 L643.0 366.0 L644.0 375.2 L645.0 376.4 L646.0 376.2 L647.0 375.9 L648.0 377.4 L649.0 376.4 L650.0 375.7 L651.0 375.9 L652.0 377.6 L653.0 377.1 L654.0 377.5 L655.0 377.5 L656.0 376.0 L657.0 375.7 L658.0 375.3 L659.0 376.8 L660.0 373.3 L661.0 377.0 L662.0 375.6 L663.0 377.3 L664.0 375.9 L665.0 376.9 L666.0 375.4 L667.0 377.0 L668.0 375.2 L669.0 376.1 L670.0 377.1 L671.0 375.2 L672.0 375.7 L673.0 377.0 L674.0 376.7 L675.0 377.0 L676.0 377.0 L677.0 376.5 L678.0 376.9 L679.0 376.1 L680.0 377.0 L681.0 374.7 L682.0 376.7 L683.0 372.8 L684.0 374.6 L685.0 375.6 L686.0 374.8 L687.0 375.3 L688.0 376.1 L689.0 376.2 L690.0 374.7 L691.0 374.9 L692.0 374.8 L693.0 376.2 L694.0 376.5 L695.0 376.9 L696.0 376.7 L697.0 375.3 L698.0 376.6 L699.0 375.6 L700.0 370.0 L701.0 375.8 L702.0 377.1 L703.0 377.0 L704.0 376.6 L705.0 376.8 L706.0 376.6 L707.0 376.5 L708.0 373.7 L709.0 376.2 L710.0 375.4 L711.0 374.5 L712.0 375.4 L713.0 376.6 L714.0 375.7 L715.0 375.6 L716.0 372.0 L717.0 377.0 L718.0 376.9 L719.0 373.0 L720.0 376.5 L721.0 376.9 L722.0 376.8 L723.0 376.6 L724.0 375.5 L725.0 376.5 L726.0 376.9 L727.0 374.7 L728.0 376.8 L729.0 375.1 L730.0 375.8 L731.0 376.8 L732.0 376.5 L733.0 376.1 L734.0 374.4 L735.0 375.4 L736.0 376.5 L737.0 374.7 L738.0 375.9 L739.0 375.0 L740.0 374.4 L741.0 374.4 L742.0 374.7 L743.0 376.5 L744.0 375.8 L745.0 373.6 L746.0 376.1 L747.0 374.6 L748.0 375.9 L749.0 374.3 L750.0 374.1 L751.0 373.6 L752.0 375.9 L753.0 374.4 L754.0 374.3 L755.0 375.5 L756.0 375.4 L757.0 375.4 L758.0 376.3 L759.0 372.4 L760.0 375.7 L761.0 372.3 L762.0 375.6 L763.0 374.1 L764.0 374.0 L765.0 376.0 L766.0 376.1 L767.0 374.5 L768.0 374.6 L769.0 376.2 L770.0 374.6 L771.0 374.5 L772.0 374.9 L773.0 376.3 L774.0 374.2 L775.0 376.6 L776.0 376.7 L777.0 375.9 L778.0 376.3 L779.0 375.3 L780.0 376.8 L781.0 374.7 L782.0 376.5 L783.0 374.8 L784.0 376.8 L785.0 376.3 L786.0 376.7 L787.0 376.9 L788.0 376.3 L789.0 376.9 L790.0 372.7 L791.0 376.8 L792.0 376.1 L793.0 375.1 L794.0 376.8 L795.0 373.4 L796.0 376.3 L797.0 377.0 L798.0 375.0 L799.0 375.2 L800.0 376.7 L801.0 376.7 L802.0 375.6 L803.0 375.0 L804.0 373.0 L805.0 375.1 L806.0 377.1 L807.0 376.8 L808.0 376.9 L809.0 375.8 L810.0 375.5 L811.0 375.1 L812.0 375.8 L813.0 377.0 L814.0 376.3 L815.0 374.7 L816.0 377.0 L817.0 376.3 L818.0 376.6 L819.0 376.3 L820.0 377.0 L821.0 376.4 L822.0 376.2 L823.0 376.2 L824.0 376.8 L825.0 376.4 L826.0 376.9 L827.0 376.8 L828.0 376.8 L829.0 375.0 L830.0 375.5 L831.0 375.8 L832.0 374.7 L833.0 376.8 L834.0 376.7 L835.0 376.8 L836.0 375.2 L837.0 376.2 L838.0 376.1 L839.0 376.0 L840.0 376.9 L841.0 374.1 L842.0 376.1 L843.0 375.6 L844.0 376.9 L845.0 376.2 L846.0 375.4 L847.0 375.2 L848.0 373.4 L849.0 377.2 L850.0 377.0 L851.0 375.7 L852.0 377.0 L853.0 371.9 L854.0 377.0 L855.0 374.2 L856.0 376.5 L857.0 377.5 L858.0 376.1 L859.0 376.5 L860.0 375.8 L861.0 375.9 L862.0 377.5 L863.0 376.7 L864.0 376.7 L865.0 377.1 L866.0 377.3 L867.0 376.4 L868.0 376.8 L869.0 377.4 L870.0 377.8 L871.0 377.8 L872.0 377.6 L873.0 376.0 L874.0 376.7 L875.0 376.7 L876.0 376.6 L877.0 377.6 L878.0 377.5 L879.0 377.5 L880.0 377.3 L881.0 376.2 L882.0 374.0 L883.0 377.8 L884.0 377.5 L885.0 377.4 L886.0 376.2 L887.0 376.0 L888.0 377.7 L889.0 377.4 L890.0 377.7 L891.0 377.5 L892.0 376.2 L893.0 376.1 L894.0 376.2 L895.0 377.4 L896.0 377.3 L897.0 376.9 L898.0 377.2 L899.0 376.2 L900.0 375.5 L901.0 377.1 L902.0 377.1 L903.0 375.7 L904.0 375.9 L905.0 375.4 L906.0 376.0 L907.0 376.9 L908.0 377.1 L909.0 377.1 L910.0 373.4 L911.0 375.3 L912.0 376.7 L913.0 375.9 L914.0 375.8 L915.0 376.5 L916.0 377.0 L917.0 375.8 L918.0 376.1 L919.0 376.7 L920.0 374.8 L921.0 376.3 L922.0 375.0 L923.0 376.0 L924.0 373.8 L925.0 376.8 L926.0 375.1 L927.0 373.5 L928.0 374.4 L929.0 376.1 L930.0 374.8 L931.0 374.6 L932.0 376.7 L933.0 376.7 L934.0 376.6 L935.0 376.6 L936.0 371.3 L937.0 376.5 L938.0 376.0 L939.0 376.3 L940.0 374.8 L941.0 376.3 L942.0 375.5 L943.0 375.2 L944.0 375.1 L945.0 376.2 L946.0 376.7 L947.0 375.5 L948.0 376.3 L949.0 374.9 L950.0 376.3 L951.0 376.9 L952.0 377.0 L953.0 375.7 L954.0 375.3 L955.0 376.6 L956.0 376.8 L957.0 374.9 L958.0 375.3 L959.0 375.6 L960.0 375.2 L961.0 375.2 L962.0 374.8 L963.0 376.0 L964.0 376.5 L965.0 376.5 L966.0 376.9 L967.0 375.0 L968.0 375.6 L969.0 374.4 L970.0 374.7 L971.0 376.4 L972.0 376.8 L973.0 376.3 L974.0 376.4 L975.0 376.0 L976.0 376.3 L977.0 376.4 L978.0 374.8 L979.0 375.5 L980.0 376.6 L981.0 375.6 L982.0 375.7 L983.0 375.1 L984.0 374.8 L985.0 375.1 L986.0 374.3 L987.0 376.0 L988.0 374.2 L989.0 376.4 L990.0 373.7 L991.0 374.6 L992.0 375.8 L993.0 375.6 L994.0 373.1 L995.0 373.9 L996.0 375.9 L997.0 373.4 L998.0 373.8 L999.0 375.3 L1000.0 374.8 L1001.0 373.2 L1002.0 375.6 L1003.0 376.4 L1004.0 373.3 L1005.0 374.5 L1006.0 374.4 L1007.0 373.9 L1008.0 374.9 L1009.0 374.3 L1010.0 375.6 L1011.0 374.9 L1012.0 373.7 L1013.0 373.7 L1014.0 374.0 L1015.0 374.4 L1016.0 370.5 L1017.0 373.9 L1018.0 375.6 L1019.0 376.0 L1019.0 386.0 L1018.0 385.3 L1017.0 387.5 L1016.0 386.0 L1015.0 385.4 L1014.0 388.0 L1013.0 387.3 L1012.0 387.7 L1011.0 388.6 L1010.0 387.7 L1009.0 387.9 L1008.0 389.8 L1007.0 385.9 L1006.0 387.1 L1005.0 387.3 L1004.0 386.7 L1003.0 387.4 L1002.0 386.2 L1001.0 392.1 L1000.0 386.2 L999.0 389.6 L998.0 386.3 L997.0 385.7 L996.0 387.8 L995.0 389.6 L994.0 386.3 L993.0 385.8 L992.0 387.1 L991.0 386.9 L990.0 387.7 L989.0 388.4 L988.0 388.4 L987.0 386.6 L986.0 388.2 L985.0 389.9 L984.0 388.1 L983.0 386.7 L982.0 385.5 L981.0 387.2 L980.0 387.0 L979.0 385.3 L978.0 387.1 L977.0 385.5 L976.0 386.0 L975.0 386.0 L974.0 387.3 L973.0 385.5 L972.0 385.9 L971.0 386.9 L970.0 386.8 L969.0 385.2 L968.0 387.4 L967.0 385.2 L966.0 385.1 L965.0 385.7 L964.0 385.2 L963.0 385.9 L962.0 385.7 L961.0 385.7 L960.0 386.5 L959.0 386.4 L958.0 385.1 L957.0 385.3 L956.0 386.4 L955.0 387.3 L954.0 386.5 L953.0 385.0 L952.0 386.0 L951.0 386.3 L950.0 385.7 L949.0 385.3 L948.0 384.9 L947.0 386.9 L946.0 385.0 L945.0 385.1 L944.0 387.3 L943.0 385.3 L942.0 385.4 L941.0 386.4 L940.0 387.2 L939.0 385.1 L938.0 390.0 L937.0 386.7 L936.0 387.3 L935.0 386.8 L934.0 385.6 L933.0 388.5 L932.0 386.6 L931.0 386.0 L930.0 387.2 L929.0 387.1 L928.0 385.2 L927.0 386.0 L926.0 385.4 L925.0 385.9 L924.0 385.6 L923.0 386.7 L922.0 385.5 L921.0 385.6 L920.0 385.5 L919.0 386.7 L918.0 387.2 L917.0 387.4 L916.0 385.6 L915.0 386.5 L914.0 385.2 L913.0 386.8 L912.0 385.5 L911.0 387.2 L910.0 385.4 L909.0 389.2 L908.0 387.2 L907.0 385.6 L906.0 385.5 L905.0 385.9 L904.0 386.5 L903.0 386.9 L902.0 386.8 L901.0 385.5 L900.0 384.8 L899.0 384.7 L898.0 384.6 L897.0 384.9 L896.0 384.7 L895.0 385.7 L894.0 385.0 L893.0 385.4 L892.0 384.4 L891.0 384.9 L890.0 384.5 L889.0 384.5 L888.0 385.0 L887.0 386.0 L886.0 384.3 L885.0 386.1 L884.0 384.4 L883.0 385.8 L882.0 384.3 L881.0 385.1 L880.0 386.2 L879.0 384.3 L878.0 384.2 L877.0 385.3 L876.0 384.2 L875.0 384.8 L874.0 384.4 L873.0 385.2 L872.0 384.3 L871.0 385.3 L870.0 385.0 L869.0 384.3 L868.0 385.1 L867.0 384.7 L866.0 385.9 L865.0 384.5 L864.0 385.7 L863.0 384.7 L862.0 384.4 L861.0 385.5 L860.0 386.1 L859.0 384.9 L858.0 385.9 L857.0 386.1 L856.0 384.6 L855.0 384.8 L854.0 385.9 L853.0 385.1 L852.0 385.5 L851.0 384.8 L850.0 385.0 L849.0 385.3 L848.0 386.4 L847.0 388.8 L846.0 386.5 L845.0 385.6 L844.0 389.4 L843.0 388.7 L842.0 385.5 L841.0 385.3 L840.0 385.3 L839.0 385.0 L838.0 386.9 L837.0 386.7 L836.0 385.3 L835.0 387.1 L834.0 386.4 L833.0 385.0 L832.0 385.5 L831.0 390.0 L830.0 387.2 L829.0 386.9 L828.0 385.9 L827.0 389.3 L826.0 385.4 L825.0 385.3 L824.0 387.0 L823.0 386.9 L822.0 385.3 L821.0 388.8 L820.0 384.9 L819.0 390.2 L818.0 386.2 L817.0 386.9 L816.0 385.5 L815.0 384.9 L814.0 386.9 L813.0 385.2 L812.0 387.0 L811.0 386.2 L810.0 384.9 L809.0 386.0 L808.0 386.3 L807.0 387.1 L806.0 386.9 L805.0 386.7 L804.0 386.5 L803.0 384.9 L802.0 387.2 L801.0 386.8 L800.0 384.8 L799.0 385.9 L798.0 385.7 L797.0 386.4 L796.0 387.1 L795.0 385.2 L794.0 384.9 L793.0 386.3 L792.0 387.2 L791.0 386.1 L790.0 385.7 L789.0 385.2 L788.0 385.1 L787.0 386.0 L786.0 385.4 L785.0 386.8 L784.0 386.2 L783.0 385.3 L782.0 386.4 L781.0 390.2 L780.0 387.2 L779.0 386.0 L778.0 386.7 L777.0 386.8 L776.0 386.4 L775.0 385.5 L774.0 385.6 L773.0 390.5 L772.0 385.8 L771.0 385.8 L770.0 385.7 L769.0 386.9 L768.0 388.0 L767.0 387.9 L766.0 386.5 L765.0 388.8 L764.0 386.3 L763.0 386.0 L762.0 387.4 L761.0 388.3 L760.0 387.4 L759.0 390.5 L758.0 386.1 L757.0 386.0 L756.0 387.0 L755.0 387.0 L754.0 388.6 L753.0 391.6 L752.0 386.2 L751.0 386.6 L750.0 387.9 L749.0 386.0 L748.0 387.9 L747.0 385.9 L746.0 385.9 L745.0 388.2 L744.0 385.9 L743.0 386.4 L742.0 386.8 L741.0 387.5 L740.0 388.3 L739.0 386.0 L738.0 385.5 L737.0 386.6 L736.0 385.4 L735.0 386.3 L734.0 385.3 L733.0 387.5 L732.0 386.6 L731.0 387.3 L730.0 386.9 L729.0 385.3 L728.0 385.5 L727.0 385.5 L726.0 386.6 L725.0 386.7 L724.0 386.0 L723.0 388.6 L722.0 385.7 L721.0 387.4 L720.0 386.6 L719.0 385.4 L718.0 386.4 L717.0 384.9 L716.0 386.6 L715.0 387.0 L714.0 387.0 L713.0 386.9 L712.0 387.1 L711.0 385.6 L710.0 387.5 L709.0 385.7 L708.0 386.1 L707.0 385.1 L706.0 385.2 L705.0 385.8 L704.0 385.4 L703.0 385.7 L702.0 385.9 L701.0 386.2 L700.0 392.0 L699.0 386.2 L698.0 386.7 L697.0 386.3 L696.0 386.2 L695.0 386.0 L694.0 385.0 L693.0 386.9 L692.0 385.4 L691.0 385.2 L690.0 385.3 L689.0 386.7 L688.0 385.9 L687.0 385.0 L686.0 388.5 L685.0 386.4 L684.0 386.1 L683.0 387.0 L682.0 386.8 L681.0 385.6 L680.0 385.2 L679.0 387.2 L678.0 387.5 L677.0 390.4 L676.0 385.8 L675.0 385.5 L674.0 386.0 L673.0 386.9 L672.0 386.0 L671.0 386.5 L670.0 386.0 L669.0 385.6 L668.0 386.8 L667.0 387.0 L666.0 385.7 L665.0 386.0 L664.0 386.8 L663.0 385.4 L662.0 385.8 L661.0 385.9 L660.0 388.5 L659.0 385.1 L658.0 386.9 L657.0 385.8 L656.0 385.1 L655.0 385.3 L654.0 385.0 L653.0 385.3 L652.0 385.1 L651.0 389.7 L650.0 386.2 L649.0 386.2 L648.0 384.3 L647.0 388.6 L646.0 386.2 L645.0 384.8 L644.0 386.8 L643.0 396.0 L642.0 386.8 L641.0 385.8 L640.0 385.1 L639.0 384.8 L638.0 384.2 L637.0 385.8 L636.0 384.7 L635.0 384.4 L634.0 385.2 L633.0 385.5 L632.0 384.6 L631.0 384.8 L630.0 385.9 L629.0 385.1 L628.0 385.7 L627.0 385.7 L626.0 385.6 L625.0 385.0 L624.0 387.4 L623.0 386.0 L622.0 386.0 L621.0 385.3 L620.0 385.7 L619.0 385.5 L618.0 386.4 L617.0 384.5 L616.0 386.0 L615.0 386.7 L614.0 386.2 L613.0 385.9 L612.0 386.6 L611.0 385.4 L610.0 385.7 L609.0 385.9 L608.0 384.9 L607.0 385.6 L606.0 387.0 L605.0 386.1 L604.0 384.9 L603.0 385.2 L602.0 385.0 L601.0 386.3 L600.0 385.1 L599.0 386.1 L598.0 386.7 L597.0 385.9 L596.0 385.3 L595.0 386.4 L594.0 385.3 L593.0 386.4 L592.0 387.3 L591.0 386.2 L590.0 386.7 L589.0 386.0 L588.0 387.0 L587.0 385.1 L586.0 386.1 L585.0 385.4 L584.0 385.4 L583.0 385.3 L582.0 386.8 L581.0 386.8 L580.0 386.3 L579.0 386.3 L578.0 386.3 L577.0 387.6 L576.0 389.8 L575.0 386.6 L574.0 388.4 L573.0 385.3 L572.0 386.0 L571.0 391.0 L570.0 386.0 L569.0 385.2 L568.0 385.1 L567.0 387.4 L566.0 385.0 L565.0 385.5 L564.0 384.9 L563.0 385.0 L562.0 385.4 L561.0 384.9 L560.0 386.8 L559.0 385.1 L558.0 386.3 L557.0 386.9 L556.0 385.0 L555.0 385.3 L554.0 385.0 L553.0 385.6 L552.0 386.6 L551.0 385.1 L550.0 385.3 L549.0 385.5 L548.0 385.4 L547.0 387.0 L546.0 385.5 L545.0 388.4 L544.0 385.3 L543.0 390.1 L542.0 385.3 L541.0 385.5 L540.0 387.4 L539.0 386.3 L538.0 385.3 L537.0 386.9 L536.0 385.8 L535.0 386.7 L534.0 385.6 L533.0 386.9 L532.0 385.6 L531.0 386.3 L530.0 387.0 L529.0 387.4 L528.0 388.0 L527.0 385.5 L526.0 387.1 L525.0 391.9 L524.0 387.2 L523.0 385.6 L522.0 387.4 L521.0 385.6 L520.0 386.1 L519.0 386.9 L518.0 386.7 L517.0 385.6 L516.0 386.2 L515.0 387.5 L514.0 386.5 L513.0 387.9 L512.0 385.8 L511.0 385.8 L510.0 387.3 L509.0 386.8 L508.0 386.0 L507.0 387.8 L506.0 388.0 L505.0 387.9 L504.0 385.7 L503.0 385.6 L502.0 387.8 L501.0 388.0 L500.0 386.7 L499.0 386.2 L498.0 387.8 L497.0 386.8 L496.0 385.5 L495.0 385.4 L494.0 386.1 L493.0 387.9 L492.0 385.8 L491.0 386.7 L490.0 385.6 L489.0 386.1 L488.0 387.6 L487.0 386.5 L486.0 385.5 L485.0 387.6 L484.0 386.5 L483.0 385.7 L482.0 387.2 L481.0 385.8 L480.0 390.0 L479.0 385.8 L478.0 385.9 L477.0 384.9 L476.0 387.0 L475.0 385.4 L474.0 386.0 L473.0 386.6 L472.0 386.5 L471.0 386.0 L470.0 385.2 L469.0 386.8 L468.0 385.1 L467.0 384.9 L466.0 386.8 L465.0 385.8 L464.0 384.6 L463.0 388.2 L462.0 385.3 L461.0 386.5 L460.0 386.1 L459.0 385.8 L458.0 386.3 L457.0 385.6 L456.0 386.5 L455.0 385.1 L454.0 385.1 L453.0 386.5 L452.0 386.2 L451.0 386.5 L450.0 385.0 L449.0 385.4 L448.0 385.1 L447.0 385.9 L446.0 385.2 L445.0 385.9 L444.0 384.8 L443.0 384.9 L442.0 385.3 L441.0 385.9 L440.0 385.5 L439.0 386.7 L438.0 386.8 L437.0 386.3 L436.0 385.6 L435.0 387.1 L434.0 386.2 L433.0 385.4 L432.0 386.3 L431.0 386.3 L430.0 385.5 L429.0 386.1 L428.0 385.3 L427.0 386.6 L426.0 386.6 L425.0 389.6 L424.0 386.5 L423.0 386.4 L422.0 385.8 L421.0 385.4 L420.0 386.1 L419.0 386.1 L418.0 385.1 L417.0 386.6 L416.0 385.4 L415.0 386.4 L414.0 389.2 L413.0 384.9 L412.0 386.5 L411.0 386.5 L410.0 386.6 L409.0 386.2 L408.0 385.7 L407.0 386.4 L406.0 386.0 L405.0 387.2 L404.0 386.2 L403.0 386.7 L402.0 386.6 L401.0 385.8 L400.0 385.8 L399.0 387.7 L398.0 385.8 L397.0 385.1 L396.0 385.1 L395.0 384.3 L394.0 383.1 L393.0 382.7 L392.0 381.9 L391.0 381.4 Z" fill="#a97de2"/><rect x="391" y="341" width="628" height="2.4" fill="#c6b3aa"/><rect x="391" y="353" width="628" height="1.5" fill="#8e6c9a"/><rect x="391" y="367" width="628" height="2.4" fill="#8b97c6"/><path d="M391.5 406 C 391.8 345, 397 306, 414 303" stroke="#c2a858" stroke-width="2" fill="none"/><path d="M414 303 V322" stroke="#9a8a80" stroke-width="1"/><rect x="389" y="282" width="2.2" height="125" fill="#b9b1c9"/></svg>
<div style="left:394px;top:287.00px;font-size:13px;line-height:13px;color:#dcd2e8;white-space:nowrap;-webkit-text-stroke:0.2px #dcd2e8;letter-spacing:0.07px;">269584__loffy__ambient-poolhall-school-background-noise-children-adolescents-talking 48000 1</div>
<div style="left:965.5px;top:287.00px;font-size:13px;line-height:13px;color:#dcd2e8;white-space:nowrap;-webkit-text-stroke:0.2px #dcd2e8;">Pan</div>
<svg style="left:998px;top:287px;" width="12" height="9" viewBox="0 0 12 9"><path d="M1.5 2 L6 6.5 L10.5 2" stroke="#d8d0e0" stroke-width="1.6" fill="none"/></svg>
<svg style="left:402.5px;top:382.7px;" width="16" height="13" viewBox="0 0 16 13"><rect x="1.10" y="8.20" width="1.8" height="3.8" fill="#f0eaf8"/><rect x="4.70" y="6.40" width="1.8" height="5.6" fill="#f0eaf8"/><rect x="8.30" y="5.20" width="1.8" height="6.8" fill="#f0eaf8"/><rect x="11.90" y="2.70" width="1.8" height="9.3" fill="#f0eaf8"/></svg>
<svg style="left:0;top:0" width="1024" height="706" viewBox="0 0 1024 706"><rect x="324" y="412" width="76" height="125.5" fill="#4b4313"/><path d="M339.0 453.2 L340.0 452.0 L341.0 453.1 L342.0 451.6 L343.0 452.3 L344.0 453.6 L345.0 452.1 L346.0 451.6 L347.0 453.0 L348.0 451.1 L349.0 451.4 L350.0 453.5 L351.0 452.4 L352.0 451.2 L353.0 453.2 L354.0 453.3 L355.0 452.5 L356.0 452.0 L357.0 451.8 L358.0 448.7 L359.0 448.2 L360.0 446.5 L361.0 447.4 L362.0 449.0 L363.0 451.4 L364.0 449.8 L365.0 450.4 L366.0 452.6 L367.0 452.5 L368.0 451.1 L369.0 453.5 L370.0 451.8 L371.0 452.4 L372.0 452.2 L373.0 453.0 L374.0 452.2 L375.0 453.1 L376.0 452.7 L377.0 452.7 L378.0 452.8 L379.0 453.4 L380.0 451.7 L381.0 451.9 L382.0 451.4 L383.0 452.6 L384.0 451.2 L385.0 451.4 L386.0 452.7 L387.0 451.4 L388.0 453.4 L389.0 451.7 L390.0 451.5 L391.0 453.0 L392.0 452.6 L393.0 453.4 L394.0 451.4 L395.0 451.7 L396.0 453.0 L397.0 452.3 L398.0 453.5 L399.0 451.5 L400.0 451.4 L400.0 463.1 L399.0 463.6 L398.0 462.1 L397.0 463.4 L396.0 464.0 L395.0 462.8 L394.0 464.1 L393.0 462.4 L392.0 462.0 L391.0 462.3 L390.0 461.7 L389.0 462.8 L388.0 463.6 L387.0 462.0 L386.0 462.2 L385.0 462.8 L384.0 463.1 L383.0 464.1 L382.0 464.0 L381.0 463.3 L380.0 462.5 L379.0 463.6 L378.0 461.9 L377.0 463.1 L376.0 463.9 L375.0 462.0 L374.0 463.2 L373.0 463.1 L372.0 463.5 L371.0 462.8 L370.0 464.1 L369.0 461.8 L368.0 462.6 L367.0 462.6 L366.0 462.5 L365.0 464.7 L364.0 463.4 L363.0 465.1 L362.0 466.8 L361.0 467.8 L360.0 468.4 L359.0 464.8 L358.0 464.2 L357.0 462.9 L356.0 463.6 L355.0 463.0 L354.0 463.9 L353.0 463.6 L352.0 462.5 L351.0 461.9 L350.0 462.4 L349.0 463.1 L348.0 463.4 L347.0 461.7 L346.0 462.2 L345.0 461.8 L344.0 462.5 L343.0 462.2 L342.0 462.9 L341.0 463.6 L340.0 462.8 L339.0 463.3 Z" fill="#e6c300"/><path d="M339.0 504.6 L340.0 506.9 L341.0 506.5 L342.0 505.4 L343.0 504.8 L344.0 504.6 L345.0 505.5 L346.0 505.3 L347.0 505.2 L348.0 504.8 L349.0 506.2 L350.0 504.9 L351.0 504.7 L352.0 504.6 L353.0 505.3 L354.0 506.4 L355.0 506.2 L356.0 503.7 L357.0 505.4 L358.0 502.9 L359.0 504.5 L360.0 504.0 L361.0 501.9 L362.0 503.1 L363.0 502.0 L364.0 504.6 L365.0 505.6 L366.0 505.6 L367.0 505.3 L368.0 506.8 L369.0 506.1 L370.0 506.0 L371.0 504.6 L372.0 506.0 L373.0 504.8 L374.0 505.6 L375.0 506.2 L376.0 506.5 L377.0 505.7 L378.0 505.4 L379.0 505.3 L380.0 506.0 L381.0 504.7 L382.0 504.9 L383.0 505.7 L384.0 504.5 L385.0 505.8 L386.0 505.4 L387.0 505.0 L388.0 505.5 L389.0 507.0 L390.0 505.4 L391.0 506.6 L392.0 505.9 L393.0 506.9 L394.0 506.1 L395.0 506.5 L396.0 504.8 L397.0 506.3 L398.0 505.8 L399.0 506.1 L400.0 504.7 L400.0 517.1 L399.0 516.8 L398.0 515.5 L397.0 515.2 L396.0 515.5 L395.0 515.6 L394.0 515.3 L393.0 517.4 L392.0 515.7 L391.0 516.7 L390.0 515.9 L389.0 516.3 L388.0 517.4 L387.0 517.0 L386.0 515.9 L385.0 516.8 L384.0 516.9 L383.0 516.5 L382.0 516.2 L381.0 516.2 L380.0 517.1 L379.0 515.1 L378.0 515.5 L377.0 517.0 L376.0 515.1 L375.0 515.9 L374.0 515.9 L373.0 515.4 L372.0 515.2 L371.0 516.3 L370.0 517.3 L369.0 516.1 L368.0 517.5 L367.0 516.3 L366.0 516.1 L365.0 517.3 L364.0 518.0 L363.0 517.8 L362.0 519.9 L361.0 520.1 L360.0 521.9 L359.0 519.4 L358.0 517.4 L357.0 518.8 L356.0 517.4 L355.0 517.0 L354.0 517.4 L353.0 516.5 L352.0 516.4 L351.0 516.9 L350.0 516.5 L349.0 515.5 L348.0 516.5 L347.0 515.1 L346.0 517.3 L345.0 517.3 L344.0 515.8 L343.0 515.6 L342.0 515.9 L341.0 515.3 L340.0 517.5 L339.0 515.4 Z" fill="#e6c300"/><path d="M327 449 C 329 452, 330 455, 330.5 457.6 C 330 460, 329 463, 327 466 Z M327 503 C 329 506, 330 509, 330.5 511.2 C 330 514, 329 517, 327 520 Z" fill="#e6c300"/><path d="M329 457.8 H336 M329 511.3 H336" stroke="#b0a878" stroke-width="1.2"/><rect x="335.2" y="412" width="2" height="125.5" fill="#262210"/><rect x="326" y="470.5" width="74" height="2.6" fill="#c9c197"/><rect x="326" y="484" width="74" height="3" fill="#a9b6ae"/><rect x="325" y="412" width="2" height="125.5" fill="#cdc594"/><rect x="337.2" y="412" width="2" height="125.5" fill="#e2e0d0"/></svg>
<div style="left:342px;top:416.80px;font-size:13px;line-height:13px;color:#e2dbb6;white-space:nowrap;">26...</div>
<svg style="left:378px;top:417px;" width="14" height="9" viewBox="0 0 14 9"><path d="M1.5 2 L6.5 7 L11.5 2" stroke="#e0dac0" stroke-width="1.6" fill="none"/></svg>
<svg style="left:351px;top:511.7px;" width="16" height="13" viewBox="0 0 16 13"><rect x="1.10" y="8.20" width="1.8" height="3.8" fill="#f4f0dc"/><rect x="4.70" y="6.40" width="1.8" height="5.6" fill="#f4f0dc"/><rect x="8.30" y="5.20" width="1.8" height="6.8" fill="#f4f0dc"/><rect x="11.90" y="2.70" width="1.8" height="9.3" fill="#f4f0dc"/></svg>
<svg style="left:0;top:0" width="1024" height="706" viewBox="0 0 1024 706"><rect x="662" y="542" width="362" height="125" fill="#1a2f31"/><path d="M664 587.5 H684 M664 641 H684" stroke="#4cb8c0" stroke-width="1.2"/><path d="M683.5 577.0 L684.0 573.9 L684.5 574.9 L685.0 576.8 L685.5 578.6 L686.0 580.1 L686.5 582.0 L687.0 581.4 L687.5 583.0 L688.0 583.4 L688.5 583.2 L689.0 583.1 L689.5 583.7 L690.0 583.6 L690.5 584.0 L691.0 582.6 L691.5 582.5 L692.0 581.8 L692.5 581.1 L693.0 580.5 L693.5 580.0 L694.0 577.6 L694.5 575.8 L695.0 575.5 L695.5 577.2 L696.0 578.7 L696.5 581.0 L697.0 581.9 L697.5 581.6 L698.0 582.4 L698.5 583.7 L699.0 583.3 L699.5 584.4 L700.0 583.3 L700.5 584.3 L701.0 583.9 L701.5 584.0 L702.0 583.6 L702.5 582.3 L703.0 582.2 L703.5 581.8 L704.0 580.0 L704.5 579.0 L705.0 576.7 L705.5 575.0 L706.0 577.9 L706.5 579.4 L707.0 580.7 L707.5 581.0 L708.0 582.6 L708.5 582.3 L709.0 583.7 L709.5 583.7 L710.0 583.9 L710.5 584.4 L711.0 582.9 L711.5 584.0 L712.0 583.8 L712.5 582.9 L713.0 583.3 L713.5 581.8 L714.0 581.2 L714.5 580.6 L715.0 579.0 L715.5 578.0 L716.0 576.9 L716.5 578.4 L717.0 579.5 L717.5 581.2 L718.0 581.8 L718.5 582.5 L719.0 582.2 L719.5 583.7 L720.0 582.7 L720.5 583.9 L721.0 583.4 L721.5 583.0 L722.0 583.1 L722.5 583.6 L723.0 583.8 L723.5 583.7 L724.0 581.8 L724.5 581.4 L725.0 580.3 L725.5 580.0 L726.0 577.8 L726.5 576.0 L727.0 577.8 L727.5 579.4 L728.0 580.8 L728.5 580.7 L729.0 582.3 L729.5 582.2 L730.0 583.0 L730.5 584.1 L731.0 583.0 L731.5 583.0 L732.0 584.1 L732.5 583.2 L733.0 583.3 L733.5 584.0 L734.0 583.9 L734.5 581.9 L735.0 582.6 L735.5 581.6 L736.0 580.8 L736.5 579.1 L737.0 576.8 L737.5 577.5 L738.0 579.3 L738.5 580.7 L739.0 580.3 L739.5 581.8 L740.0 582.9 L740.5 582.4 L741.0 582.6 L741.5 584.0 L742.0 582.9 L742.5 583.4 L743.0 584.1 L743.5 583.9 L744.0 584.1 L744.5 582.4 L745.0 582.5 L745.5 581.4 L746.0 581.7 L746.5 580.7 L747.0 578.5 L747.5 577.9 L748.0 576.4 L748.5 578.6 L749.0 580.0 L749.5 580.7 L750.0 582.3 L750.5 582.7 L751.0 582.9 L751.5 583.9 L752.0 583.1 L752.5 582.9 L753.0 583.3 L753.5 583.2 L754.0 584.3 L754.5 582.8 L755.0 582.6 L755.5 582.2 L756.0 582.6 L756.5 581.1 L757.0 580.1 L757.5 579.1 L758.0 578.1 L758.5 576.0 L759.0 578.2 L759.5 578.5 L760.0 580.4 L760.5 580.9 L761.0 582.4 L761.5 583.2 L762.0 583.0 L762.5 583.4 L763.0 583.9 L763.5 584.3 L764.0 583.2 L764.5 583.8 L765.0 584.0 L765.5 583.4 L766.0 582.9 L766.5 582.4 L767.0 582.6 L767.5 581.5 L768.0 580.8 L768.5 578.9 L769.0 578.7 L769.5 579.5 L770.0 580.0 L770.5 581.5 L771.0 581.2 L771.5 582.1 L772.0 583.1 L772.5 582.9 L773.0 582.9 L773.5 582.9 L774.0 584.2 L774.5 584.2 L775.0 583.3 L775.5 583.3 L776.0 583.7 L776.5 583.8 L777.0 583.6 L777.5 581.9 L778.0 582.2 L778.5 580.3 L779.0 579.6 L779.5 578.7 L780.0 578.9 L780.5 579.2 L781.0 580.5 L781.5 582.3 L782.0 583.0 L782.5 582.1 L783.0 583.1 L783.5 584.1 L784.0 584.0 L784.5 584.5 L785.0 583.8 L785.5 583.5 L786.0 583.1 L786.5 583.8 L787.0 583.6 L787.5 583.2 L788.0 581.8 L788.5 580.8 L789.0 580.6 L789.5 579.0 L790.0 578.3 L790.5 577.8 L791.0 579.3 L791.5 579.9 L792.0 580.6 L792.5 582.5 L793.0 582.4 L793.5 583.0 L794.0 583.3 L794.5 583.6 L795.0 584.0 L795.5 583.2 L796.0 583.7 L796.5 583.8 L797.0 584.3 L797.5 583.2 L798.0 582.5 L798.5 581.8 L799.0 581.5 L799.5 580.9 L800.0 580.7 L800.5 579.1 L801.0 578.2 L801.5 579.3 L802.0 580.4 L802.5 581.1 L803.0 581.3 L803.5 582.6 L804.0 582.8 L804.5 583.1 L805.0 583.3 L805.5 583.0 L806.0 583.1 L806.5 583.2 L807.0 583.9 L807.5 583.2 L808.0 583.3 L808.5 582.6 L809.0 582.7 L809.5 582.1 L810.0 581.4 L810.5 580.1 L811.0 579.3 L811.5 577.6 L812.0 578.3 L812.5 580.3 L813.0 580.2 L813.5 582.4 L814.0 582.3 L814.5 582.9 L815.0 583.8 L815.5 583.2 L816.0 584.0 L816.5 584.1 L817.0 584.2 L817.5 583.1 L818.0 584.1 L818.5 583.2 L819.0 584.1 L819.5 582.8 L820.0 582.7 L820.5 581.6 L821.0 581.2 L821.5 579.9 L822.0 579.0 L822.5 579.5 L823.0 580.5 L823.5 582.0 L824.0 582.3 L824.5 583.0 L825.0 582.7 L825.5 583.9 L826.0 583.5 L826.5 584.1 L827.0 583.5 L827.5 584.2 L828.0 583.4 L828.5 582.9 L829.0 583.8 L829.5 583.9 L830.0 583.7 L830.5 582.6 L831.0 582.6 L831.5 580.8 L832.0 580.4 L832.5 579.1 L833.0 578.7 L833.5 579.2 L834.0 580.5 L834.5 582.0 L835.0 582.2 L835.5 583.0 L836.0 582.8 L836.5 582.8 L837.0 584.2 L837.5 584.4 L838.0 584.3 L838.5 583.2 L839.0 584.4 L839.5 583.0 L840.0 583.7 L840.5 583.7 L841.0 582.4 L841.5 581.8 L842.0 581.2 L842.5 580.4 L843.0 579.3 L843.5 579.1 L844.0 579.4 L844.5 580.4 L845.0 581.4 L845.5 582.4 L846.0 583.2 L846.5 583.2 L847.0 583.0 L847.5 583.2 L848.0 584.1 L848.5 584.3 L849.0 583.1 L849.5 584.4 L850.0 579.5 L850.5 580.0 L851.0 580.1 L851.5 578.8 L852.0 578.1 L852.5 576.3 L853.0 575.6 L853.5 573.6 L854.0 573.0 L854.5 572.9 L855.0 575.5 L855.5 575.9 L856.0 577.9 L856.5 578.9 L857.0 579.4 L857.5 579.2 L858.0 579.9 L858.5 579.9 L859.0 579.5 L859.5 579.7 L860.0 580.2 L860.5 579.6 L861.0 580.4 L861.5 579.4 L862.0 579.0 L862.5 578.6 L863.0 576.4 L863.5 575.6 L864.0 573.8 L864.5 571.4 L865.0 572.1 L865.5 573.9 L866.0 576.1 L866.5 576.9 L867.0 577.3 L867.5 578.4 L868.0 578.8 L868.5 580.5 L869.0 580.1 L869.5 579.9 L870.0 580.0 L870.5 579.7 L871.0 580.4 L871.5 579.3 L872.0 580.2 L872.5 578.8 L873.0 577.7 L873.5 577.4 L874.0 576.7 L874.5 574.3 L875.0 573.2 L875.5 571.4 L876.0 574.4 L876.5 574.9 L877.0 577.4 L877.5 578.8 L878.0 578.3 L878.5 579.9 L879.0 579.8 L879.5 579.6 L880.0 580.1 L880.5 579.8 L881.0 580.1 L881.5 579.6 L882.0 580.8 L882.5 579.6 L883.0 579.7 L883.5 578.5 L884.0 578.3 L884.5 577.0 L885.0 577.0 L885.5 574.9 L886.0 574.4 L886.5 574.7 L887.0 575.9 L887.5 577.6 L888.0 578.5 L888.5 578.8 L889.0 579.9 L889.5 580.5 L890.0 580.4 L890.5 580.4 L891.0 581.1 L891.5 579.8 L892.0 580.4 L892.5 580.6 L893.0 579.6 L893.5 579.3 L894.0 578.9 L894.5 578.9 L895.0 578.2 L895.5 577.1 L896.0 575.9 L896.5 574.6 L897.0 576.1 L897.5 577.0 L898.0 577.5 L898.5 577.8 L899.0 579.3 L899.5 579.5 L900.0 579.7 L900.5 580.1 L901.0 579.8 L901.5 581.3 L902.0 579.9 L902.5 581.4 L903.0 580.6 L903.5 580.5 L904.0 579.5 L904.5 579.3 L905.0 578.7 L905.5 578.2 L906.0 576.1 L906.5 575.5 L907.0 573.7 L907.5 574.6 L908.0 575.8 L908.5 576.5 L909.0 577.8 L909.5 579.2 L910.0 580.0 L910.5 579.5 L911.0 579.9 L911.5 580.8 L912.0 581.2 L912.5 580.9 L913.0 579.9 L913.5 580.7 L914.0 580.4 L914.5 579.7 L915.0 579.7 L915.5 578.2 L916.0 577.4 L916.5 577.3 L917.0 575.6 L917.5 573.3 L918.0 573.5 L918.5 575.1 L919.0 576.9 L919.5 577.5 L920.0 578.6 L920.5 580.0 L921.0 580.4 L921.5 580.8 L922.0 580.9 L922.5 581.0 L923.0 581.3 L923.5 580.5 L924.0 581.5 L924.5 580.3 L925.0 579.9 L925.5 580.3 L926.0 579.8 L926.5 579.3 L927.0 578.5 L927.5 576.4 L928.0 575.1 L928.5 574.6 L929.0 575.0 L929.5 577.8 L930.0 578.4 L930.5 579.6 L931.0 579.3 L931.5 580.4 L932.0 580.5 L932.5 581.0 L933.0 581.3 L933.5 580.6 L934.0 581.6 L934.5 581.5 L935.0 581.2 L935.5 581.3 L936.0 580.4 L936.5 579.6 L937.0 578.9 L937.5 578.3 L938.0 576.6 L938.5 575.6 L939.0 574.1 L939.5 575.1 L940.0 576.7 L940.5 578.0 L941.0 578.9 L941.5 579.0 L942.0 580.1 L942.5 580.5 L943.0 581.3 L943.5 580.9 L944.0 581.4 L944.5 581.1 L945.0 581.6 L945.5 580.7 L946.0 580.6 L946.5 580.0 L947.0 580.7 L947.5 579.0 L948.0 577.7 L948.5 576.7 L949.0 575.5 L949.5 574.8 L950.0 575.4 L950.5 576.5 L951.0 578.2 L951.5 579.0 L952.0 578.9 L952.5 580.8 L953.0 579.8 L953.5 581.0 L954.0 580.4 L954.5 580.6 L955.0 581.2 L955.5 581.2 L956.0 581.7 L956.5 581.6 L957.0 581.4 L957.5 580.8 L958.0 579.7 L958.5 579.3 L959.0 577.4 L959.5 576.5 L960.0 576.0 L960.5 575.6 L961.0 576.8 L961.5 577.3 L962.0 579.0 L962.5 579.7 L963.0 579.3 L963.5 581.3 L964.0 581.1 L964.5 580.6 L965.0 580.8 L965.5 581.2 L966.0 580.9 L966.5 581.7 L967.0 581.0 L967.5 580.4 L968.0 581.1 L968.5 579.9 L969.0 579.5 L969.5 578.7 L970.0 576.1 L970.5 574.9 L971.0 574.2 L971.5 575.3 L972.0 577.6 L972.5 578.2 L973.0 578.5 L973.5 580.5 L974.0 581.1 L974.5 581.5 L975.0 580.7 L975.5 580.8 L976.0 581.8 L976.5 580.8 L977.0 582.0 L977.5 580.9 L978.0 580.2 L978.5 580.6 L979.0 579.3 L979.5 578.4 L980.0 578.2 L980.5 576.2 L981.0 574.4 L981.5 573.1 L982.0 574.8 L982.5 575.6 L983.0 577.3 L983.5 578.5 L984.0 580.1 L984.5 580.9 L985.0 581.0 L985.5 580.9 L986.0 580.5 L986.5 582.1 L987.0 581.7 L987.5 581.5 L988.0 580.5 L988.5 581.3 L989.0 580.7 L989.5 580.1 L990.0 579.3 L990.5 578.6 L991.0 577.0 L991.5 575.0 L992.0 572.7 L992.5 573.4 L993.0 576.1 L993.5 577.4 L994.0 578.4 L994.5 580.0 L995.0 580.7 L995.5 580.7 L996.0 581.2 L996.5 581.2 L997.0 581.6 L997.5 581.3 L998.0 581.0 L998.5 581.0 L999.0 580.9 L999.5 581.4 L1000.0 580.9 L1000.5 579.7 L1001.0 578.3 L1001.5 577.5 L1002.0 576.2 L1002.5 574.2 L1003.0 574.2 L1003.5 575.9 L1004.0 577.3 L1004.5 578.1 L1005.0 578.9 L1005.5 580.8 L1006.0 581.0 L1006.5 580.4 L1007.0 582.0 L1007.5 581.3 L1008.0 582.0 L1008.5 582.2 L1009.0 581.2 L1009.5 581.5 L1010.0 581.5 L1010.5 580.8 L1011.0 580.3 L1011.5 578.3 L1012.0 577.5 L1012.5 576.3 L1013.0 573.8 L1013.5 572.6 L1014.0 573.9 L1014.5 576.5 L1015.0 578.5 L1015.5 579.6 L1016.0 580.0 L1016.5 581.1 L1017.0 581.1 L1017.5 580.8 L1018.0 581.3 L1018.5 581.8 L1019.0 580.9 L1019.5 582.1 L1020.0 581.4 L1020.5 581.3 L1021.0 579.8 L1021.5 580.6 L1022.0 579.0 L1022.5 578.2 L1023.0 575.4 L1023.5 574.9 L1024.0 571.2 L1024.0 604.0 L1023.5 601.2 L1023.0 599.0 L1022.5 597.2 L1022.0 597.0 L1021.5 596.2 L1021.0 595.2 L1020.5 594.9 L1020.0 593.5 L1019.5 593.8 L1019.0 593.9 L1018.5 593.7 L1018.0 593.1 L1017.5 593.3 L1017.0 595.0 L1016.5 595.3 L1016.0 594.7 L1015.5 596.5 L1015.0 598.1 L1014.5 598.7 L1014.0 601.2 L1013.5 603.4 L1013.0 602.0 L1012.5 599.7 L1012.0 598.1 L1011.5 596.5 L1011.0 595.2 L1010.5 594.2 L1010.0 594.8 L1009.5 594.8 L1009.0 594.4 L1008.5 594.5 L1008.0 593.9 L1007.5 593.5 L1007.0 594.6 L1006.5 594.5 L1006.0 595.2 L1005.5 595.8 L1005.0 595.7 L1004.5 597.3 L1004.0 598.9 L1003.5 600.0 L1003.0 602.4 L1002.5 601.5 L1002.0 600.0 L1001.5 598.7 L1001.0 597.7 L1000.5 595.5 L1000.0 594.7 L999.5 594.7 L999.0 594.4 L998.5 593.9 L998.0 593.2 L997.5 593.3 L997.0 593.5 L996.5 594.1 L996.0 594.9 L995.5 594.2 L995.0 595.7 L994.5 595.6 L994.0 596.5 L993.5 597.9 L993.0 599.4 L992.5 601.4 L992.0 602.4 L991.5 600.8 L991.0 598.1 L990.5 597.8 L990.0 596.1 L989.5 594.9 L989.0 594.8 L988.5 594.5 L988.0 594.5 L987.5 594.2 L987.0 593.7 L986.5 594.8 L986.0 593.7 L985.5 594.2 L985.0 594.7 L984.5 595.3 L984.0 596.2 L983.5 596.7 L983.0 598.0 L982.5 599.5 L982.0 601.2 L981.5 602.2 L981.0 599.8 L980.5 599.4 L980.0 597.0 L979.5 596.6 L979.0 596.3 L978.5 594.2 L978.0 594.6 L977.5 594.7 L977.0 594.0 L976.5 594.8 L976.0 594.9 L975.5 593.8 L975.0 594.6 L974.5 594.0 L974.0 594.2 L973.5 595.3 L973.0 596.8 L972.5 597.2 L972.0 598.2 L971.5 600.0 L971.0 601.3 L970.5 599.9 L970.0 598.8 L969.5 597.1 L969.0 596.7 L968.5 596.2 L968.0 595.7 L967.5 595.4 L967.0 594.1 L966.5 594.5 L966.0 594.8 L965.5 593.5 L965.0 594.5 L964.5 594.2 L964.0 594.2 L963.5 594.7 L963.0 595.7 L962.5 596.1 L962.0 597.3 L961.5 598.3 L961.0 598.3 L960.5 600.3 L960.0 600.3 L959.5 599.0 L959.0 597.6 L958.5 597.2 L958.0 595.5 L957.5 594.6 L957.0 594.0 L956.5 594.8 L956.0 594.3 L955.5 594.5 L955.0 595.0 L954.5 594.5 L954.0 594.3 L953.5 594.7 L953.0 595.1 L952.5 596.1 L952.0 596.1 L951.5 597.1 L951.0 598.0 L950.5 599.0 L950.0 601.1 L949.5 601.5 L949.0 599.9 L948.5 597.6 L948.0 596.4 L947.5 595.6 L947.0 595.2 L946.5 595.3 L946.0 595.2 L945.5 594.6 L945.0 594.2 L944.5 594.2 L944.0 594.4 L943.5 594.1 L943.0 594.5 L942.5 594.3 L942.0 594.5 L941.5 596.0 L941.0 596.3 L940.5 597.5 L940.0 598.6 L939.5 599.6 L939.0 600.9 L938.5 599.5 L938.0 597.8 L937.5 596.8 L937.0 595.9 L936.5 595.2 L936.0 595.8 L935.5 594.2 L935.0 593.9 L934.5 594.2 L934.0 594.8 L933.5 593.7 L933.0 595.0 L932.5 594.1 L932.0 594.1 L931.5 595.4 L931.0 596.6 L930.5 596.0 L930.0 597.5 L929.5 597.7 L929.0 599.6 L928.5 601.4 L928.0 599.6 L927.5 598.8 L927.0 597.6 L926.5 596.2 L926.0 595.3 L925.5 595.4 L925.0 595.6 L924.5 595.0 L924.0 594.4 L923.5 594.6 L923.0 595.2 L922.5 594.8 L922.0 594.7 L921.5 594.5 L921.0 595.7 L920.5 595.8 L920.0 596.9 L919.5 598.4 L919.0 599.0 L918.5 599.9 L918.0 602.6 L917.5 601.1 L917.0 600.3 L916.5 598.6 L916.0 598.1 L915.5 596.7 L915.0 595.0 L914.5 595.0 L914.0 594.5 L913.5 595.4 L913.0 594.3 L912.5 595.3 L912.0 594.7 L911.5 595.4 L911.0 594.3 L910.5 594.7 L910.0 595.8 L909.5 596.7 L909.0 596.6 L908.5 598.8 L908.0 600.1 L907.5 600.9 L907.0 600.8 L906.5 599.7 L906.0 597.9 L905.5 598.2 L905.0 596.6 L904.5 596.7 L904.0 594.7 L903.5 595.4 L903.0 595.6 L902.5 594.4 L902.0 594.3 L901.5 594.2 L901.0 595.2 L900.5 595.0 L900.0 595.2 L899.5 595.5 L899.0 596.5 L898.5 596.4 L898.0 597.4 L897.5 599.4 L897.0 599.6 L896.5 600.9 L896.0 599.0 L895.5 598.1 L895.0 597.8 L894.5 597.1 L894.0 595.8 L893.5 596.2 L893.0 595.4 L892.5 595.7 L892.0 594.7 L891.5 595.2 L891.0 595.1 L890.5 595.7 L890.0 595.2 L889.5 594.9 L889.0 595.8 L888.5 596.9 L888.0 596.9 L887.5 597.8 L887.0 598.8 L886.5 600.5 L886.0 601.3 L885.5 599.4 L885.0 598.6 L884.5 597.8 L884.0 596.2 L883.5 596.7 L883.0 595.6 L882.5 595.4 L882.0 595.5 L881.5 594.6 L881.0 595.4 L880.5 595.4 L880.0 595.1 L879.5 595.0 L879.0 596.0 L878.5 596.5 L878.0 596.9 L877.5 597.2 L877.0 599.1 L876.5 600.2 L876.0 601.0 L875.5 603.8 L875.0 602.5 L874.5 600.6 L874.0 598.8 L873.5 598.5 L873.0 596.6 L872.5 596.4 L872.0 595.2 L871.5 595.4 L871.0 595.1 L870.5 595.3 L870.0 594.8 L869.5 595.4 L869.0 596.0 L868.5 595.5 L868.0 596.4 L867.5 597.2 L867.0 598.2 L866.5 599.2 L866.0 600.8 L865.5 601.5 L865.0 604.6 L864.5 604.1 L864.0 602.3 L863.5 599.9 L863.0 598.4 L862.5 598.0 L862.0 596.8 L861.5 595.3 L861.0 595.3 L860.5 594.9 L860.0 595.8 L859.5 595.4 L859.0 595.5 L858.5 595.1 L858.0 594.8 L857.5 596.5 L857.0 596.0 L856.5 597.0 L856.0 597.7 L855.5 599.6 L855.0 600.9 L854.5 601.9 L854.0 603.0 L853.5 600.7 L853.0 599.1 L852.5 597.7 L852.0 597.8 L851.5 596.1 L851.0 596.1 L850.5 596.4 L850.0 595.3 L849.5 591.1 L849.0 592.3 L848.5 592.4 L848.0 592.5 L847.5 592.2 L847.0 592.4 L846.5 592.6 L846.0 593.3 L845.5 593.1 L845.0 593.2 L844.5 594.9 L844.0 595.6 L843.5 597.7 L843.0 595.4 L842.5 595.6 L842.0 593.8 L841.5 593.8 L841.0 593.1 L840.5 591.6 L840.0 591.4 L839.5 591.1 L839.0 591.0 L838.5 592.4 L838.0 591.6 L837.5 591.5 L837.0 592.1 L836.5 591.2 L836.0 591.7 L835.5 593.2 L835.0 593.7 L834.5 593.5 L834.0 595.0 L833.5 594.7 L833.0 597.2 L832.5 595.7 L832.0 594.5 L831.5 594.0 L831.0 592.9 L830.5 592.6 L830.0 592.2 L829.5 592.4 L829.0 592.4 L828.5 591.9 L828.0 592.2 L827.5 591.0 L827.0 592.3 L826.5 591.1 L826.0 591.3 L825.5 591.9 L825.0 592.1 L824.5 593.1 L824.0 593.7 L823.5 594.3 L823.0 594.2 L822.5 595.4 L822.0 596.1 L821.5 594.7 L821.0 593.5 L820.5 592.8 L820.0 593.2 L819.5 592.1 L819.0 592.7 L818.5 592.4 L818.0 592.5 L817.5 591.4 L817.0 592.2 L816.5 591.8 L816.0 591.9 L815.5 592.4 L815.0 592.4 L814.5 592.9 L814.0 592.8 L813.5 594.2 L813.0 594.2 L812.5 595.1 L812.0 597.0 L811.5 597.3 L811.0 596.8 L810.5 594.2 L810.0 593.8 L809.5 593.7 L809.0 592.0 L808.5 592.3 L808.0 591.5 L807.5 592.4 L807.0 591.3 L806.5 591.9 L806.0 592.1 L805.5 592.2 L805.0 592.1 L804.5 591.9 L804.0 592.6 L803.5 593.2 L803.0 593.8 L802.5 594.5 L802.0 595.7 L801.5 596.1 L801.0 596.7 L800.5 596.2 L800.0 594.5 L799.5 594.9 L799.0 593.2 L798.5 592.7 L798.0 592.4 L797.5 592.7 L797.0 591.5 L796.5 591.3 L796.0 591.9 L795.5 592.0 L795.0 591.6 L794.5 591.8 L794.0 591.3 L793.5 592.2 L793.0 592.6 L792.5 593.5 L792.0 595.1 L791.5 596.2 L791.0 597.1 L790.5 598.7 L790.0 596.9 L789.5 596.0 L789.0 595.4 L788.5 593.9 L788.0 593.6 L787.5 592.9 L787.0 592.3 L786.5 592.0 L786.0 591.3 L785.5 591.9 L785.0 590.9 L784.5 591.2 L784.0 592.2 L783.5 591.6 L783.0 592.0 L782.5 591.9 L782.0 593.7 L781.5 593.4 L781.0 594.3 L780.5 595.2 L780.0 597.3 L779.5 596.8 L779.0 595.9 L778.5 593.8 L778.0 594.3 L777.5 593.2 L777.0 593.3 L776.5 592.5 L776.0 591.9 L775.5 592.1 L775.0 591.0 L774.5 591.8 L774.0 591.3 L773.5 591.9 L773.0 592.5 L772.5 592.3 L772.0 592.8 L771.5 593.5 L771.0 593.3 L770.5 594.8 L770.0 596.0 L769.5 595.9 L769.0 597.3 L768.5 596.5 L768.0 594.9 L767.5 593.5 L767.0 593.2 L766.5 593.0 L766.0 592.2 L765.5 592.0 L765.0 591.0 L764.5 591.9 L764.0 591.5 L763.5 591.3 L763.0 591.2 L762.5 591.2 L762.0 592.0 L761.5 591.8 L761.0 592.9 L760.5 593.9 L760.0 595.0 L759.5 596.7 L759.0 596.9 L758.5 599.3 L758.0 596.8 L757.5 595.5 L757.0 595.2 L756.5 594.5 L756.0 593.7 L755.5 591.8 L755.0 591.6 L754.5 591.6 L754.0 591.8 L753.5 591.4 L753.0 592.5 L752.5 591.2 L752.0 591.2 L751.5 592.1 L751.0 593.1 L750.5 593.5 L750.0 594.0 L749.5 594.0 L749.0 595.1 L748.5 596.4 L748.0 599.0 L747.5 597.8 L747.0 595.9 L746.5 595.6 L746.0 593.8 L745.5 593.1 L745.0 592.9 L744.5 592.1 L744.0 591.6 L743.5 591.4 L743.0 591.8 L742.5 592.0 L742.0 591.8 L741.5 592.0 L741.0 591.4 L740.5 593.1 L740.0 592.1 L739.5 593.4 L739.0 594.0 L738.5 594.6 L738.0 596.9 L737.5 598.2 L737.0 597.6 L736.5 597.2 L736.0 595.9 L735.5 594.6 L735.0 592.8 L734.5 592.6 L734.0 591.9 L733.5 592.6 L733.0 591.1 L732.5 590.9 L732.0 592.2 L731.5 591.6 L731.0 591.9 L730.5 591.6 L730.0 591.8 L729.5 592.6 L729.0 593.6 L728.5 594.8 L728.0 595.9 L727.5 595.9 L727.0 598.2 L726.5 599.3 L726.0 597.2 L725.5 595.3 L725.0 594.3 L724.5 593.8 L724.0 592.5 L723.5 591.9 L723.0 592.4 L722.5 592.6 L722.0 592.0 L721.5 591.5 L721.0 592.2 L720.5 591.3 L720.0 592.4 L719.5 591.9 L719.0 591.8 L718.5 593.7 L718.0 593.9 L717.5 595.1 L717.0 595.6 L716.5 597.7 L716.0 598.5 L715.5 597.1 L715.0 596.5 L714.5 594.1 L714.0 594.5 L713.5 592.3 L713.0 591.7 L712.5 592.0 L712.0 592.6 L711.5 592.3 L711.0 592.3 L710.5 591.4 L710.0 592.0 L709.5 592.0 L709.0 592.4 L708.5 592.7 L708.0 594.0 L707.5 594.2 L707.0 595.6 L706.5 596.9 L706.0 597.5 L705.5 600.7 L705.0 598.2 L704.5 597.6 L704.0 595.1 L703.5 594.2 L703.0 593.4 L702.5 592.7 L702.0 591.9 L701.5 592.0 L701.0 591.1 L700.5 591.9 L700.0 591.3 L699.5 591.0 L699.0 591.2 L698.5 592.7 L698.0 593.1 L697.5 593.7 L697.0 594.2 L696.5 594.7 L696.0 596.4 L695.5 598.3 L695.0 599.9 L694.5 599.5 L694.0 597.2 L693.5 596.7 L693.0 594.7 L692.5 593.8 L692.0 593.4 L691.5 592.9 L691.0 591.3 L690.5 591.9 L690.0 591.6 L689.5 592.4 L689.0 591.3 L688.5 591.9 L688.0 592.8 L687.5 592.0 L687.0 593.3 L686.5 594.4 L686.0 594.5 L685.5 596.6 L685.0 599.0 L684.5 600.6 L684.0 601.5 L683.5 599.0 Z" fill="#3cbcc4"/><path d="M683.5 629.9 L684.0 628.4 L684.5 628.2 L685.0 630.0 L685.5 631.8 L686.0 633.2 L686.5 635.1 L687.0 635.8 L687.5 637.0 L688.0 637.1 L688.5 637.2 L689.0 637.0 L689.5 636.8 L690.0 637.1 L690.5 637.1 L691.0 637.6 L691.5 637.3 L692.0 635.5 L692.5 635.7 L693.0 634.2 L693.5 633.5 L694.0 631.5 L694.5 629.6 L695.0 629.1 L695.5 631.3 L696.0 631.8 L696.5 634.3 L697.0 635.2 L697.5 635.1 L698.0 637.3 L698.5 636.9 L699.0 637.9 L699.5 638.2 L700.0 637.1 L700.5 636.8 L701.0 636.8 L701.5 637.3 L702.0 636.8 L702.5 637.2 L703.0 635.4 L703.5 635.1 L704.0 634.2 L704.5 632.3 L705.0 631.5 L705.5 631.2 L706.0 632.6 L706.5 634.1 L707.0 635.2 L707.5 635.5 L708.0 635.5 L708.5 637.1 L709.0 637.5 L709.5 637.1 L710.0 637.1 L710.5 637.6 L711.0 638.3 L711.5 637.6 L712.0 637.0 L712.5 637.7 L713.0 637.2 L713.5 636.2 L714.0 635.8 L714.5 635.0 L715.0 632.7 L715.5 632.2 L716.0 630.4 L716.5 631.9 L717.0 633.7 L717.5 633.9 L718.0 635.3 L718.5 635.9 L719.0 635.9 L719.5 637.8 L720.0 637.9 L720.5 636.9 L721.0 638.3 L721.5 637.6 L722.0 637.9 L722.5 638.0 L723.0 637.3 L723.5 637.3 L724.0 636.6 L724.5 635.4 L725.0 633.8 L725.5 633.5 L726.0 631.9 L726.5 629.1 L727.0 629.6 L727.5 631.5 L728.0 632.9 L728.5 634.8 L729.0 635.0 L729.5 636.2 L730.0 636.1 L730.5 636.5 L731.0 637.7 L731.5 637.5 L732.0 637.6 L732.5 636.8 L733.0 636.9 L733.5 637.4 L734.0 637.4 L734.5 637.0 L735.0 634.9 L735.5 634.4 L736.0 633.8 L736.5 631.7 L737.0 630.4 L737.5 630.6 L738.0 631.0 L738.5 633.9 L739.0 634.1 L739.5 634.8 L740.0 635.9 L740.5 636.0 L741.0 637.0 L741.5 637.5 L742.0 637.3 L742.5 638.0 L743.0 637.5 L743.5 637.1 L744.0 636.9 L744.5 636.2 L745.0 636.1 L745.5 635.4 L746.0 635.5 L746.5 634.1 L747.0 631.9 L747.5 631.9 L748.0 629.5 L748.5 631.4 L749.0 633.9 L749.5 634.0 L750.0 634.7 L750.5 636.7 L751.0 636.2 L751.5 636.7 L752.0 637.8 L752.5 638.0 L753.0 637.6 L753.5 637.4 L754.0 637.9 L754.5 638.0 L755.0 637.1 L755.5 636.5 L756.0 636.3 L756.5 635.8 L757.0 634.7 L757.5 634.3 L758.0 632.8 L758.5 630.3 L759.0 631.8 L759.5 632.8 L760.0 635.1 L760.5 635.5 L761.0 636.9 L761.5 635.9 L762.0 637.0 L762.5 637.4 L763.0 637.7 L763.5 637.5 L764.0 636.8 L764.5 637.0 L765.0 637.1 L765.5 636.9 L766.0 636.3 L766.5 636.1 L767.0 635.6 L767.5 634.3 L768.0 634.0 L768.5 632.4 L769.0 631.1 L769.5 632.0 L770.0 633.0 L770.5 634.4 L771.0 635.2 L771.5 636.0 L772.0 635.9 L772.5 637.0 L773.0 636.6 L773.5 638.1 L774.0 638.0 L774.5 637.7 L775.0 637.0 L775.5 636.9 L776.0 637.4 L776.5 637.2 L777.0 635.8 L777.5 635.5 L778.0 634.7 L778.5 633.5 L779.0 632.4 L779.5 631.7 L780.0 630.9 L780.5 632.9 L781.0 633.2 L781.5 635.0 L782.0 636.3 L782.5 637.0 L783.0 637.1 L783.5 636.5 L784.0 637.0 L784.5 637.4 L785.0 637.0 L785.5 637.8 L786.0 638.0 L786.5 636.6 L787.0 637.6 L787.5 637.0 L788.0 636.5 L788.5 635.8 L789.0 634.3 L789.5 633.5 L790.0 632.7 L790.5 630.5 L791.0 632.1 L791.5 633.8 L792.0 635.1 L792.5 635.5 L793.0 635.5 L793.5 636.9 L794.0 637.4 L794.5 637.2 L795.0 637.4 L795.5 636.7 L796.0 637.6 L796.5 637.4 L797.0 638.0 L797.5 637.8 L798.0 636.6 L798.5 637.1 L799.0 635.4 L799.5 635.8 L800.0 634.8 L800.5 632.9 L801.0 631.2 L801.5 633.8 L802.0 634.6 L802.5 635.0 L803.0 635.8 L803.5 636.9 L804.0 636.3 L804.5 636.9 L805.0 637.9 L805.5 638.0 L806.0 638.1 L806.5 638.2 L807.0 637.7 L807.5 636.8 L808.0 636.9 L808.5 636.2 L809.0 637.1 L809.5 635.7 L810.0 635.4 L810.5 634.4 L811.0 633.4 L811.5 631.5 L812.0 632.6 L812.5 633.3 L813.0 635.2 L813.5 635.3 L814.0 637.0 L814.5 637.2 L815.0 636.9 L815.5 637.1 L816.0 637.1 L816.5 638.2 L817.0 637.0 L817.5 637.3 L818.0 637.9 L818.5 637.1 L819.0 637.5 L819.5 635.9 L820.0 636.2 L820.5 636.0 L821.0 634.4 L821.5 633.1 L822.0 632.7 L822.5 632.2 L823.0 633.4 L823.5 634.4 L824.0 634.9 L824.5 636.4 L825.0 636.8 L825.5 636.3 L826.0 636.8 L826.5 637.0 L827.0 637.6 L827.5 637.5 L828.0 638.0 L828.5 637.9 L829.0 637.2 L829.5 637.6 L830.0 636.1 L830.5 636.0 L831.0 635.0 L831.5 635.1 L832.0 633.2 L832.5 633.4 L833.0 632.4 L833.5 633.5 L834.0 633.9 L834.5 635.3 L835.0 635.4 L835.5 636.4 L836.0 637.5 L836.5 637.4 L837.0 637.2 L837.5 637.2 L838.0 637.0 L838.5 638.1 L839.0 636.7 L839.5 637.8 L840.0 636.5 L840.5 636.5 L841.0 636.7 L841.5 636.4 L842.0 635.5 L842.5 634.1 L843.0 632.0 L843.5 631.4 L844.0 633.2 L844.5 633.9 L845.0 635.6 L845.5 635.4 L846.0 636.0 L846.5 636.8 L847.0 637.1 L847.5 636.9 L848.0 637.1 L848.5 637.9 L849.0 637.5 L849.5 638.0 L850.0 633.7 L850.5 633.2 L851.0 633.5 L851.5 632.7 L852.0 631.1 L852.5 630.0 L853.0 628.0 L853.5 626.2 L854.0 622.8 L854.5 625.5 L855.0 627.3 L855.5 628.8 L856.0 629.9 L856.5 631.0 L857.0 632.9 L857.5 634.1 L858.0 632.9 L858.5 633.4 L859.0 634.0 L859.5 634.2 L860.0 633.6 L860.5 634.7 L861.0 632.9 L861.5 633.0 L862.0 632.0 L862.5 632.2 L863.0 630.1 L863.5 628.7 L864.0 627.6 L864.5 626.2 L865.0 626.7 L865.5 627.9 L866.0 629.3 L866.5 630.8 L867.0 632.1 L867.5 633.4 L868.0 633.4 L868.5 633.0 L869.0 634.0 L869.5 634.2 L870.0 633.7 L870.5 634.7 L871.0 634.7 L871.5 634.6 L872.0 632.8 L872.5 632.9 L873.0 632.4 L873.5 631.5 L874.0 630.6 L874.5 628.0 L875.0 626.8 L875.5 626.5 L876.0 627.3 L876.5 629.5 L877.0 631.3 L877.5 632.2 L878.0 632.9 L878.5 633.3 L879.0 633.9 L879.5 633.7 L880.0 634.2 L880.5 633.9 L881.0 633.5 L881.5 634.0 L882.0 634.1 L882.5 633.0 L883.0 633.2 L883.5 632.4 L884.0 631.5 L884.5 631.5 L885.0 629.5 L885.5 628.2 L886.0 626.1 L886.5 627.7 L887.0 630.0 L887.5 630.6 L888.0 631.8 L888.5 633.0 L889.0 633.5 L889.5 633.2 L890.0 634.0 L890.5 634.8 L891.0 634.6 L891.5 634.2 L892.0 633.7 L892.5 634.9 L893.0 634.8 L893.5 633.3 L894.0 633.4 L894.5 631.9 L895.0 631.1 L895.5 630.5 L896.0 629.2 L896.5 628.2 L897.0 628.7 L897.5 630.2 L898.0 631.3 L898.5 632.7 L899.0 632.2 L899.5 634.0 L900.0 633.6 L900.5 634.1 L901.0 633.8 L901.5 634.4 L902.0 634.6 L902.5 634.7 L903.0 634.8 L903.5 633.5 L904.0 633.7 L904.5 634.0 L905.0 632.5 L905.5 632.7 L906.0 631.6 L906.5 630.1 L907.0 629.3 L907.5 629.0 L908.0 630.2 L908.5 630.5 L909.0 631.7 L909.5 633.1 L910.0 634.3 L910.5 634.0 L911.0 633.8 L911.5 634.0 L912.0 635.3 L912.5 635.0 L913.0 635.1 L913.5 634.5 L914.0 635.0 L914.5 633.5 L915.0 634.0 L915.5 632.7 L916.0 631.8 L916.5 631.6 L917.0 630.5 L917.5 628.9 L918.0 627.6 L918.5 628.5 L919.0 630.4 L919.5 631.0 L920.0 633.2 L920.5 634.1 L921.0 633.7 L921.5 633.7 L922.0 635.1 L922.5 633.8 L923.0 634.7 L923.5 635.3 L924.0 633.8 L924.5 633.9 L925.0 634.4 L925.5 634.3 L926.0 633.1 L926.5 632.4 L927.0 630.9 L927.5 630.0 L928.0 629.3 L928.5 628.2 L929.0 629.4 L929.5 630.1 L930.0 631.1 L930.5 632.9 L931.0 632.7 L931.5 634.6 L932.0 634.5 L932.5 634.1 L933.0 635.0 L933.5 634.1 L934.0 634.2 L934.5 635.2 L935.0 634.4 L935.5 634.3 L936.0 634.0 L936.5 633.5 L937.0 633.4 L937.5 632.1 L938.0 630.6 L938.5 629.7 L939.0 628.0 L939.5 629.4 L940.0 629.6 L940.5 632.0 L941.0 633.1 L941.5 633.4 L942.0 634.0 L942.5 633.8 L943.0 635.4 L943.5 634.9 L944.0 635.4 L944.5 635.2 L945.0 635.2 L945.5 634.2 L946.0 634.6 L946.5 633.5 L947.0 632.7 L947.5 632.2 L948.0 631.5 L948.5 630.2 L949.0 629.5 L949.5 626.3 L950.0 627.4 L950.5 628.6 L951.0 630.7 L951.5 632.4 L952.0 632.4 L952.5 632.9 L953.0 633.4 L953.5 634.5 L954.0 635.3 L954.5 634.4 L955.0 634.9 L955.5 634.6 L956.0 634.3 L956.5 634.5 L957.0 634.2 L957.5 633.0 L958.0 632.7 L958.5 631.5 L959.0 630.6 L959.5 630.1 L960.0 628.4 L960.5 627.3 L961.0 628.6 L961.5 630.3 L962.0 632.2 L962.5 632.2 L963.0 633.7 L963.5 634.9 L964.0 633.8 L964.5 634.6 L965.0 635.7 L965.5 635.1 L966.0 635.2 L966.5 635.5 L967.0 635.1 L967.5 635.0 L968.0 634.1 L968.5 632.6 L969.0 633.2 L969.5 630.5 L970.0 629.5 L970.5 627.5 L971.0 626.5 L971.5 629.2 L972.0 630.7 L972.5 631.0 L973.0 632.0 L973.5 634.2 L974.0 634.9 L974.5 633.9 L975.0 635.5 L975.5 634.8 L976.0 635.2 L976.5 634.5 L977.0 634.7 L977.5 635.7 L978.0 635.1 L978.5 634.7 L979.0 633.4 L979.5 632.2 L980.0 631.1 L980.5 630.3 L981.0 628.7 L981.5 627.7 L982.0 628.1 L982.5 630.8 L983.0 632.0 L983.5 633.0 L984.0 633.0 L984.5 633.9 L985.0 634.2 L985.5 634.1 L986.0 635.4 L986.5 635.2 L987.0 635.0 L987.5 634.4 L988.0 634.3 L988.5 634.6 L989.0 634.4 L989.5 634.4 L990.0 633.8 L990.5 632.1 L991.0 631.6 L991.5 629.8 L992.0 628.0 L992.5 628.6 L993.0 630.6 L993.5 631.4 L994.0 633.3 L994.5 634.1 L995.0 634.4 L995.5 633.9 L996.0 635.4 L996.5 635.9 L997.0 635.9 L997.5 635.1 L998.0 634.5 L998.5 634.8 L999.0 634.3 L999.5 634.0 L1000.0 633.6 L1000.5 633.1 L1001.0 631.7 L1001.5 630.3 L1002.0 628.7 L1002.5 626.9 L1003.0 627.5 L1003.5 628.5 L1004.0 630.5 L1004.5 631.7 L1005.0 632.2 L1005.5 634.1 L1006.0 633.8 L1006.5 634.5 L1007.0 635.7 L1007.5 635.4 L1008.0 634.8 L1008.5 635.7 L1009.0 634.7 L1009.5 635.0 L1010.0 634.2 L1010.5 634.2 L1011.0 633.8 L1011.5 632.5 L1012.0 630.8 L1012.5 629.3 L1013.0 627.3 L1013.5 626.0 L1014.0 629.1 L1014.5 630.1 L1015.0 632.2 L1015.5 632.4 L1016.0 632.9 L1016.5 633.8 L1017.0 635.5 L1017.5 634.6 L1018.0 635.7 L1018.5 635.6 L1019.0 635.1 L1019.5 636.0 L1020.0 635.9 L1020.5 634.3 L1021.0 634.6 L1021.5 633.9 L1022.0 632.5 L1022.5 630.9 L1023.0 628.5 L1023.5 627.2 L1024.0 624.8 L1024.0 658.3 L1023.5 655.3 L1023.0 653.3 L1022.5 652.2 L1022.0 650.1 L1021.5 649.6 L1021.0 649.2 L1020.5 648.8 L1020.0 647.3 L1019.5 647.8 L1019.0 647.8 L1018.5 647.4 L1018.0 647.9 L1017.5 648.2 L1017.0 648.4 L1016.5 649.1 L1016.0 649.7 L1015.5 650.8 L1015.0 651.1 L1014.5 652.7 L1014.0 654.9 L1013.5 657.3 L1013.0 655.1 L1012.5 654.0 L1012.0 652.1 L1011.5 650.4 L1011.0 650.0 L1010.5 649.0 L1010.0 648.2 L1009.5 647.5 L1009.0 647.5 L1008.5 647.8 L1008.0 648.4 L1007.5 648.2 L1007.0 647.3 L1006.5 648.7 L1006.0 648.2 L1005.5 648.5 L1005.0 650.6 L1004.5 651.7 L1004.0 652.8 L1003.5 655.1 L1003.0 655.7 L1002.5 655.1 L1002.0 653.2 L1001.5 651.9 L1001.0 651.4 L1000.5 649.5 L1000.0 649.1 L999.5 647.8 L999.0 648.7 L998.5 647.3 L998.0 648.1 L997.5 647.9 L997.0 647.9 L996.5 647.2 L996.0 648.6 L995.5 648.8 L995.0 649.4 L994.5 649.0 L994.0 651.1 L993.5 651.3 L993.0 653.1 L992.5 654.3 L992.0 654.6 L991.5 653.6 L991.0 651.4 L990.5 650.7 L990.0 649.7 L989.5 649.3 L989.0 648.8 L988.5 647.5 L988.0 647.8 L987.5 648.0 L987.0 647.6 L986.5 648.1 L986.0 647.2 L985.5 647.3 L985.0 649.1 L984.5 648.5 L984.0 649.6 L983.5 649.7 L983.0 651.0 L982.5 652.8 L982.0 654.0 L981.5 655.2 L981.0 654.6 L980.5 652.1 L980.0 651.3 L979.5 649.3 L979.0 648.8 L978.5 649.0 L978.0 647.9 L977.5 647.7 L977.0 648.0 L976.5 648.6 L976.0 647.5 L975.5 648.2 L975.0 648.4 L974.5 649.1 L974.0 649.0 L973.5 649.1 L973.0 649.6 L972.5 651.9 L972.0 653.2 L971.5 653.6 L971.0 656.5 L970.5 655.5 L970.0 653.1 L969.5 652.0 L969.0 650.4 L968.5 649.8 L968.0 649.6 L967.5 649.0 L967.0 648.5 L966.5 648.4 L966.0 648.3 L965.5 647.6 L965.0 647.8 L964.5 648.8 L964.0 648.3 L963.5 648.6 L963.0 648.8 L962.5 650.3 L962.0 650.7 L961.5 651.8 L961.0 653.0 L960.5 655.3 L960.0 654.2 L959.5 652.9 L959.0 651.9 L958.5 650.9 L958.0 650.5 L957.5 649.6 L957.0 648.4 L956.5 649.0 L956.0 647.5 L955.5 647.7 L955.0 648.5 L954.5 647.5 L954.0 647.5 L953.5 649.1 L953.0 649.4 L952.5 649.3 L952.0 650.5 L951.5 650.7 L951.0 652.6 L950.5 653.9 L950.0 655.0 L949.5 656.7 L949.0 653.4 L948.5 652.4 L948.0 651.4 L947.5 650.0 L947.0 649.0 L946.5 649.4 L946.0 648.5 L945.5 648.0 L945.0 648.2 L944.5 647.8 L944.0 647.8 L943.5 648.0 L943.0 648.9 L942.5 648.2 L942.0 649.4 L941.5 648.9 L941.0 650.2 L940.5 650.9 L940.0 653.2 L939.5 654.9 L939.0 654.9 L938.5 653.8 L938.0 652.7 L937.5 651.0 L937.0 649.8 L936.5 649.4 L936.0 648.6 L935.5 648.4 L935.0 648.8 L934.5 648.6 L934.0 648.6 L933.5 647.6 L933.0 648.4 L932.5 648.0 L932.0 648.6 L931.5 649.4 L931.0 649.9 L930.5 649.8 L930.0 651.5 L929.5 652.1 L929.0 654.0 L928.5 655.2 L928.0 653.3 L927.5 652.2 L927.0 651.5 L926.5 649.8 L926.0 650.4 L925.5 648.9 L925.0 649.4 L924.5 649.2 L924.0 647.8 L923.5 648.6 L923.0 648.0 L922.5 648.7 L922.0 648.9 L921.5 649.1 L921.0 649.5 L920.5 648.9 L920.0 650.4 L919.5 651.6 L919.0 652.1 L918.5 654.5 L918.0 656.1 L917.5 655.2 L917.0 652.6 L916.5 652.7 L916.0 651.5 L915.5 650.6 L915.0 649.7 L914.5 648.5 L914.0 648.5 L913.5 648.0 L913.0 648.6 L912.5 648.3 L912.0 649.1 L911.5 648.2 L911.0 648.8 L910.5 648.3 L910.0 648.9 L909.5 650.8 L909.0 651.4 L908.5 651.2 L908.0 652.3 L907.5 654.4 L907.0 655.1 L906.5 653.6 L906.0 651.4 L905.5 651.4 L905.0 649.4 L904.5 649.1 L904.0 649.6 L903.5 649.4 L903.0 649.0 L902.5 648.1 L902.0 648.5 L901.5 648.0 L901.0 648.8 L900.5 648.4 L900.0 648.6 L899.5 649.9 L899.0 649.5 L898.5 651.3 L898.0 651.8 L897.5 652.5 L897.0 654.6 L896.5 655.7 L896.0 653.1 L895.5 651.9 L895.0 651.6 L894.5 651.2 L894.0 649.8 L893.5 648.6 L893.0 649.0 L892.5 648.0 L892.0 648.6 L891.5 648.5 L891.0 648.0 L890.5 649.2 L890.0 649.2 L889.5 648.9 L889.0 648.9 L888.5 649.4 L888.0 651.2 L887.5 652.5 L887.0 653.4 L886.5 654.7 L886.0 656.3 L885.5 655.6 L885.0 653.2 L884.5 652.3 L884.0 650.8 L883.5 650.0 L883.0 650.1 L882.5 649.0 L882.0 649.7 L881.5 649.0 L881.0 648.1 L880.5 649.0 L880.0 649.4 L879.5 648.8 L879.0 649.9 L878.5 649.6 L878.0 650.5 L877.5 651.6 L877.0 652.4 L876.5 653.7 L876.0 655.0 L875.5 657.4 L875.0 655.3 L874.5 654.8 L874.0 653.2 L873.5 651.3 L873.0 650.6 L872.5 649.6 L872.0 649.7 L871.5 649.4 L871.0 648.7 L870.5 649.0 L870.0 649.1 L869.5 649.6 L869.0 648.9 L868.5 649.3 L868.0 649.4 L867.5 650.1 L867.0 651.7 L866.5 652.2 L866.0 652.8 L865.5 654.8 L865.0 657.0 L864.5 656.7 L864.0 654.6 L863.5 653.0 L863.0 652.1 L862.5 651.6 L862.0 649.6 L861.5 649.4 L861.0 649.8 L860.5 649.2 L860.0 648.4 L859.5 648.8 L859.0 649.1 L858.5 648.4 L858.0 649.6 L857.5 650.0 L857.0 650.9 L856.5 650.5 L856.0 652.5 L855.5 654.5 L855.0 656.6 L854.5 658.6 L854.0 659.7 L853.5 656.8 L853.0 655.8 L852.5 653.6 L852.0 651.4 L851.5 651.2 L851.0 650.2 L850.5 650.3 L850.0 649.4 L849.5 645.2 L849.0 644.9 L848.5 644.7 L848.0 645.9 L847.5 645.8 L847.0 645.9 L846.5 645.6 L846.0 646.5 L845.5 646.6 L845.0 648.8 L844.5 649.6 L844.0 649.8 L843.5 651.5 L843.0 650.1 L842.5 649.0 L842.0 648.3 L841.5 647.6 L841.0 646.2 L840.5 646.3 L840.0 646.0 L839.5 646.0 L839.0 646.2 L838.5 645.2 L838.0 646.2 L837.5 645.5 L837.0 646.3 L836.5 645.1 L836.0 646.3 L835.5 645.9 L835.0 646.3 L834.5 647.7 L834.0 648.5 L833.5 649.4 L833.0 650.8 L832.5 651.0 L832.0 648.9 L831.5 647.8 L831.0 647.7 L830.5 647.0 L830.0 645.8 L829.5 646.1 L829.0 645.4 L828.5 645.5 L828.0 645.5 L827.5 645.1 L827.0 645.3 L826.5 645.5 L826.0 646.0 L825.5 645.5 L825.0 646.4 L824.5 646.9 L824.0 647.0 L823.5 647.9 L823.0 648.7 L822.5 650.4 L822.0 650.3 L821.5 649.4 L821.0 647.9 L820.5 648.0 L820.0 646.5 L819.5 647.0 L819.0 646.7 L818.5 645.8 L818.0 645.0 L817.5 644.8 L817.0 646.0 L816.5 645.9 L816.0 645.5 L815.5 646.1 L815.0 646.2 L814.5 645.8 L814.0 646.9 L813.5 647.7 L813.0 648.6 L812.5 650.0 L812.0 650.1 L811.5 651.1 L811.0 650.2 L810.5 648.6 L810.0 647.5 L809.5 646.6 L809.0 647.0 L808.5 645.5 L808.0 645.8 L807.5 646.3 L807.0 645.7 L806.5 645.0 L806.0 645.0 L805.5 644.9 L805.0 645.6 L804.5 646.4 L804.0 646.2 L803.5 647.3 L803.0 646.5 L802.5 647.3 L802.0 648.8 L801.5 650.5 L801.0 651.3 L800.5 649.2 L800.0 648.2 L799.5 647.6 L799.0 646.3 L798.5 646.3 L798.0 646.8 L797.5 646.5 L797.0 646.4 L796.5 644.8 L796.0 645.4 L795.5 646.0 L795.0 646.3 L794.5 645.8 L794.0 646.4 L793.5 646.4 L793.0 646.5 L792.5 647.1 L792.0 648.6 L791.5 649.7 L791.0 649.8 L790.5 651.8 L790.0 650.4 L789.5 650.1 L789.0 648.3 L788.5 647.2 L788.0 646.7 L787.5 646.2 L787.0 645.5 L786.5 645.1 L786.0 645.3 L785.5 645.7 L785.0 645.3 L784.5 645.1 L784.0 645.5 L783.5 646.4 L783.0 645.9 L782.5 645.8 L782.0 647.9 L781.5 648.7 L781.0 648.8 L780.5 649.8 L780.0 651.6 L779.5 651.8 L779.0 650.9 L778.5 649.6 L778.0 648.3 L777.5 647.9 L777.0 646.5 L776.5 646.7 L776.0 646.3 L775.5 645.8 L775.0 645.1 L774.5 645.3 L774.0 645.8 L773.5 645.2 L773.0 645.5 L772.5 646.3 L772.0 647.2 L771.5 646.8 L771.0 647.4 L770.5 648.2 L770.0 649.9 L769.5 652.1 L769.0 653.0 L768.5 650.2 L768.0 648.9 L767.5 648.5 L767.0 647.9 L766.5 646.5 L766.0 645.6 L765.5 645.7 L765.0 646.1 L764.5 645.2 L764.0 644.8 L763.5 645.6 L763.0 645.8 L762.5 646.3 L762.0 645.7 L761.5 646.1 L761.0 646.9 L760.5 647.2 L760.0 648.3 L759.5 649.0 L759.0 651.4 L758.5 652.1 L758.0 651.1 L757.5 649.8 L757.0 647.6 L756.5 647.1 L756.0 647.1 L755.5 646.7 L755.0 646.4 L754.5 644.9 L754.0 646.3 L753.5 645.5 L753.0 645.1 L752.5 645.7 L752.0 646.2 L751.5 646.1 L751.0 645.8 L750.5 647.4 L750.0 648.3 L749.5 648.8 L749.0 650.6 L748.5 651.9 L748.0 653.8 L747.5 651.9 L747.0 650.6 L746.5 649.3 L746.0 648.2 L745.5 647.7 L745.0 646.8 L744.5 645.8 L744.0 645.7 L743.5 646.3 L743.0 645.4 L742.5 645.5 L742.0 646.1 L741.5 644.9 L741.0 645.3 L740.5 646.7 L740.0 646.7 L739.5 647.5 L739.0 648.2 L738.5 649.8 L738.0 651.7 L737.5 653.1 L737.0 652.7 L736.5 651.3 L736.0 649.1 L735.5 647.8 L735.0 648.2 L734.5 646.0 L734.0 646.0 L733.5 646.6 L733.0 645.0 L732.5 645.7 L732.0 645.8 L731.5 645.1 L731.0 645.2 L730.5 646.4 L730.0 646.7 L729.5 646.7 L729.0 647.1 L728.5 648.4 L728.0 649.7 L727.5 651.7 L727.0 652.3 L726.5 654.4 L726.0 652.3 L725.5 649.5 L725.0 648.7 L724.5 647.7 L724.0 647.1 L723.5 646.7 L723.0 646.6 L722.5 645.3 L722.0 645.7 L721.5 645.5 L721.0 645.4 L720.5 645.8 L720.0 645.4 L719.5 646.3 L719.0 646.2 L718.5 646.6 L718.0 648.4 L717.5 648.4 L717.0 649.2 L716.5 651.3 L716.0 651.8 L715.5 650.9 L715.0 649.9 L714.5 649.1 L714.0 647.7 L713.5 646.8 L713.0 645.8 L712.5 645.4 L712.0 645.3 L711.5 644.9 L711.0 644.8 L710.5 645.5 L710.0 645.2 L709.5 646.1 L709.0 646.1 L708.5 646.2 L708.0 647.6 L707.5 648.3 L707.0 648.7 L706.5 649.1 L706.0 650.3 L705.5 652.7 L705.0 651.2 L704.5 649.5 L704.0 648.2 L703.5 647.6 L703.0 646.4 L702.5 646.3 L702.0 645.7 L701.5 645.3 L701.0 645.9 L700.5 645.9 L700.0 645.9 L699.5 645.5 L699.0 645.4 L698.5 646.3 L698.0 646.2 L697.5 646.5 L697.0 647.3 L696.5 649.5 L696.0 650.1 L695.5 652.1 L695.0 655.0 L694.5 654.8 L694.0 652.3 L693.5 650.1 L693.0 649.2 L692.5 648.4 L692.0 646.5 L691.5 646.3 L691.0 646.5 L690.5 645.3 L690.0 644.8 L689.5 645.0 L689.0 645.9 L688.5 645.0 L688.0 646.6 L687.5 645.9 L687.0 647.1 L686.5 647.9 L686.0 649.4 L685.5 650.3 L685.0 652.0 L684.5 654.0 L684.0 654.7 L683.5 652.7 Z" fill="#3cbcc4"/><rect x="664" y="613.7" width="360" height="3.2" fill="#9ab1b4"/><path d="M663 661 L699 601.3 L965.5 601.3 L1026 623" stroke="#c9c9a0" stroke-width="2.2" fill="none"/><rect x="662" y="542" width="2.2" height="125" fill="#b3c7c1"/></svg>
<div style="left:667px;top:547.40px;font-size:13px;line-height:13px;color:#c6d4d4;white-space:nowrap;-webkit-text-stroke:0.2px #c6d4d4;">42543__erh__p-b8-104-iron-repeator 48000 1</div>
<svg style="left:675.8px;top:641.7px;" width="16" height="13" viewBox="0 0 16 13"><rect x="1.10" y="8.20" width="1.8" height="3.8" fill="#e8f8f8"/><rect x="4.70" y="6.40" width="1.8" height="5.6" fill="#e8f8f8"/><rect x="8.30" y="5.20" width="1.8" height="6.8" fill="#e8f8f8"/><rect x="11.90" y="2.70" width="1.8" height="9.3" fill="#e8f8f8"/></svg>
</body></html>
